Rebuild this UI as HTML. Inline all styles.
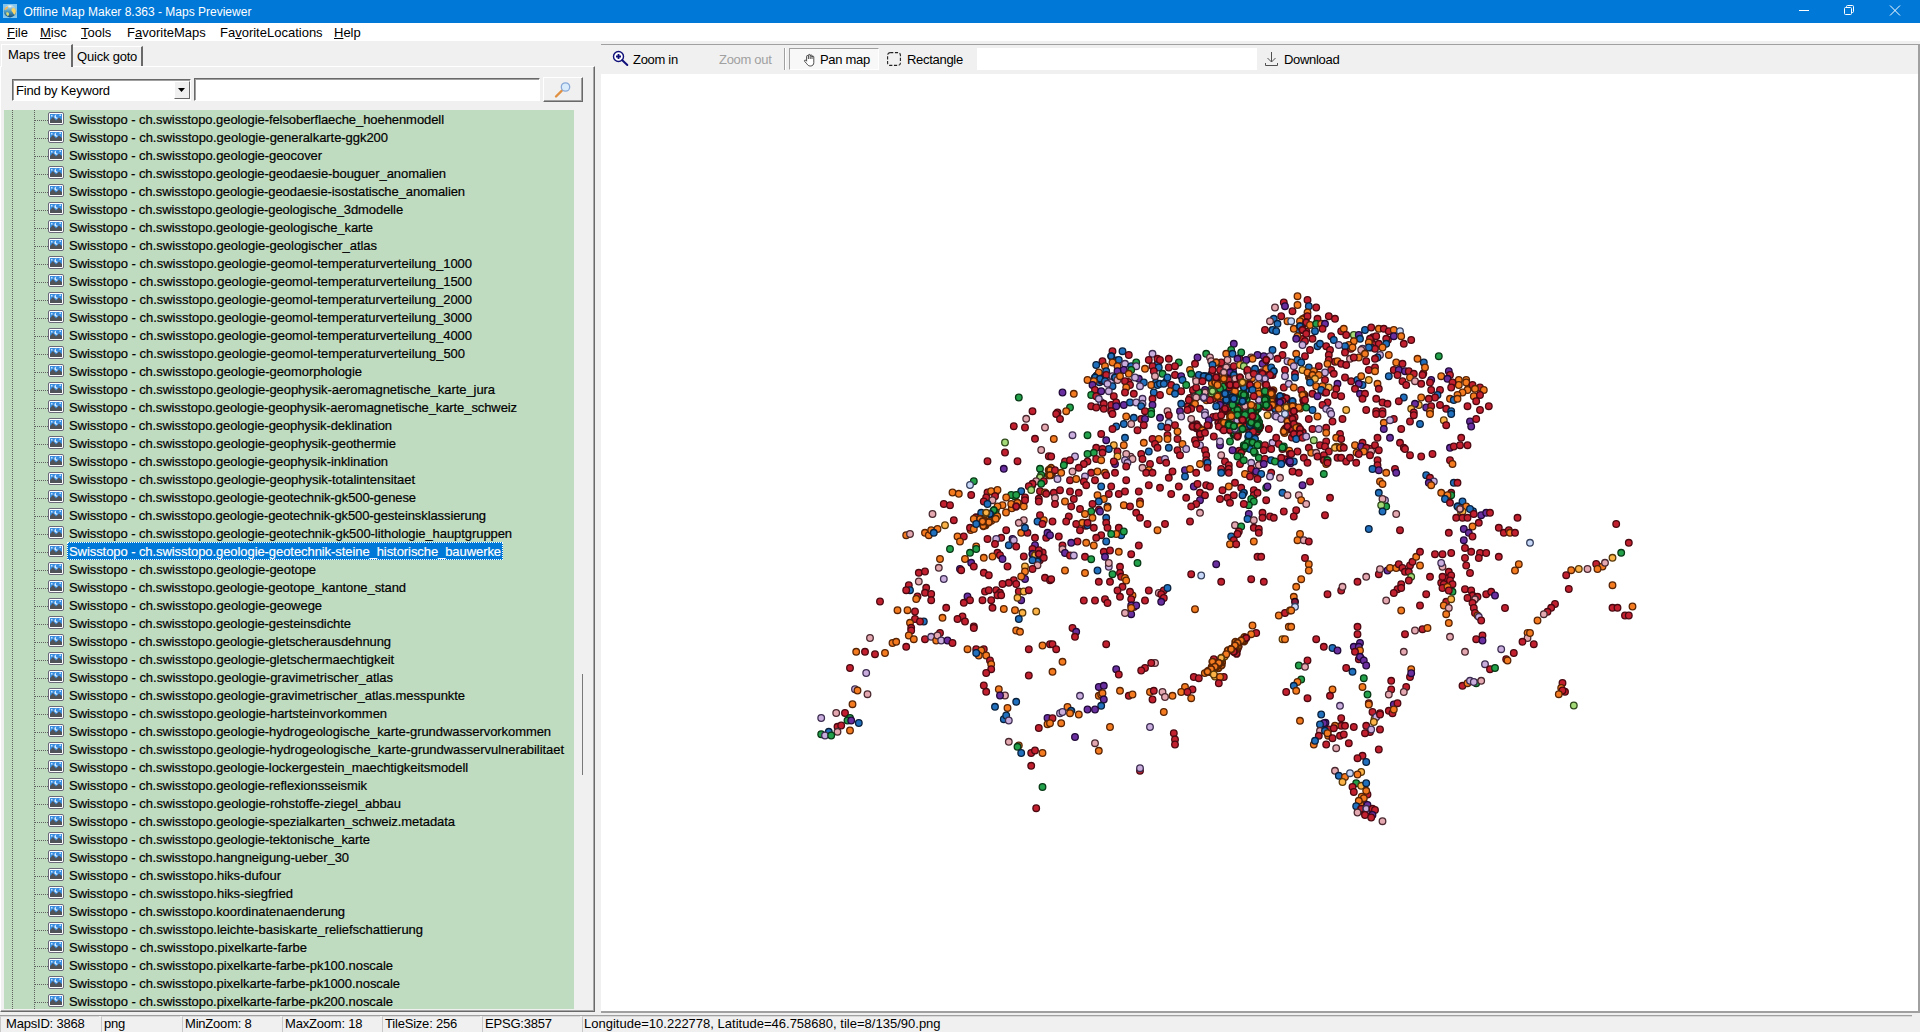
<!DOCTYPE html><html><head><meta charset="utf-8"><title>Offline Map Maker 8.363 - Maps Previewer</title><style>
*{box-sizing:border-box;margin:0;padding:0}
html,body{width:1920px;height:1032px;overflow:hidden;background:#f0f0f0}
body{position:relative;font-family:"Liberation Sans",sans-serif;font-size:12px;color:#000}
.abs{position:absolute}
#title{left:0;top:0;width:1920px;height:23px;background:#0078d7;color:#fff}
#title .t{left:23.5px;top:0.5px;line-height:23px;font-size:12px;white-space:nowrap}
#menu{left:0;top:23px;width:1920px;height:18px;background:#fff}
#menu span{position:absolute;top:0;line-height:19px;font-size:13px;white-space:nowrap}
#menu u{text-decoration:underline;text-underline-offset:1px}
.tab{position:absolute;background:#f0f0f0;font-size:13px;white-space:nowrap}
#tree{left:4px;top:110px;width:570px;height:899px;background:#c0dcc0;overflow:hidden}
.r{position:absolute;left:0;height:18px;width:570px}
.r i{position:absolute;left:44px;top:2px;width:16px;height:13px}
.r b{position:absolute;left:64px;top:0;height:18px;line-height:20px;-webkit-text-stroke:0.2px #000;font-weight:normal;white-space:nowrap;padding:0 1px;font-size:13px}
.r.sel b{left:63px;padding:0 2px;background:#0078d7;color:#fff;-webkit-text-stroke:0.2px #fff;outline:1px dotted #fff;outline-offset:-1px}
.vd{position:absolute;width:1px;top:0;height:899px;background-image:repeating-linear-gradient(to bottom,#606060 0 1px,transparent 1px 2px)}
.hd{position:absolute;left:31px;width:13px;height:1px;top:10px;background-image:repeating-linear-gradient(to right,#606060 0 1px,transparent 1px 2px)}
#status span{position:absolute;top:1016px;height:16px;line-height:13px;font-size:13px;letter-spacing:-0.2px;white-space:nowrap;border-left:1px solid #c8c8c8;border-top:1px solid #d8d8d8;padding-left:2px}
.tb{position:absolute;top:45px;height:29px;line-height:29px;font-size:13px;letter-spacing:-0.3px;white-space:nowrap}
</style></head><body>
<div id="title" class="abs"><svg class="abs" style="left:3px;top:4px" width="14" height="14" viewBox="0 0 14 14"><defs><linearGradient id="gl" x1="0" y1="0" x2="0" y2="1"><stop offset="0" stop-color="#dfeef0"/><stop offset="0.45" stop-color="#5aa4c8"/><stop offset="1" stop-color="#14507c"/></linearGradient></defs><rect width="14" height="14" fill="#84c6ee"/><circle cx="7" cy="7.2" r="6.2" fill="url(#gl)"/><path d="M1.3 5.5C2 3.5 3.6 2.2 5 2.4C5.6 3.4 4.4 4.6 3.4 5.4C2.6 6 1.8 6.2 1.3 5.5Z" fill="#f2b45c"/><path d="M8.6 5.2C9.6 3.6 11.4 3.4 12.4 5C13.2 6.6 13 8.6 12 10.2C11.2 11.4 10.4 9.8 9.8 8.6C9 7.6 8 6.4 8.6 5.2Z" fill="#f8d468"/><path d="M3.4 8.6C4.4 8 5.8 8.6 6 9.8C6.2 11 5.4 12.2 4.4 11.8C3.4 11.2 2.8 9.6 3.4 8.6Z" fill="#d8d878"/><path d="M5.2 2.2C6.4 1.4 8 1.6 8.6 2.6C8 3.6 6.4 3.8 5.2 2.2Z" fill="#f4f4e4"/></svg><span class="abs t">Offline Map Maker 8.363 - Maps Previewer</span><svg class="abs" style="left:1790px;top:0" width="130" height="23" viewBox="0 0 130 23" fill="none" stroke="#fff" stroke-width="1"><path d="M9 10.5H19"/><rect x="54.5" y="7.5" width="7" height="7" rx="1"/><path d="M56.5 7.5V6.5a1 1 0 0 1 1-1H62.5a1 1 0 0 1 1 1V11.5a1 1 0 0 1-1 1H61.5"/><path d="M100 5.5L110 15.5M110 5.5L100 15.5"/></svg></div>
<div id="menu" class="abs"><span style="left:7px"><u>F</u>ile</span><span style="left:40px"><u>M</u>isc</span><span style="left:81px"><u>T</u>ools</span><span style="left:127px">F<u>a</u>voriteMaps</span><span style="left:220px">Fa<u>v</u>oriteLocations</span><span style="left:334px"><u>H</u>elp</span></div>
<div class="abs" style="left:0;top:66px;width:595px;height:946px;border-top:1px solid #fff;border-left:1px solid #fff;border-right:1px solid #696969;border-bottom:1px solid #696969;box-shadow:inset -1px -1px 0 #a8a8a8"></div>
<div class="tab" style="left:1px;top:44px;width:72px;height:23px;border-top:1px solid #fff;border-left:1px solid #fff;border-right:2px solid #696969;line-height:20px;padding-left:6px">Maps tree</div>
<div class="tab" style="left:73px;top:46px;width:70px;height:20px;border-top:1px solid #fff;border-right:2px solid #696969;line-height:20px;padding-left:4px;letter-spacing:-0.2px">Quick goto</div>
<div class="abs" style="left:12px;top:79px;width:179px;height:22px;background:#fff;border:1px solid #a0a0a0;border-top-color:#696969;border-left-color:#696969;border-right-color:#fff;border-bottom-color:#fff;box-shadow:inset 1px 1px 0 #a0a0a0"><span class="abs" style="left:3px;top:2px;line-height:18px;font-size:13px;letter-spacing:-0.2px;white-space:nowrap">Find by Keyword</span><div class="abs" style="left:161px;top:1px;width:16px;height:18px;background:#f0f0f0;border:1px solid #fff;border-right-color:#696969;border-bottom-color:#696969"><svg class="abs" style="left:3px;top:6px" width="8" height="4"><path d="M0 0H7L3.5 4Z" fill="#000"/></svg></div></div>
<div class="abs" style="left:194px;top:78px;width:346px;height:23px;background:#fff;border:1px solid #696969;border-right-color:#fff;border-bottom-color:#fff;box-shadow:inset 1px 1px 0 #a0a0a0"></div>
<div class="abs" style="left:543px;top:77px;width:40px;height:25px;background:#f0f0f0;border:1px solid #fff;border-right-color:#696969;border-bottom-color:#696969;box-shadow:inset -1px -1px 0 #a0a0a0"><svg class="abs" style="left:10px;top:3px" width="18" height="18" viewBox="0 0 18 18"><path d="M2 15.5L8 9.5" stroke="#e09040" stroke-width="2.4" stroke-linecap="round"/><circle cx="11.5" cy="6" r="4.2" fill="#d8ecfc" stroke="#88a8d8" stroke-width="1.3"/></svg></div>
<div id="tree" class="abs"><div class="vd" style="left:8px"></div><div class="vd" style="left:30px"></div>
<div class="r" style="top:0px"><div class="hd"></div><i><svg width="16" height="13" viewBox="0 0 16 13"><rect x="0.5" y="0.5" width="15" height="12" rx="1.5" fill="#fff" stroke="#686878"/><rect x="2" y="2" width="12" height="9" fill="#3a8ee0"/><path d="M2 11V8L5 5L8 8.5L11 5.5L14 8V11Z" fill="#505458"/><rect x="3" y="3" width="1.5" height="1.5" fill="#c8e4ff"/><path d="M8.6 2.6a2 2 0 1 0 1.6 2.9a1.6 1.6 0 0 1-1.6-2.9z" fill="#e8f4ff"/><rect x="11.5" y="2.5" width="1.5" height="1.5" fill="#c8e4ff"/></svg></i><b style="letter-spacing:-0.071px">Swisstopo - ch.swisstopo.geologie-felsoberflaeche_hoehenmodell</b></div>
<div class="r" style="top:18px"><div class="hd"></div><i><svg width="16" height="13" viewBox="0 0 16 13"><rect x="0.5" y="0.5" width="15" height="12" rx="1.5" fill="#fff" stroke="#686878"/><rect x="2" y="2" width="12" height="9" fill="#3a8ee0"/><path d="M2 11V8L5 5L8 8.5L11 5.5L14 8V11Z" fill="#505458"/><rect x="3" y="3" width="1.5" height="1.5" fill="#c8e4ff"/><path d="M8.6 2.6a2 2 0 1 0 1.6 2.9a1.6 1.6 0 0 1-1.6-2.9z" fill="#e8f4ff"/><rect x="11.5" y="2.5" width="1.5" height="1.5" fill="#c8e4ff"/></svg></i><b style="letter-spacing:-0.049px">Swisstopo - ch.swisstopo.geologie-generalkarte-ggk200</b></div>
<div class="r" style="top:36px"><div class="hd"></div><i><svg width="16" height="13" viewBox="0 0 16 13"><rect x="0.5" y="0.5" width="15" height="12" rx="1.5" fill="#fff" stroke="#686878"/><rect x="2" y="2" width="12" height="9" fill="#3a8ee0"/><path d="M2 11V8L5 5L8 8.5L11 5.5L14 8V11Z" fill="#505458"/><rect x="3" y="3" width="1.5" height="1.5" fill="#c8e4ff"/><path d="M8.6 2.6a2 2 0 1 0 1.6 2.9a1.6 1.6 0 0 1-1.6-2.9z" fill="#e8f4ff"/><rect x="11.5" y="2.5" width="1.5" height="1.5" fill="#c8e4ff"/></svg></i><b style="letter-spacing:-0.067px">Swisstopo - ch.swisstopo.geologie-geocover</b></div>
<div class="r" style="top:54px"><div class="hd"></div><i><svg width="16" height="13" viewBox="0 0 16 13"><rect x="0.5" y="0.5" width="15" height="12" rx="1.5" fill="#fff" stroke="#686878"/><rect x="2" y="2" width="12" height="9" fill="#3a8ee0"/><path d="M2 11V8L5 5L8 8.5L11 5.5L14 8V11Z" fill="#505458"/><rect x="3" y="3" width="1.5" height="1.5" fill="#c8e4ff"/><path d="M8.6 2.6a2 2 0 1 0 1.6 2.9a1.6 1.6 0 0 1-1.6-2.9z" fill="#e8f4ff"/><rect x="11.5" y="2.5" width="1.5" height="1.5" fill="#c8e4ff"/></svg></i><b style="letter-spacing:-0.075px">Swisstopo - ch.swisstopo.geologie-geodaesie-bouguer_anomalien</b></div>
<div class="r" style="top:72px"><div class="hd"></div><i><svg width="16" height="13" viewBox="0 0 16 13"><rect x="0.5" y="0.5" width="15" height="12" rx="1.5" fill="#fff" stroke="#686878"/><rect x="2" y="2" width="12" height="9" fill="#3a8ee0"/><path d="M2 11V8L5 5L8 8.5L11 5.5L14 8V11Z" fill="#505458"/><rect x="3" y="3" width="1.5" height="1.5" fill="#c8e4ff"/><path d="M8.6 2.6a2 2 0 1 0 1.6 2.9a1.6 1.6 0 0 1-1.6-2.9z" fill="#e8f4ff"/><rect x="11.5" y="2.5" width="1.5" height="1.5" fill="#c8e4ff"/></svg></i><b style="letter-spacing:-0.088px">Swisstopo - ch.swisstopo.geologie-geodaesie-isostatische_anomalien</b></div>
<div class="r" style="top:90px"><div class="hd"></div><i><svg width="16" height="13" viewBox="0 0 16 13"><rect x="0.5" y="0.5" width="15" height="12" rx="1.5" fill="#fff" stroke="#686878"/><rect x="2" y="2" width="12" height="9" fill="#3a8ee0"/><path d="M2 11V8L5 5L8 8.5L11 5.5L14 8V11Z" fill="#505458"/><rect x="3" y="3" width="1.5" height="1.5" fill="#c8e4ff"/><path d="M8.6 2.6a2 2 0 1 0 1.6 2.9a1.6 1.6 0 0 1-1.6-2.9z" fill="#e8f4ff"/><rect x="11.5" y="2.5" width="1.5" height="1.5" fill="#c8e4ff"/></svg></i><b style="letter-spacing:-0.089px">Swisstopo - ch.swisstopo.geologie-geologische_3dmodelle</b></div>
<div class="r" style="top:108px"><div class="hd"></div><i><svg width="16" height="13" viewBox="0 0 16 13"><rect x="0.5" y="0.5" width="15" height="12" rx="1.5" fill="#fff" stroke="#686878"/><rect x="2" y="2" width="12" height="9" fill="#3a8ee0"/><path d="M2 11V8L5 5L8 8.5L11 5.5L14 8V11Z" fill="#505458"/><rect x="3" y="3" width="1.5" height="1.5" fill="#c8e4ff"/><path d="M8.6 2.6a2 2 0 1 0 1.6 2.9a1.6 1.6 0 0 1-1.6-2.9z" fill="#e8f4ff"/><rect x="11.5" y="2.5" width="1.5" height="1.5" fill="#c8e4ff"/></svg></i><b style="letter-spacing:-0.075px">Swisstopo - ch.swisstopo.geologie-geologische_karte</b></div>
<div class="r" style="top:126px"><div class="hd"></div><i><svg width="16" height="13" viewBox="0 0 16 13"><rect x="0.5" y="0.5" width="15" height="12" rx="1.5" fill="#fff" stroke="#686878"/><rect x="2" y="2" width="12" height="9" fill="#3a8ee0"/><path d="M2 11V8L5 5L8 8.5L11 5.5L14 8V11Z" fill="#505458"/><rect x="3" y="3" width="1.5" height="1.5" fill="#c8e4ff"/><path d="M8.6 2.6a2 2 0 1 0 1.6 2.9a1.6 1.6 0 0 1-1.6-2.9z" fill="#e8f4ff"/><rect x="11.5" y="2.5" width="1.5" height="1.5" fill="#c8e4ff"/></svg></i><b style="letter-spacing:-0.053px">Swisstopo - ch.swisstopo.geologie-geologischer_atlas</b></div>
<div class="r" style="top:144px"><div class="hd"></div><i><svg width="16" height="13" viewBox="0 0 16 13"><rect x="0.5" y="0.5" width="15" height="12" rx="1.5" fill="#fff" stroke="#686878"/><rect x="2" y="2" width="12" height="9" fill="#3a8ee0"/><path d="M2 11V8L5 5L8 8.5L11 5.5L14 8V11Z" fill="#505458"/><rect x="3" y="3" width="1.5" height="1.5" fill="#c8e4ff"/><path d="M8.6 2.6a2 2 0 1 0 1.6 2.9a1.6 1.6 0 0 1-1.6-2.9z" fill="#e8f4ff"/><rect x="11.5" y="2.5" width="1.5" height="1.5" fill="#c8e4ff"/></svg></i><b style="letter-spacing:-0.025px">Swisstopo - ch.swisstopo.geologie-geomol-temperaturverteilung_1000</b></div>
<div class="r" style="top:162px"><div class="hd"></div><i><svg width="16" height="13" viewBox="0 0 16 13"><rect x="0.5" y="0.5" width="15" height="12" rx="1.5" fill="#fff" stroke="#686878"/><rect x="2" y="2" width="12" height="9" fill="#3a8ee0"/><path d="M2 11V8L5 5L8 8.5L11 5.5L14 8V11Z" fill="#505458"/><rect x="3" y="3" width="1.5" height="1.5" fill="#c8e4ff"/><path d="M8.6 2.6a2 2 0 1 0 1.6 2.9a1.6 1.6 0 0 1-1.6-2.9z" fill="#e8f4ff"/><rect x="11.5" y="2.5" width="1.5" height="1.5" fill="#c8e4ff"/></svg></i><b style="letter-spacing:-0.025px">Swisstopo - ch.swisstopo.geologie-geomol-temperaturverteilung_1500</b></div>
<div class="r" style="top:180px"><div class="hd"></div><i><svg width="16" height="13" viewBox="0 0 16 13"><rect x="0.5" y="0.5" width="15" height="12" rx="1.5" fill="#fff" stroke="#686878"/><rect x="2" y="2" width="12" height="9" fill="#3a8ee0"/><path d="M2 11V8L5 5L8 8.5L11 5.5L14 8V11Z" fill="#505458"/><rect x="3" y="3" width="1.5" height="1.5" fill="#c8e4ff"/><path d="M8.6 2.6a2 2 0 1 0 1.6 2.9a1.6 1.6 0 0 1-1.6-2.9z" fill="#e8f4ff"/><rect x="11.5" y="2.5" width="1.5" height="1.5" fill="#c8e4ff"/></svg></i><b style="letter-spacing:-0.025px">Swisstopo - ch.swisstopo.geologie-geomol-temperaturverteilung_2000</b></div>
<div class="r" style="top:198px"><div class="hd"></div><i><svg width="16" height="13" viewBox="0 0 16 13"><rect x="0.5" y="0.5" width="15" height="12" rx="1.5" fill="#fff" stroke="#686878"/><rect x="2" y="2" width="12" height="9" fill="#3a8ee0"/><path d="M2 11V8L5 5L8 8.5L11 5.5L14 8V11Z" fill="#505458"/><rect x="3" y="3" width="1.5" height="1.5" fill="#c8e4ff"/><path d="M8.6 2.6a2 2 0 1 0 1.6 2.9a1.6 1.6 0 0 1-1.6-2.9z" fill="#e8f4ff"/><rect x="11.5" y="2.5" width="1.5" height="1.5" fill="#c8e4ff"/></svg></i><b style="letter-spacing:-0.025px">Swisstopo - ch.swisstopo.geologie-geomol-temperaturverteilung_3000</b></div>
<div class="r" style="top:216px"><div class="hd"></div><i><svg width="16" height="13" viewBox="0 0 16 13"><rect x="0.5" y="0.5" width="15" height="12" rx="1.5" fill="#fff" stroke="#686878"/><rect x="2" y="2" width="12" height="9" fill="#3a8ee0"/><path d="M2 11V8L5 5L8 8.5L11 5.5L14 8V11Z" fill="#505458"/><rect x="3" y="3" width="1.5" height="1.5" fill="#c8e4ff"/><path d="M8.6 2.6a2 2 0 1 0 1.6 2.9a1.6 1.6 0 0 1-1.6-2.9z" fill="#e8f4ff"/><rect x="11.5" y="2.5" width="1.5" height="1.5" fill="#c8e4ff"/></svg></i><b style="letter-spacing:-0.025px">Swisstopo - ch.swisstopo.geologie-geomol-temperaturverteilung_4000</b></div>
<div class="r" style="top:234px"><div class="hd"></div><i><svg width="16" height="13" viewBox="0 0 16 13"><rect x="0.5" y="0.5" width="15" height="12" rx="1.5" fill="#fff" stroke="#686878"/><rect x="2" y="2" width="12" height="9" fill="#3a8ee0"/><path d="M2 11V8L5 5L8 8.5L11 5.5L14 8V11Z" fill="#505458"/><rect x="3" y="3" width="1.5" height="1.5" fill="#c8e4ff"/><path d="M8.6 2.6a2 2 0 1 0 1.6 2.9a1.6 1.6 0 0 1-1.6-2.9z" fill="#e8f4ff"/><rect x="11.5" y="2.5" width="1.5" height="1.5" fill="#c8e4ff"/></svg></i><b style="letter-spacing:-0.022px">Swisstopo - ch.swisstopo.geologie-geomol-temperaturverteilung_500</b></div>
<div class="r" style="top:252px"><div class="hd"></div><i><svg width="16" height="13" viewBox="0 0 16 13"><rect x="0.5" y="0.5" width="15" height="12" rx="1.5" fill="#fff" stroke="#686878"/><rect x="2" y="2" width="12" height="9" fill="#3a8ee0"/><path d="M2 11V8L5 5L8 8.5L11 5.5L14 8V11Z" fill="#505458"/><rect x="3" y="3" width="1.5" height="1.5" fill="#c8e4ff"/><path d="M8.6 2.6a2 2 0 1 0 1.6 2.9a1.6 1.6 0 0 1-1.6-2.9z" fill="#e8f4ff"/><rect x="11.5" y="2.5" width="1.5" height="1.5" fill="#c8e4ff"/></svg></i><b style="letter-spacing:-0.053px">Swisstopo - ch.swisstopo.geologie-geomorphologie</b></div>
<div class="r" style="top:270px"><div class="hd"></div><i><svg width="16" height="13" viewBox="0 0 16 13"><rect x="0.5" y="0.5" width="15" height="12" rx="1.5" fill="#fff" stroke="#686878"/><rect x="2" y="2" width="12" height="9" fill="#3a8ee0"/><path d="M2 11V8L5 5L8 8.5L11 5.5L14 8V11Z" fill="#505458"/><rect x="3" y="3" width="1.5" height="1.5" fill="#c8e4ff"/><path d="M8.6 2.6a2 2 0 1 0 1.6 2.9a1.6 1.6 0 0 1-1.6-2.9z" fill="#e8f4ff"/><rect x="11.5" y="2.5" width="1.5" height="1.5" fill="#c8e4ff"/></svg></i><b style="letter-spacing:-0.056px">Swisstopo - ch.swisstopo.geologie-geophysik-aeromagnetische_karte_jura</b></div>
<div class="r" style="top:288px"><div class="hd"></div><i><svg width="16" height="13" viewBox="0 0 16 13"><rect x="0.5" y="0.5" width="15" height="12" rx="1.5" fill="#fff" stroke="#686878"/><rect x="2" y="2" width="12" height="9" fill="#3a8ee0"/><path d="M2 11V8L5 5L8 8.5L11 5.5L14 8V11Z" fill="#505458"/><rect x="3" y="3" width="1.5" height="1.5" fill="#c8e4ff"/><path d="M8.6 2.6a2 2 0 1 0 1.6 2.9a1.6 1.6 0 0 1-1.6-2.9z" fill="#e8f4ff"/><rect x="11.5" y="2.5" width="1.5" height="1.5" fill="#c8e4ff"/></svg></i><b style="letter-spacing:-0.089px">Swisstopo - ch.swisstopo.geologie-geophysik-aeromagnetische_karte_schweiz</b></div>
<div class="r" style="top:306px"><div class="hd"></div><i><svg width="16" height="13" viewBox="0 0 16 13"><rect x="0.5" y="0.5" width="15" height="12" rx="1.5" fill="#fff" stroke="#686878"/><rect x="2" y="2" width="12" height="9" fill="#3a8ee0"/><path d="M2 11V8L5 5L8 8.5L11 5.5L14 8V11Z" fill="#505458"/><rect x="3" y="3" width="1.5" height="1.5" fill="#c8e4ff"/><path d="M8.6 2.6a2 2 0 1 0 1.6 2.9a1.6 1.6 0 0 1-1.6-2.9z" fill="#e8f4ff"/><rect x="11.5" y="2.5" width="1.5" height="1.5" fill="#c8e4ff"/></svg></i><b style="letter-spacing:-0.079px">Swisstopo - ch.swisstopo.geologie-geophysik-deklination</b></div>
<div class="r" style="top:324px"><div class="hd"></div><i><svg width="16" height="13" viewBox="0 0 16 13"><rect x="0.5" y="0.5" width="15" height="12" rx="1.5" fill="#fff" stroke="#686878"/><rect x="2" y="2" width="12" height="9" fill="#3a8ee0"/><path d="M2 11V8L5 5L8 8.5L11 5.5L14 8V11Z" fill="#505458"/><rect x="3" y="3" width="1.5" height="1.5" fill="#c8e4ff"/><path d="M8.6 2.6a2 2 0 1 0 1.6 2.9a1.6 1.6 0 0 1-1.6-2.9z" fill="#e8f4ff"/><rect x="11.5" y="2.5" width="1.5" height="1.5" fill="#c8e4ff"/></svg></i><b style="letter-spacing:-0.06px">Swisstopo - ch.swisstopo.geologie-geophysik-geothermie</b></div>
<div class="r" style="top:342px"><div class="hd"></div><i><svg width="16" height="13" viewBox="0 0 16 13"><rect x="0.5" y="0.5" width="15" height="12" rx="1.5" fill="#fff" stroke="#686878"/><rect x="2" y="2" width="12" height="9" fill="#3a8ee0"/><path d="M2 11V8L5 5L8 8.5L11 5.5L14 8V11Z" fill="#505458"/><rect x="3" y="3" width="1.5" height="1.5" fill="#c8e4ff"/><path d="M8.6 2.6a2 2 0 1 0 1.6 2.9a1.6 1.6 0 0 1-1.6-2.9z" fill="#e8f4ff"/><rect x="11.5" y="2.5" width="1.5" height="1.5" fill="#c8e4ff"/></svg></i><b style="letter-spacing:-0.073px">Swisstopo - ch.swisstopo.geologie-geophysik-inklination</b></div>
<div class="r" style="top:360px"><div class="hd"></div><i><svg width="16" height="13" viewBox="0 0 16 13"><rect x="0.5" y="0.5" width="15" height="12" rx="1.5" fill="#fff" stroke="#686878"/><rect x="2" y="2" width="12" height="9" fill="#3a8ee0"/><path d="M2 11V8L5 5L8 8.5L11 5.5L14 8V11Z" fill="#505458"/><rect x="3" y="3" width="1.5" height="1.5" fill="#c8e4ff"/><path d="M8.6 2.6a2 2 0 1 0 1.6 2.9a1.6 1.6 0 0 1-1.6-2.9z" fill="#e8f4ff"/><rect x="11.5" y="2.5" width="1.5" height="1.5" fill="#c8e4ff"/></svg></i><b style="letter-spacing:-0.051px">Swisstopo - ch.swisstopo.geologie-geophysik-totalintensitaet</b></div>
<div class="r" style="top:378px"><div class="hd"></div><i><svg width="16" height="13" viewBox="0 0 16 13"><rect x="0.5" y="0.5" width="15" height="12" rx="1.5" fill="#fff" stroke="#686878"/><rect x="2" y="2" width="12" height="9" fill="#3a8ee0"/><path d="M2 11V8L5 5L8 8.5L11 5.5L14 8V11Z" fill="#505458"/><rect x="3" y="3" width="1.5" height="1.5" fill="#c8e4ff"/><path d="M8.6 2.6a2 2 0 1 0 1.6 2.9a1.6 1.6 0 0 1-1.6-2.9z" fill="#e8f4ff"/><rect x="11.5" y="2.5" width="1.5" height="1.5" fill="#c8e4ff"/></svg></i><b style="letter-spacing:-0.087px">Swisstopo - ch.swisstopo.geologie-geotechnik-gk500-genese</b></div>
<div class="r" style="top:396px"><div class="hd"></div><i><svg width="16" height="13" viewBox="0 0 16 13"><rect x="0.5" y="0.5" width="15" height="12" rx="1.5" fill="#fff" stroke="#686878"/><rect x="2" y="2" width="12" height="9" fill="#3a8ee0"/><path d="M2 11V8L5 5L8 8.5L11 5.5L14 8V11Z" fill="#505458"/><rect x="3" y="3" width="1.5" height="1.5" fill="#c8e4ff"/><path d="M8.6 2.6a2 2 0 1 0 1.6 2.9a1.6 1.6 0 0 1-1.6-2.9z" fill="#e8f4ff"/><rect x="11.5" y="2.5" width="1.5" height="1.5" fill="#c8e4ff"/></svg></i><b style="letter-spacing:-0.092px">Swisstopo - ch.swisstopo.geologie-geotechnik-gk500-gesteinsklassierung</b></div>
<div class="r" style="top:414px"><div class="hd"></div><i><svg width="16" height="13" viewBox="0 0 16 13"><rect x="0.5" y="0.5" width="15" height="12" rx="1.5" fill="#fff" stroke="#686878"/><rect x="2" y="2" width="12" height="9" fill="#3a8ee0"/><path d="M2 11V8L5 5L8 8.5L11 5.5L14 8V11Z" fill="#505458"/><rect x="3" y="3" width="1.5" height="1.5" fill="#c8e4ff"/><path d="M8.6 2.6a2 2 0 1 0 1.6 2.9a1.6 1.6 0 0 1-1.6-2.9z" fill="#e8f4ff"/><rect x="11.5" y="2.5" width="1.5" height="1.5" fill="#c8e4ff"/></svg></i><b style="letter-spacing:-0.068px">Swisstopo - ch.swisstopo.geologie-geotechnik-gk500-lithologie_hauptgruppen</b></div>
<div class="r sel" style="top:432px"><div class="hd"></div><i><svg width="16" height="13" viewBox="0 0 16 13"><rect x="0.5" y="0.5" width="15" height="12" rx="1.5" fill="#fff" stroke="#686878"/><rect x="2" y="2" width="12" height="9" fill="#3a8ee0"/><path d="M2 11V8L5 5L8 8.5L11 5.5L14 8V11Z" fill="#505458"/><rect x="3" y="3" width="1.5" height="1.5" fill="#c8e4ff"/><path d="M8.6 2.6a2 2 0 1 0 1.6 2.9a1.6 1.6 0 0 1-1.6-2.9z" fill="#e8f4ff"/><rect x="11.5" y="2.5" width="1.5" height="1.5" fill="#c8e4ff"/></svg></i><b style="letter-spacing:-0.072px">Swisstopo - ch.swisstopo.geologie-geotechnik-steine_historische_bauwerke</b></div>
<div class="r" style="top:450px"><div class="hd"></div><i><svg width="16" height="13" viewBox="0 0 16 13"><rect x="0.5" y="0.5" width="15" height="12" rx="1.5" fill="#fff" stroke="#686878"/><rect x="2" y="2" width="12" height="9" fill="#3a8ee0"/><path d="M2 11V8L5 5L8 8.5L11 5.5L14 8V11Z" fill="#505458"/><rect x="3" y="3" width="1.5" height="1.5" fill="#c8e4ff"/><path d="M8.6 2.6a2 2 0 1 0 1.6 2.9a1.6 1.6 0 0 1-1.6-2.9z" fill="#e8f4ff"/><rect x="11.5" y="2.5" width="1.5" height="1.5" fill="#c8e4ff"/></svg></i><b style="letter-spacing:-0.056px">Swisstopo - ch.swisstopo.geologie-geotope</b></div>
<div class="r" style="top:468px"><div class="hd"></div><i><svg width="16" height="13" viewBox="0 0 16 13"><rect x="0.5" y="0.5" width="15" height="12" rx="1.5" fill="#fff" stroke="#686878"/><rect x="2" y="2" width="12" height="9" fill="#3a8ee0"/><path d="M2 11V8L5 5L8 8.5L11 5.5L14 8V11Z" fill="#505458"/><rect x="3" y="3" width="1.5" height="1.5" fill="#c8e4ff"/><path d="M8.6 2.6a2 2 0 1 0 1.6 2.9a1.6 1.6 0 0 1-1.6-2.9z" fill="#e8f4ff"/><rect x="11.5" y="2.5" width="1.5" height="1.5" fill="#c8e4ff"/></svg></i><b style="letter-spacing:-0.088px">Swisstopo - ch.swisstopo.geologie-geotope_kantone_stand</b></div>
<div class="r" style="top:486px"><div class="hd"></div><i><svg width="16" height="13" viewBox="0 0 16 13"><rect x="0.5" y="0.5" width="15" height="12" rx="1.5" fill="#fff" stroke="#686878"/><rect x="2" y="2" width="12" height="9" fill="#3a8ee0"/><path d="M2 11V8L5 5L8 8.5L11 5.5L14 8V11Z" fill="#505458"/><rect x="3" y="3" width="1.5" height="1.5" fill="#c8e4ff"/><path d="M8.6 2.6a2 2 0 1 0 1.6 2.9a1.6 1.6 0 0 1-1.6-2.9z" fill="#e8f4ff"/><rect x="11.5" y="2.5" width="1.5" height="1.5" fill="#c8e4ff"/></svg></i><b style="letter-spacing:-0.051px">Swisstopo - ch.swisstopo.geologie-geowege</b></div>
<div class="r" style="top:504px"><div class="hd"></div><i><svg width="16" height="13" viewBox="0 0 16 13"><rect x="0.5" y="0.5" width="15" height="12" rx="1.5" fill="#fff" stroke="#686878"/><rect x="2" y="2" width="12" height="9" fill="#3a8ee0"/><path d="M2 11V8L5 5L8 8.5L11 5.5L14 8V11Z" fill="#505458"/><rect x="3" y="3" width="1.5" height="1.5" fill="#c8e4ff"/><path d="M8.6 2.6a2 2 0 1 0 1.6 2.9a1.6 1.6 0 0 1-1.6-2.9z" fill="#e8f4ff"/><rect x="11.5" y="2.5" width="1.5" height="1.5" fill="#c8e4ff"/></svg></i><b style="letter-spacing:-0.072px">Swisstopo - ch.swisstopo.geologie-gesteinsdichte</b></div>
<div class="r" style="top:522px"><div class="hd"></div><i><svg width="16" height="13" viewBox="0 0 16 13"><rect x="0.5" y="0.5" width="15" height="12" rx="1.5" fill="#fff" stroke="#686878"/><rect x="2" y="2" width="12" height="9" fill="#3a8ee0"/><path d="M2 11V8L5 5L8 8.5L11 5.5L14 8V11Z" fill="#505458"/><rect x="3" y="3" width="1.5" height="1.5" fill="#c8e4ff"/><path d="M8.6 2.6a2 2 0 1 0 1.6 2.9a1.6 1.6 0 0 1-1.6-2.9z" fill="#e8f4ff"/><rect x="11.5" y="2.5" width="1.5" height="1.5" fill="#c8e4ff"/></svg></i><b style="letter-spacing:-0.088px">Swisstopo - ch.swisstopo.geologie-gletscherausdehnung</b></div>
<div class="r" style="top:540px"><div class="hd"></div><i><svg width="16" height="13" viewBox="0 0 16 13"><rect x="0.5" y="0.5" width="15" height="12" rx="1.5" fill="#fff" stroke="#686878"/><rect x="2" y="2" width="12" height="9" fill="#3a8ee0"/><path d="M2 11V8L5 5L8 8.5L11 5.5L14 8V11Z" fill="#505458"/><rect x="3" y="3" width="1.5" height="1.5" fill="#c8e4ff"/><path d="M8.6 2.6a2 2 0 1 0 1.6 2.9a1.6 1.6 0 0 1-1.6-2.9z" fill="#e8f4ff"/><rect x="11.5" y="2.5" width="1.5" height="1.5" fill="#c8e4ff"/></svg></i><b style="letter-spacing:-0.055px">Swisstopo - ch.swisstopo.geologie-gletschermaechtigkeit</b></div>
<div class="r" style="top:558px"><div class="hd"></div><i><svg width="16" height="13" viewBox="0 0 16 13"><rect x="0.5" y="0.5" width="15" height="12" rx="1.5" fill="#fff" stroke="#686878"/><rect x="2" y="2" width="12" height="9" fill="#3a8ee0"/><path d="M2 11V8L5 5L8 8.5L11 5.5L14 8V11Z" fill="#505458"/><rect x="3" y="3" width="1.5" height="1.5" fill="#c8e4ff"/><path d="M8.6 2.6a2 2 0 1 0 1.6 2.9a1.6 1.6 0 0 1-1.6-2.9z" fill="#e8f4ff"/><rect x="11.5" y="2.5" width="1.5" height="1.5" fill="#c8e4ff"/></svg></i><b style="letter-spacing:-0.034px">Swisstopo - ch.swisstopo.geologie-gravimetrischer_atlas</b></div>
<div class="r" style="top:576px"><div class="hd"></div><i><svg width="16" height="13" viewBox="0 0 16 13"><rect x="0.5" y="0.5" width="15" height="12" rx="1.5" fill="#fff" stroke="#686878"/><rect x="2" y="2" width="12" height="9" fill="#3a8ee0"/><path d="M2 11V8L5 5L8 8.5L11 5.5L14 8V11Z" fill="#505458"/><rect x="3" y="3" width="1.5" height="1.5" fill="#c8e4ff"/><path d="M8.6 2.6a2 2 0 1 0 1.6 2.9a1.6 1.6 0 0 1-1.6-2.9z" fill="#e8f4ff"/><rect x="11.5" y="2.5" width="1.5" height="1.5" fill="#c8e4ff"/></svg></i><b style="letter-spacing:-0.054px">Swisstopo - ch.swisstopo.geologie-gravimetrischer_atlas.messpunkte</b></div>
<div class="r" style="top:594px"><div class="hd"></div><i><svg width="16" height="13" viewBox="0 0 16 13"><rect x="0.5" y="0.5" width="15" height="12" rx="1.5" fill="#fff" stroke="#686878"/><rect x="2" y="2" width="12" height="9" fill="#3a8ee0"/><path d="M2 11V8L5 5L8 8.5L11 5.5L14 8V11Z" fill="#505458"/><rect x="3" y="3" width="1.5" height="1.5" fill="#c8e4ff"/><path d="M8.6 2.6a2 2 0 1 0 1.6 2.9a1.6 1.6 0 0 1-1.6-2.9z" fill="#e8f4ff"/><rect x="11.5" y="2.5" width="1.5" height="1.5" fill="#c8e4ff"/></svg></i><b style="letter-spacing:-0.04px">Swisstopo - ch.swisstopo.geologie-hartsteinvorkommen</b></div>
<div class="r" style="top:612px"><div class="hd"></div><i><svg width="16" height="13" viewBox="0 0 16 13"><rect x="0.5" y="0.5" width="15" height="12" rx="1.5" fill="#fff" stroke="#686878"/><rect x="2" y="2" width="12" height="9" fill="#3a8ee0"/><path d="M2 11V8L5 5L8 8.5L11 5.5L14 8V11Z" fill="#505458"/><rect x="3" y="3" width="1.5" height="1.5" fill="#c8e4ff"/><path d="M8.6 2.6a2 2 0 1 0 1.6 2.9a1.6 1.6 0 0 1-1.6-2.9z" fill="#e8f4ff"/><rect x="11.5" y="2.5" width="1.5" height="1.5" fill="#c8e4ff"/></svg></i><b style="letter-spacing:-0.065px">Swisstopo - ch.swisstopo.geologie-hydrogeologische_karte-grundwasservorkommen</b></div>
<div class="r" style="top:630px"><div class="hd"></div><i><svg width="16" height="13" viewBox="0 0 16 13"><rect x="0.5" y="0.5" width="15" height="12" rx="1.5" fill="#fff" stroke="#686878"/><rect x="2" y="2" width="12" height="9" fill="#3a8ee0"/><path d="M2 11V8L5 5L8 8.5L11 5.5L14 8V11Z" fill="#505458"/><rect x="3" y="3" width="1.5" height="1.5" fill="#c8e4ff"/><path d="M8.6 2.6a2 2 0 1 0 1.6 2.9a1.6 1.6 0 0 1-1.6-2.9z" fill="#e8f4ff"/><rect x="11.5" y="2.5" width="1.5" height="1.5" fill="#c8e4ff"/></svg></i><b style="letter-spacing:-0.052px">Swisstopo - ch.swisstopo.geologie-hydrogeologische_karte-grundwasservulnerabilitaet</b></div>
<div class="r" style="top:648px"><div class="hd"></div><i><svg width="16" height="13" viewBox="0 0 16 13"><rect x="0.5" y="0.5" width="15" height="12" rx="1.5" fill="#fff" stroke="#686878"/><rect x="2" y="2" width="12" height="9" fill="#3a8ee0"/><path d="M2 11V8L5 5L8 8.5L11 5.5L14 8V11Z" fill="#505458"/><rect x="3" y="3" width="1.5" height="1.5" fill="#c8e4ff"/><path d="M8.6 2.6a2 2 0 1 0 1.6 2.9a1.6 1.6 0 0 1-1.6-2.9z" fill="#e8f4ff"/><rect x="11.5" y="2.5" width="1.5" height="1.5" fill="#c8e4ff"/></svg></i><b style="letter-spacing:-0.073px">Swisstopo - ch.swisstopo.geologie-lockergestein_maechtigkeitsmodell</b></div>
<div class="r" style="top:666px"><div class="hd"></div><i><svg width="16" height="13" viewBox="0 0 16 13"><rect x="0.5" y="0.5" width="15" height="12" rx="1.5" fill="#fff" stroke="#686878"/><rect x="2" y="2" width="12" height="9" fill="#3a8ee0"/><path d="M2 11V8L5 5L8 8.5L11 5.5L14 8V11Z" fill="#505458"/><rect x="3" y="3" width="1.5" height="1.5" fill="#c8e4ff"/><path d="M8.6 2.6a2 2 0 1 0 1.6 2.9a1.6 1.6 0 0 1-1.6-2.9z" fill="#e8f4ff"/><rect x="11.5" y="2.5" width="1.5" height="1.5" fill="#c8e4ff"/></svg></i><b style="letter-spacing:-0.065px">Swisstopo - ch.swisstopo.geologie-reflexionsseismik</b></div>
<div class="r" style="top:684px"><div class="hd"></div><i><svg width="16" height="13" viewBox="0 0 16 13"><rect x="0.5" y="0.5" width="15" height="12" rx="1.5" fill="#fff" stroke="#686878"/><rect x="2" y="2" width="12" height="9" fill="#3a8ee0"/><path d="M2 11V8L5 5L8 8.5L11 5.5L14 8V11Z" fill="#505458"/><rect x="3" y="3" width="1.5" height="1.5" fill="#c8e4ff"/><path d="M8.6 2.6a2 2 0 1 0 1.6 2.9a1.6 1.6 0 0 1-1.6-2.9z" fill="#e8f4ff"/><rect x="11.5" y="2.5" width="1.5" height="1.5" fill="#c8e4ff"/></svg></i><b style="letter-spacing:-0.042px">Swisstopo - ch.swisstopo.geologie-rohstoffe-ziegel_abbau</b></div>
<div class="r" style="top:702px"><div class="hd"></div><i><svg width="16" height="13" viewBox="0 0 16 13"><rect x="0.5" y="0.5" width="15" height="12" rx="1.5" fill="#fff" stroke="#686878"/><rect x="2" y="2" width="12" height="9" fill="#3a8ee0"/><path d="M2 11V8L5 5L8 8.5L11 5.5L14 8V11Z" fill="#505458"/><rect x="3" y="3" width="1.5" height="1.5" fill="#c8e4ff"/><path d="M8.6 2.6a2 2 0 1 0 1.6 2.9a1.6 1.6 0 0 1-1.6-2.9z" fill="#e8f4ff"/><rect x="11.5" y="2.5" width="1.5" height="1.5" fill="#c8e4ff"/></svg></i><b style="letter-spacing:-0.066px">Swisstopo - ch.swisstopo.geologie-spezialkarten_schweiz.metadata</b></div>
<div class="r" style="top:720px"><div class="hd"></div><i><svg width="16" height="13" viewBox="0 0 16 13"><rect x="0.5" y="0.5" width="15" height="12" rx="1.5" fill="#fff" stroke="#686878"/><rect x="2" y="2" width="12" height="9" fill="#3a8ee0"/><path d="M2 11V8L5 5L8 8.5L11 5.5L14 8V11Z" fill="#505458"/><rect x="3" y="3" width="1.5" height="1.5" fill="#c8e4ff"/><path d="M8.6 2.6a2 2 0 1 0 1.6 2.9a1.6 1.6 0 0 1-1.6-2.9z" fill="#e8f4ff"/><rect x="11.5" y="2.5" width="1.5" height="1.5" fill="#c8e4ff"/></svg></i><b style="letter-spacing:-0.063px">Swisstopo - ch.swisstopo.geologie-tektonische_karte</b></div>
<div class="r" style="top:738px"><div class="hd"></div><i><svg width="16" height="13" viewBox="0 0 16 13"><rect x="0.5" y="0.5" width="15" height="12" rx="1.5" fill="#fff" stroke="#686878"/><rect x="2" y="2" width="12" height="9" fill="#3a8ee0"/><path d="M2 11V8L5 5L8 8.5L11 5.5L14 8V11Z" fill="#505458"/><rect x="3" y="3" width="1.5" height="1.5" fill="#c8e4ff"/><path d="M8.6 2.6a2 2 0 1 0 1.6 2.9a1.6 1.6 0 0 1-1.6-2.9z" fill="#e8f4ff"/><rect x="11.5" y="2.5" width="1.5" height="1.5" fill="#c8e4ff"/></svg></i><b style="letter-spacing:-0.073px">Swisstopo - ch.swisstopo.hangneigung-ueber_30</b></div>
<div class="r" style="top:756px"><div class="hd"></div><i><svg width="16" height="13" viewBox="0 0 16 13"><rect x="0.5" y="0.5" width="15" height="12" rx="1.5" fill="#fff" stroke="#686878"/><rect x="2" y="2" width="12" height="9" fill="#3a8ee0"/><path d="M2 11V8L5 5L8 8.5L11 5.5L14 8V11Z" fill="#505458"/><rect x="3" y="3" width="1.5" height="1.5" fill="#c8e4ff"/><path d="M8.6 2.6a2 2 0 1 0 1.6 2.9a1.6 1.6 0 0 1-1.6-2.9z" fill="#e8f4ff"/><rect x="11.5" y="2.5" width="1.5" height="1.5" fill="#c8e4ff"/></svg></i><b style="letter-spacing:-0.032px">Swisstopo - ch.swisstopo.hiks-dufour</b></div>
<div class="r" style="top:774px"><div class="hd"></div><i><svg width="16" height="13" viewBox="0 0 16 13"><rect x="0.5" y="0.5" width="15" height="12" rx="1.5" fill="#fff" stroke="#686878"/><rect x="2" y="2" width="12" height="9" fill="#3a8ee0"/><path d="M2 11V8L5 5L8 8.5L11 5.5L14 8V11Z" fill="#505458"/><rect x="3" y="3" width="1.5" height="1.5" fill="#c8e4ff"/><path d="M8.6 2.6a2 2 0 1 0 1.6 2.9a1.6 1.6 0 0 1-1.6-2.9z" fill="#e8f4ff"/><rect x="11.5" y="2.5" width="1.5" height="1.5" fill="#c8e4ff"/></svg></i><b style="letter-spacing:-0.036px">Swisstopo - ch.swisstopo.hiks-siegfried</b></div>
<div class="r" style="top:792px"><div class="hd"></div><i><svg width="16" height="13" viewBox="0 0 16 13"><rect x="0.5" y="0.5" width="15" height="12" rx="1.5" fill="#fff" stroke="#686878"/><rect x="2" y="2" width="12" height="9" fill="#3a8ee0"/><path d="M2 11V8L5 5L8 8.5L11 5.5L14 8V11Z" fill="#505458"/><rect x="3" y="3" width="1.5" height="1.5" fill="#c8e4ff"/><path d="M8.6 2.6a2 2 0 1 0 1.6 2.9a1.6 1.6 0 0 1-1.6-2.9z" fill="#e8f4ff"/><rect x="11.5" y="2.5" width="1.5" height="1.5" fill="#c8e4ff"/></svg></i><b style="letter-spacing:-0.066px">Swisstopo - ch.swisstopo.koordinatenaenderung</b></div>
<div class="r" style="top:810px"><div class="hd"></div><i><svg width="16" height="13" viewBox="0 0 16 13"><rect x="0.5" y="0.5" width="15" height="12" rx="1.5" fill="#fff" stroke="#686878"/><rect x="2" y="2" width="12" height="9" fill="#3a8ee0"/><path d="M2 11V8L5 5L8 8.5L11 5.5L14 8V11Z" fill="#505458"/><rect x="3" y="3" width="1.5" height="1.5" fill="#c8e4ff"/><path d="M8.6 2.6a2 2 0 1 0 1.6 2.9a1.6 1.6 0 0 1-1.6-2.9z" fill="#e8f4ff"/><rect x="11.5" y="2.5" width="1.5" height="1.5" fill="#c8e4ff"/></svg></i><b style="letter-spacing:-0.036px">Swisstopo - ch.swisstopo.leichte-basiskarte_reliefschattierung</b></div>
<div class="r" style="top:828px"><div class="hd"></div><i><svg width="16" height="13" viewBox="0 0 16 13"><rect x="0.5" y="0.5" width="15" height="12" rx="1.5" fill="#fff" stroke="#686878"/><rect x="2" y="2" width="12" height="9" fill="#3a8ee0"/><path d="M2 11V8L5 5L8 8.5L11 5.5L14 8V11Z" fill="#505458"/><rect x="3" y="3" width="1.5" height="1.5" fill="#c8e4ff"/><path d="M8.6 2.6a2 2 0 1 0 1.6 2.9a1.6 1.6 0 0 1-1.6-2.9z" fill="#e8f4ff"/><rect x="11.5" y="2.5" width="1.5" height="1.5" fill="#c8e4ff"/></svg></i><b style="letter-spacing:-0.011px">Swisstopo - ch.swisstopo.pixelkarte-farbe</b></div>
<div class="r" style="top:846px"><div class="hd"></div><i><svg width="16" height="13" viewBox="0 0 16 13"><rect x="0.5" y="0.5" width="15" height="12" rx="1.5" fill="#fff" stroke="#686878"/><rect x="2" y="2" width="12" height="9" fill="#3a8ee0"/><path d="M2 11V8L5 5L8 8.5L11 5.5L14 8V11Z" fill="#505458"/><rect x="3" y="3" width="1.5" height="1.5" fill="#c8e4ff"/><path d="M8.6 2.6a2 2 0 1 0 1.6 2.9a1.6 1.6 0 0 1-1.6-2.9z" fill="#e8f4ff"/><rect x="11.5" y="2.5" width="1.5" height="1.5" fill="#c8e4ff"/></svg></i><b style="letter-spacing:-0.047px">Swisstopo - ch.swisstopo.pixelkarte-farbe-pk100.noscale</b></div>
<div class="r" style="top:864px"><div class="hd"></div><i><svg width="16" height="13" viewBox="0 0 16 13"><rect x="0.5" y="0.5" width="15" height="12" rx="1.5" fill="#fff" stroke="#686878"/><rect x="2" y="2" width="12" height="9" fill="#3a8ee0"/><path d="M2 11V8L5 5L8 8.5L11 5.5L14 8V11Z" fill="#505458"/><rect x="3" y="3" width="1.5" height="1.5" fill="#c8e4ff"/><path d="M8.6 2.6a2 2 0 1 0 1.6 2.9a1.6 1.6 0 0 1-1.6-2.9z" fill="#e8f4ff"/><rect x="11.5" y="2.5" width="1.5" height="1.5" fill="#c8e4ff"/></svg></i><b style="letter-spacing:-0.051px">Swisstopo - ch.swisstopo.pixelkarte-farbe-pk1000.noscale</b></div>
<div class="r" style="top:882px"><div class="hd"></div><i><svg width="16" height="13" viewBox="0 0 16 13"><rect x="0.5" y="0.5" width="15" height="12" rx="1.5" fill="#fff" stroke="#686878"/><rect x="2" y="2" width="12" height="9" fill="#3a8ee0"/><path d="M2 11V8L5 5L8 8.5L11 5.5L14 8V11Z" fill="#505458"/><rect x="3" y="3" width="1.5" height="1.5" fill="#c8e4ff"/><path d="M8.6 2.6a2 2 0 1 0 1.6 2.9a1.6 1.6 0 0 1-1.6-2.9z" fill="#e8f4ff"/><rect x="11.5" y="2.5" width="1.5" height="1.5" fill="#c8e4ff"/></svg></i><b style="letter-spacing:-0.047px">Swisstopo - ch.swisstopo.pixelkarte-farbe-pk200.noscale</b></div>
</div>
<div class="abs" style="left:582px;top:674px;width:1px;height:101px;background:#787878"></div>
<div class="abs" style="left:601px;top:44px;width:1319px;height:30px;border-top:1px solid #a0a0a0;border-right:2px solid #a0a0a0;background:#f0f0f0"></div>
<svg class="abs" style="left:612px;top:50px" width="17" height="17" viewBox="0 0 17 17" fill="none"><circle cx="6.5" cy="6.5" r="5" stroke="#10107a" stroke-width="1.4" fill="#fff"/><path d="M4 6.5H9M6.5 4V9" stroke="#10107a" stroke-width="1.8"/><path d="M10.3 10.3L15.3 15" stroke="#10107a" stroke-width="2" stroke-linecap="round"/></svg>
<span class="tb" style="left:633px">Zoom in</span>
<span class="tb" style="left:719px;color:#a0a0a0">Zoom out</span>
<div class="abs" style="left:784px;top:48px;width:1px;height:22px;background:#a0a0a0"></div><div class="abs" style="left:785px;top:48px;width:1px;height:22px;background:#fff"></div>
<div class="abs" style="left:789px;top:48px;width:90px;height:22px;background:#f8f8f8;border-top:1px solid #a0a0a0;border-left:1px solid #a0a0a0;border-right:1px solid #fff;border-bottom:1px solid #fff"></div>
<svg class="abs" style="left:803px;top:53px" width="13" height="14" viewBox="0 0 13 14" fill="none" stroke="#383838" stroke-width="0.9" stroke-linejoin="round"><path fill="#fff" d="M3.6 8.2V3.4a.9.9 0 0 1 1.8 0V2.3a.9.9 0 0 1 1.8 0V2.8a.9.9 0 0 1 1.8 0V4a.9.9 0 0 1 1.8 0V9.5c0 2.2-1.2 3.5-3.4 3.5c-1.8 0-2.6-.8-3.6-2.2L1.6 8.3c-.6-.9.5-1.7 1.2-.9z"/><path d="M5.4 3.2V6M7.2 2.6V6M9 3.2V6"/></svg>
<span class="tb" style="left:820px">Pan map</span>
<svg class="abs" style="left:886px;top:51px" width="16" height="16" viewBox="0 0 16 16" fill="none"><rect x="1.6" y="1.6" width="12.8" height="12.8" rx="2.5" stroke="#202020" stroke-width="1.1" stroke-dasharray="3.2 1.6"/></svg>
<span class="tb" style="left:907px">Rectangle</span>
<div class="abs" style="left:977px;top:48px;width:280px;height:22px;background:#fff"></div>
<svg class="abs" style="left:1264px;top:51px" width="15" height="16" viewBox="0 0 15 16" fill="none" stroke="#505050" stroke-width="1"><path d="M7.5 1V11M3.5 7L7.5 11L11.5 7M1.5 12V14.5H13.5V12"/></svg>
<span class="tb" style="left:1284px">Download</span>
<div class="abs" style="left:601px;top:74px;width:1319px;height:939px;background:#fff;border-right:2px solid #a0a0a0;border-bottom:2px solid #a0a0a0"></div>
<svg class="abs" style="left:0;top:0" width="1920" height="1032" viewBox="0 0 1920 1032" stroke-width="1.3"><style>.cr{fill:#c2202f;stroke:#4a0810}.co{fill:#f47b20;stroke:#582404}.cb{fill:#2070bd;stroke:#08203c}.cp{fill:#6a2f9f;stroke:#200838}.ck{fill:#e3a8b0;stroke:#4a2830}.cl{fill:#c9aedd;stroke:#3c2c50}.cg{fill:#23a04a;stroke:#063814}.cy{fill:#a3d977;stroke:#2c4818}.ca{fill:#fbb347;stroke:#583808}.cn{fill:#1c5ca8;stroke:#000008}.cw{fill:#c8d8f8;stroke:#34405c}.cm{fill:#8a1c40;stroke:#200410}.x{stroke-width:1.7px}</style><circle class="co x" cx="1218.5" cy="668.1" r="3.3"/><circle class="co x" cx="1230.4" cy="650.0" r="3.3"/><circle class="co x" cx="1214.9" cy="667.3" r="3.3"/><circle class="co x" cx="1244.1" cy="639.1" r="3.3"/><circle class="co x" cx="1237.3" cy="648.9" r="3.3"/><circle class="co x" cx="1218.9" cy="662.9" r="3.3"/><circle class="cr x" cx="1237.1" cy="650.1" r="3.3"/><circle class="co x" cx="1236.4" cy="645.0" r="3.3"/><circle class="co x" cx="1221.9" cy="662.0" r="3.3"/><circle class="co x" cx="1234.7" cy="652.1" r="3.3"/><circle class="co x" cx="1244.4" cy="637.2" r="3.3"/><circle class="co x" cx="1211.9" cy="666.6" r="3.3"/><circle class="co x" cx="1220.1" cy="664.8" r="3.3"/><circle class="co x" cx="1221.6" cy="665.2" r="3.3"/><circle class="cr x" cx="1235.0" cy="647.3" r="3.3"/><circle class="cr x" cx="1211.0" cy="672.1" r="3.3"/><circle class="co x" cx="1221.9" cy="662.2" r="3.3"/><circle class="co x" cx="987.7" cy="515.9" r="3.3"/><circle class="co x" cx="985.6" cy="525.2" r="3.3"/><circle class="co x" cx="985.5" cy="523.4" r="3.3"/><circle class="co" cx="991.4" cy="520.8" r="3.3"/><circle class="cg x" cx="1237.5" cy="402.1" r="3.3"/><circle class="cg x" cx="1245.5" cy="395.5" r="3.3"/><circle class="cg" cx="1258.2" cy="408.3" r="3.3"/><circle class="cg x" cx="1255.5" cy="411.2" r="3.3"/><circle class="cg x" cx="1235.9" cy="412.7" r="3.3"/><circle class="co x" cx="1252.0" cy="423.2" r="3.3"/><circle class="co x" cx="1237.9" cy="434.3" r="3.3"/><circle class="cg x" cx="1241.5" cy="410.0" r="3.3"/><circle class="cg x" cx="1254.5" cy="419.3" r="3.3"/><circle class="cg x" cx="1244.0" cy="423.7" r="3.3"/><circle class="cr x" cx="1219.5" cy="377.8" r="3.3"/><circle class="cr" cx="1229.2" cy="387.4" r="3.3"/><circle class="cr x" cx="1231.8" cy="382.2" r="3.3"/><circle class="cr x" cx="1236.5" cy="383.1" r="3.3"/><circle class="cr x" cx="1263.3" cy="373.5" r="3.3"/><circle class="cr x" cx="1265.4" cy="383.9" r="3.3"/><circle class="cr x" cx="1278.0" cy="405.3" r="3.3"/><circle class="cr x" cx="1282.8" cy="397.6" r="3.3"/><circle class="cr x" cx="1292.3" cy="418.4" r="3.3"/><circle class="cr x" cx="1288.6" cy="429.2" r="3.3"/><circle class="cr x" cx="1298.1" cy="430.1" r="3.3"/><circle class="cr x" cx="1225.3" cy="411.2" r="3.3"/><circle class="cr x" cx="1222.9" cy="410.8" r="3.3"/><circle class="cr x" cx="1257.0" cy="431.8" r="3.3"/><circle class="cr x" cx="1260.2" cy="426.4" r="3.3"/><circle class="cr x" cx="1247.9" cy="429.2" r="3.3"/><circle class="cr x" cx="1196.5" cy="424.3" r="3.3"/><circle class="cr x" cx="1255.3" cy="420.8" r="3.3"/><circle class="co" cx="1211.9" cy="383.3" r="3.3"/><circle class="co x" cx="1213.6" cy="392.1" r="3.3"/><circle class="co x" cx="1256.7" cy="407.0" r="3.3"/><circle class="cr x" cx="1261.2" cy="398.3" r="3.3"/><circle class="co x" cx="1272.4" cy="397.3" r="3.3"/><circle class="co x" cx="1271.2" cy="404.1" r="3.3"/><circle class="co x" cx="1292.9" cy="405.2" r="3.3"/><circle class="cr x" cx="1289.8" cy="406.3" r="3.3"/><circle class="co x" cx="1295.6" cy="408.9" r="3.3"/><circle class="co x" cx="1227.1" cy="423.0" r="3.3"/><circle class="co x" cx="1239.9" cy="423.7" r="3.3"/><circle class="co x" cx="1296.2" cy="427.5" r="3.3"/><circle class="co x" cx="1309.1" cy="377.4" r="3.3"/><circle class="co x" cx="1254.7" cy="415.2" r="3.3"/><circle class="cb x" cx="1229.3" cy="395.1" r="3.3"/><circle class="cr x" cx="1229.8" cy="399.0" r="3.3"/><circle class="cb x" cx="1247.9" cy="426.3" r="3.3"/><circle class="cp x" cx="1278.2" cy="400.4" r="3.3"/><circle class="co" cx="1206.5" cy="400.3" r="3.3"/><circle class="cr x" cx="1239.7" cy="423.5" r="3.3"/><circle class="cl x" cx="1260.8" cy="398.9" r="3.3"/><circle class="ck x" cx="1193.9" cy="392.3" r="3.3"/><circle class="ck x" cx="1234.3" cy="380.2" r="3.3"/><circle class="cr" cx="1239.3" cy="358.3" r="3.3"/><circle class="cr" cx="1221.1" cy="364.1" r="3.3"/><circle class="cb" cx="1205.9" cy="376.8" r="3.3"/><circle class="cr" cx="1211.8" cy="373.7" r="3.3"/><circle class="ck" cx="1228.0" cy="367.7" r="3.3"/><circle class="cr" cx="1247.3" cy="371.8" r="3.3"/><circle class="cp" cx="1265.3" cy="362.1" r="3.3"/><circle class="cp" cx="1233.0" cy="371.2" r="3.3"/><circle class="cb x" cx="1230.6" cy="376.1" r="3.3"/><circle class="ck x" cx="1225.4" cy="372.4" r="3.3"/><circle class="cr x" cx="1219.2" cy="377.1" r="3.3"/><circle class="co x" cx="1221.9" cy="376.0" r="3.3"/><circle class="cr x" cx="1232.0" cy="377.3" r="3.3"/><circle class="co x" cx="1235.3" cy="380.8" r="3.3"/><circle class="cr x" cx="1238.0" cy="378.9" r="3.3"/><circle class="ca x" cx="1245.7" cy="384.0" r="3.3"/><circle class="co" cx="1252.1" cy="378.2" r="3.3"/><circle class="cr" cx="1261.9" cy="372.2" r="3.3"/><circle class="cr" cx="1272.5" cy="375.1" r="3.3"/><circle class="cl x" cx="1262.6" cy="378.4" r="3.3"/><circle class="co" cx="1256.6" cy="386.5" r="3.3"/><circle class="cr x" cx="1266.3" cy="388.7" r="3.3"/><circle class="cb" cx="1245.7" cy="390.0" r="3.3"/><circle class="co x" cx="1248.8" cy="383.7" r="3.3"/><circle class="co x" cx="1257.9" cy="389.9" r="3.3"/><circle class="cg x" cx="1266.9" cy="391.1" r="3.3"/><circle class="co x" cx="1273.3" cy="390.3" r="3.3"/><circle class="cg x" cx="1267.0" cy="397.0" r="3.3"/><circle class="cr x" cx="1265.7" cy="400.5" r="3.3"/><circle class="co x" cx="1271.5" cy="400.9" r="3.3"/><circle class="cr x" cx="1283.2" cy="397.1" r="3.3"/><circle class="cr x" cx="1279.5" cy="400.1" r="3.3"/><circle class="co x" cx="1278.5" cy="402.6" r="3.3"/><circle class="cr" cx="1265.2" cy="406.9" r="3.3"/><circle class="cr x" cx="1260.0" cy="398.2" r="3.3"/><circle class="cr x" cx="1256.6" cy="395.8" r="3.3"/><circle class="ck x" cx="1243.5" cy="401.7" r="3.3"/><circle class="cb x" cx="1244.2" cy="402.1" r="3.3"/><circle class="cg x" cx="1244.0" cy="399.2" r="3.3"/><circle class="cg x" cx="1240.9" cy="397.1" r="3.3"/><circle class="co x" cx="1234.3" cy="394.1" r="3.3"/><circle class="cb x" cx="1235.4" cy="400.2" r="3.3"/><circle class="cr x" cx="1222.6" cy="401.0" r="3.3"/><circle class="cg" cx="1223.6" cy="386.7" r="3.3"/><circle class="co x" cx="1217.5" cy="382.8" r="3.3"/><circle class="cy x" cx="1211.0" cy="389.6" r="3.3"/><circle class="co x" cx="1213.5" cy="396.3" r="3.3"/><circle class="cr x" cx="1213.2" cy="398.9" r="3.3"/><circle class="ck x" cx="1203.7" cy="393.8" r="3.3"/><circle class="cr" cx="1192.9" cy="390.0" r="3.3"/><circle class="ck" cx="1196.1" cy="379.0" r="3.3"/><circle class="cr x" cx="1199.5" cy="395.9" r="3.3"/><circle class="cr" cx="1189.9" cy="398.0" r="3.3"/><circle class="cr" cx="1188.0" cy="406.3" r="3.3"/><circle class="cr" cx="1220.2" cy="402.4" r="3.3"/><circle class="cr x" cx="1228.4" cy="409.8" r="3.3"/><circle class="cr x" cx="1228.6" cy="383.2" r="3.3"/><circle class="cb" cx="1116.3" cy="360.4" r="3.3"/><circle class="cr" cx="1118.6" cy="373.0" r="3.3"/><circle class="co x" cx="1096.9" cy="375.6" r="3.3"/><circle class="cb" cx="1106.3" cy="373.2" r="3.3"/><circle class="cr x" cx="1103.7" cy="377.8" r="3.3"/><circle class="cb x" cx="1096.8" cy="375.6" r="3.3"/><circle class="cb" cx="1099.5" cy="382.3" r="3.3"/><circle class="cr x" cx="1101.3" cy="380.6" r="3.3"/><circle class="cl x" cx="1112.5" cy="378.9" r="3.3"/><circle class="cr" cx="1128.4" cy="382.0" r="3.3"/><circle class="cl" cx="1111.2" cy="382.0" r="3.3"/><circle class="cl" cx="1101.2" cy="402.2" r="3.3"/><circle class="cr" cx="1111.5" cy="409.8" r="3.3"/><circle class="cb" cx="1157.8" cy="363.4" r="3.3"/><circle class="cb" cx="1166.2" cy="381.4" r="3.3"/><circle class="cb" cx="1155.8" cy="382.7" r="3.3"/><circle class="cr" cx="1304.7" cy="318.0" r="3.3"/><circle class="co x" cx="1302.5" cy="319.1" r="3.3"/><circle class="cr x" cx="1304.0" cy="323.7" r="3.3"/><circle class="cb" cx="1299.0" cy="330.0" r="3.3"/><circle class="cr" cx="1306.5" cy="331.7" r="3.3"/><circle class="cr" cx="1302.7" cy="339.0" r="3.3"/><circle class="cr" cx="1350.9" cy="348.8" r="3.3"/><circle class="cr" cx="1372.9" cy="337.3" r="3.3"/><circle class="cr" cx="1388.0" cy="339.7" r="3.3"/><circle class="cr" cx="1374.4" cy="344.9" r="3.3"/><circle class="cb" cx="1371.0" cy="347.5" r="3.3"/><circle class="ck" cx="1363.3" cy="349.5" r="3.3"/><circle class="cr" cx="1335.0" cy="361.7" r="3.3"/><circle class="co x" cx="1314.3" cy="372.8" r="3.3"/><circle class="co x" cx="1310.4" cy="378.6" r="3.3"/><circle class="cr" cx="1423.3" cy="373.4" r="3.3"/><circle class="cr" cx="1324.7" cy="392.5" r="3.3"/><circle class="cr" cx="1303.9" cy="402.3" r="3.3"/><circle class="cb x" cx="1291.0" cy="402.5" r="3.3"/><circle class="co x" cx="1289.5" cy="406.6" r="3.3"/><circle class="co" cx="1300.1" cy="408.5" r="3.3"/><circle class="cr x" cx="1290.0" cy="413.3" r="3.3"/><circle class="co" cx="1456.3" cy="382.7" r="3.3"/><circle class="co" cx="1468.8" cy="388.0" r="3.3"/><circle class="co x" cx="1051.1" cy="467.9" r="3.3"/><circle class="co x" cx="1051.7" cy="474.9" r="3.3"/><circle class="cr x" cx="1040.0" cy="481.8" r="3.3"/><circle class="cr" cx="1032.0" cy="485.5" r="3.3"/><circle class="cr" cx="995.7" cy="492.2" r="3.3"/><circle class="cg" cx="1015.0" cy="496.4" r="3.3"/><circle class="co" cx="995.9" cy="509.5" r="3.3"/><circle class="co" cx="1012.3" cy="507.6" r="3.3"/><circle class="co" cx="1019.6" cy="504.3" r="3.3"/><circle class="cg" cx="995.5" cy="513.2" r="3.3"/><circle class="cb" cx="979.8" cy="516.6" r="3.3"/><circle class="co x" cx="988.3" cy="516.1" r="3.3"/><circle class="ca x" cx="987.4" cy="516.1" r="3.3"/><circle class="cr x" cx="975.9" cy="517.4" r="3.3"/><circle class="co x" cx="977.6" cy="521.8" r="3.3"/><circle class="co x" cx="984.8" cy="524.4" r="3.3"/><circle class="cp x" cx="1033.5" cy="555.7" r="3.3"/><circle class="cr x" cx="1035.1" cy="551.5" r="3.3"/><circle class="cr" cx="1042.7" cy="552.5" r="3.3"/><circle class="cr" cx="1039.8" cy="560.3" r="3.3"/><circle class="cr" cx="1213.2" cy="417.0" r="3.3"/><circle class="co" cx="1230.0" cy="416.7" r="3.3"/><circle class="cr x" cx="1239.2" cy="417.6" r="3.3"/><circle class="cr x" cx="1254.8" cy="418.6" r="3.3"/><circle class="cg x" cx="1256.6" cy="421.5" r="3.3"/><circle class="cw x" cx="1288.2" cy="414.5" r="3.3"/><circle class="co x" cx="1287.8" cy="417.8" r="3.3"/><circle class="cr x" cx="1199.0" cy="427.7" r="3.3"/><circle class="co x" cx="1199.8" cy="431.3" r="3.3"/><circle class="cr x" cx="1218.4" cy="422.8" r="3.3"/><circle class="cr x" cx="1221.2" cy="422.7" r="3.3"/><circle class="cg x" cx="1231.7" cy="425.3" r="3.3"/><circle class="cg x" cx="1235.2" cy="429.4" r="3.3"/><circle class="co x" cx="1241.0" cy="423.2" r="3.3"/><circle class="cr x" cx="1247.8" cy="423.7" r="3.3"/><circle class="cb x" cx="1246.9" cy="422.6" r="3.3"/><circle class="cg x" cx="1259.0" cy="422.1" r="3.3"/><circle class="cg x" cx="1259.0" cy="429.0" r="3.3"/><circle class="cr" cx="1222.3" cy="428.5" r="3.3"/><circle class="cr x" cx="1230.6" cy="428.1" r="3.3"/><circle class="cg x" cx="1233.7" cy="434.5" r="3.3"/><circle class="co x" cx="1243.8" cy="427.8" r="3.3"/><circle class="cr x" cx="1285.7" cy="428.3" r="3.3"/><circle class="cr" cx="1200.4" cy="437.2" r="3.3"/><circle class="cr x" cx="1234.8" cy="433.2" r="3.3"/><circle class="cb" cx="1248.2" cy="436.6" r="3.3"/><circle class="cb x" cx="1253.0" cy="437.2" r="3.3"/><circle class="cg x" cx="1244.2" cy="448.5" r="3.3"/><circle class="cg" cx="1257.6" cy="445.4" r="3.3"/><circle class="cr" cx="1239.2" cy="450.8" r="3.3"/><circle class="cg" cx="1254.8" cy="452.9" r="3.3"/><circle class="ck" cx="1130.6" cy="456.6" r="3.3"/><circle class="ck" cx="1260.1" cy="464.3" r="3.3"/><circle class="cr" cx="1284.7" cy="459.1" r="3.3"/><circle class="co x" cx="1051.0" cy="473.3" r="3.3"/><circle class="co" cx="1255.7" cy="473.1" r="3.3"/><circle class="cr" cx="1098.9" cy="509.8" r="3.3"/><circle class="cr" cx="1085.7" cy="525.8" r="3.3"/><circle class="cr x" cx="1289.9" cy="418.1" r="3.3"/><circle class="cr x" cx="1296.1" cy="428.5" r="3.3"/><circle class="cr x" cx="1298.2" cy="431.3" r="3.3"/><circle class="cr" cx="1291.9" cy="437.5" r="3.3"/><circle class="cr x" cx="1302.7" cy="432.2" r="3.3"/><circle class="cr" cx="1323.0" cy="457.2" r="3.3"/><circle class="ca" cx="1336.6" cy="446.7" r="3.3"/><circle class="co" cx="1342.2" cy="446.7" r="3.3"/><circle class="cr" cx="1369.6" cy="448.6" r="3.3"/><circle class="co" cx="1356.6" cy="452.6" r="3.3"/><circle class="co" cx="1289.2" cy="450.6" r="3.3"/><circle class="cp" cx="1290.5" cy="463.2" r="3.3"/><circle class="cb" cx="1473.0" cy="511.1" r="3.3"/><circle class="ca" cx="1461.1" cy="512.2" r="3.3"/><circle class="ck" cx="1459.5" cy="506.5" r="3.3"/><circle class="cr" cx="1133.9" cy="606.9" r="3.3"/><circle class="co x" cx="1244.2" cy="641.4" r="3.3"/><circle class="co x" cx="1235.4" cy="642.0" r="3.3"/><circle class="co x" cx="1234.1" cy="649.0" r="3.3"/><circle class="cr x" cx="1236.6" cy="653.7" r="3.3"/><circle class="co x" cx="1234.1" cy="648.5" r="3.3"/><circle class="co x" cx="1227.9" cy="650.5" r="3.3"/><circle class="ca" cx="1224.6" cy="656.6" r="3.3"/><circle class="co x" cx="1214.4" cy="663.2" r="3.3"/><circle class="co x" cx="1208.3" cy="670.8" r="3.3"/><circle class="co" cx="1204.8" cy="673.1" r="3.3"/><circle class="cr" cx="1447.2" cy="578.6" r="3.3"/><circle class="cr" cx="1441.2" cy="582.8" r="3.3"/><circle class="cr x" cx="1473.6" cy="597.7" r="3.3"/><circle class="cp" cx="1361.2" cy="658.6" r="3.3"/><circle class="ca" cx="1215.0" cy="676.5" r="3.3"/><circle class="cp" cx="1325.5" cy="722.8" r="3.3"/><circle class="co" cx="1328.2" cy="735.7" r="3.3"/><circle class="ca" cx="1374.6" cy="718.7" r="3.3"/><circle class="co" cx="1361.7" cy="796.7" r="3.3"/><circle class="cp" cx="1364.3" cy="803.4" r="3.3"/><circle class="co x" cx="1360.6" cy="804.8" r="3.3"/><circle class="cl" cx="1366.5" cy="810.7" r="3.3"/><circle class="cr x" cx="1363.8" cy="811.2" r="3.3"/><circle class="cr x" cx="1243.3" cy="393.1" r="3.3"/><circle class="cg x" cx="1235.6" cy="398.2" r="3.3"/><circle class="cg x" cx="1235.4" cy="407.0" r="3.3"/><circle class="cg x" cx="1252.8" cy="411.0" r="3.3"/><circle class="cg x" cx="1245.8" cy="410.9" r="3.3"/><circle class="cg x" cx="1253.6" cy="416.1" r="3.3"/><circle class="cg x" cx="1235.1" cy="412.1" r="3.3"/><circle class="cg x" cx="1230.7" cy="424.3" r="3.3"/><circle class="cr x" cx="1233.9" cy="424.4" r="3.3"/><circle class="cg x" cx="1257.5" cy="427.6" r="3.3"/><circle class="cg x" cx="1254.1" cy="420.8" r="3.3"/><circle class="cg x" cx="1266.8" cy="401.5" r="3.3"/><circle class="cr x" cx="1243.1" cy="418.1" r="3.3"/><circle class="co x" cx="1232.0" cy="414.5" r="3.3"/><circle class="co x" cx="1245.7" cy="403.7" r="3.3"/><circle class="cb x" cx="1236.5" cy="401.5" r="3.3"/><circle class="cb x" cx="1223.4" cy="395.3" r="3.3"/><circle class="co x" cx="1221.0" cy="396.3" r="3.3"/><circle class="cy x" cx="1211.6" cy="393.9" r="3.3"/><circle class="co x" cx="1222.4" cy="376.6" r="3.3"/><circle class="ca x" cx="1245.1" cy="384.1" r="3.3"/><circle class="co x" cx="1216.6" cy="665.4" r="3.3"/><circle class="co x" cx="1231.5" cy="648.8" r="3.3"/><circle class="co x" cx="1216.5" cy="666.6" r="3.3"/><circle class="co x" cx="1243.2" cy="640.7" r="3.3"/><circle class="co x" cx="1234.4" cy="649.9" r="3.3"/><circle class="co x" cx="1233.7" cy="648.9" r="3.3"/><circle class="co x" cx="1217.4" cy="664.7" r="3.3"/><circle class="cr x" cx="1238.5" cy="646.6" r="3.3"/><circle class="co x" cx="1238.0" cy="646.9" r="3.3"/><circle class="co x" cx="1220.0" cy="661.2" r="3.3"/><circle class="co x" cx="1235.9" cy="649.2" r="3.3"/><circle class="co x" cx="1243.4" cy="640.5" r="3.3"/><circle class="co x" cx="1215.8" cy="667.2" r="3.3"/><circle class="co x" cx="1218.3" cy="665.0" r="3.3"/><circle class="co x" cx="1219.9" cy="662.9" r="3.3"/><circle class="co x" cx="1234.7" cy="650.4" r="3.3"/><circle class="co x" cx="1212.7" cy="669.8" r="3.3"/><circle class="co x" cx="1219.2" cy="663.2" r="3.3"/><circle class="co x" cx="988.7" cy="519.1" r="3.3"/><circle class="co" cx="997.2" cy="516.2" r="3.3"/><circle class="co" cx="995.7" cy="518.8" r="3.3"/><circle class="co x" cx="982.1" cy="522.0" r="3.3"/><circle class="co" cx="970.7" cy="530.0" r="3.3"/><circle class="co" cx="1011.8" cy="508.3" r="3.3"/><circle class="co x" cx="983.3" cy="526.1" r="3.3"/><circle class="co x" cx="985.0" cy="521.1" r="3.3"/><circle class="co" cx="1006.0" cy="512.5" r="3.3"/><circle class="co x" cx="988.9" cy="522.2" r="3.3"/><circle class="cg x" cx="1237.9" cy="400.2" r="3.3"/><circle class="cg x" cx="1246.7" cy="399.6" r="3.3"/><circle class="cg x" cx="1258.0" cy="406.5" r="3.3"/><circle class="cg x" cx="1251.7" cy="410.9" r="3.3"/><circle class="cg x" cx="1234.1" cy="410.3" r="3.3"/><circle class="cg x" cx="1249.2" cy="420.4" r="3.3"/><circle class="cg x" cx="1234.1" cy="433.0" r="3.3"/><circle class="cg" cx="1191.3" cy="407.8" r="3.3"/><circle class="cg x" cx="1243.5" cy="408.4" r="3.3"/><circle class="cg x" cx="1253.0" cy="415.4" r="3.3"/><circle class="cg x" cx="1245.4" cy="424.8" r="3.3"/><circle class="cr x" cx="1216.5" cy="378.8" r="3.3"/><circle class="cr x" cx="1231.6" cy="385.1" r="3.3"/><circle class="cr x" cx="1229.1" cy="379.4" r="3.3"/><circle class="cr x" cx="1237.2" cy="381.3" r="3.3"/><circle class="cr x" cx="1249.2" cy="385.1" r="3.3"/><circle class="cr x" cx="1264.3" cy="376.3" r="3.3"/><circle class="cr" cx="1270.6" cy="375.0" r="3.3"/><circle class="cr x" cx="1266.9" cy="387.6" r="3.3"/><circle class="cr x" cx="1271.9" cy="391.4" r="3.3"/><circle class="cr x" cx="1281.3" cy="399.6" r="3.3"/><circle class="cr x" cx="1278.2" cy="402.8" r="3.3"/><circle class="cr x" cx="1286.4" cy="398.3" r="3.3"/><circle class="cr x" cx="1304.6" cy="395.2" r="3.3"/><circle class="cr x" cx="1303.4" cy="400.2" r="3.3"/><circle class="cr x" cx="1290.8" cy="412.8" r="3.3"/><circle class="cr" cx="1294.6" cy="417.2" r="3.3"/><circle class="cr x" cx="1290.8" cy="421.7" r="3.3"/><circle class="cr x" cx="1289.5" cy="428.0" r="3.3"/><circle class="cr x" cx="1298.3" cy="426.7" r="3.3"/><circle class="cr x" cx="1284.5" cy="429.8" r="3.3"/><circle class="cr x" cx="1227.8" cy="407.8" r="3.3"/><circle class="cr x" cx="1225.3" cy="410.3" r="3.3"/><circle class="cr x" cx="1240.4" cy="407.8" r="3.3"/><circle class="cr" cx="1253.0" cy="431.7" r="3.3"/><circle class="cr x" cx="1259.3" cy="428.0" r="3.3"/><circle class="cr x" cx="1246.7" cy="425.4" r="3.3"/><circle class="cr" cx="1208.9" cy="425.4" r="3.3"/><circle class="cr x" cx="1193.1" cy="425.4" r="3.3"/><circle class="cr x" cx="1196.3" cy="428.0" r="3.3"/><circle class="cr x" cx="1253.0" cy="417.2" r="3.3"/><circle class="co x" cx="1215.2" cy="382.6" r="3.3"/><circle class="co x" cx="1217.7" cy="391.4" r="3.3"/><circle class="co x" cx="1253.0" cy="406.5" r="3.3"/><circle class="co x" cx="1261.2" cy="400.2" r="3.3"/><circle class="co x" cx="1271.9" cy="395.2" r="3.3"/><circle class="co x" cx="1273.1" cy="405.3" r="3.3"/><circle class="co x" cx="1290.8" cy="406.5" r="3.3"/><circle class="co x" cx="1287.6" cy="407.8" r="3.3"/><circle class="co x" cx="1293.9" cy="406.5" r="3.3"/><circle class="co x" cx="1223.4" cy="422.9" r="3.3"/><circle class="co x" cx="1240.4" cy="426.7" r="3.3"/><circle class="co" cx="1284.5" cy="433.0" r="3.3"/><circle class="co x" cx="1295.8" cy="429.2" r="3.3"/><circle class="co x" cx="1309.7" cy="373.8" r="3.3"/><circle class="co" cx="1303.4" cy="393.9" r="3.3"/><circle class="co x" cx="1252.4" cy="416.6" r="3.3"/><circle class="cb" cx="1206.4" cy="376.3" r="3.3"/><circle class="cb x" cx="1230.3" cy="397.7" r="3.3"/><circle class="cb x" cx="1226.5" cy="400.2" r="3.3"/><circle class="cb" cx="1255.5" cy="371.3" r="3.3"/><circle class="cb x" cx="1275.0" cy="409.1" r="3.3"/><circle class="cb x" cx="1250.5" cy="425.4" r="3.3"/><circle class="cp x" cx="1279.4" cy="402.8" r="3.3"/><circle class="cl x" cx="1203.9" cy="397.7" r="3.3"/><circle class="cl x" cx="1237.2" cy="420.4" r="3.3"/><circle class="cl" cx="1275.0" cy="415.4" r="3.3"/><circle class="cl x" cx="1259.3" cy="400.2" r="3.3"/><circle class="ck x" cx="1195.0" cy="396.5" r="3.3"/><circle class="ck x" cx="1235.4" cy="378.8" r="3.3"/><circle class="cr" cx="1283.8" cy="302.5" r="3.3"/><circle class="ck" cx="1275.0" cy="307.5" r="3.3"/><circle class="cp" cx="1285.0" cy="306.2" r="3.3"/><circle class="cr" cx="1281.2" cy="316.2" r="3.3"/><circle class="cb" cx="1273.8" cy="318.8" r="3.3"/><circle class="ck" cx="1270.0" cy="321.2" r="3.3"/><circle class="co" cx="1287.5" cy="321.2" r="3.3"/><circle class="cb" cx="1277.5" cy="323.8" r="3.3"/><circle class="cr" cx="1265.0" cy="330.0" r="3.3"/><circle class="cb" cx="1272.5" cy="330.0" r="3.3"/><circle class="cb" cx="1276.2" cy="331.2" r="3.3"/><circle class="cp" cx="1233.8" cy="343.8" r="3.3"/><circle class="cr" cx="1283.8" cy="345.0" r="3.3"/><circle class="cb" cx="1272.5" cy="350.0" r="3.3"/><circle class="cg" cx="1231.2" cy="350.0" r="3.3"/><circle class="cg" cx="1241.2" cy="352.5" r="3.3"/><circle class="co" cx="1226.2" cy="353.8" r="3.3"/><circle class="cb" cx="1232.5" cy="353.8" r="3.3"/><circle class="cr" cx="1282.5" cy="355.0" r="3.3"/><circle class="cg" cx="1206.2" cy="353.8" r="3.3"/><circle class="cp" cx="1197.5" cy="357.5" r="3.3"/><circle class="ck" cx="1210.0" cy="357.5" r="3.3"/><circle class="ck" cx="1211.2" cy="361.2" r="3.3"/><circle class="cr" cx="1277.5" cy="358.8" r="3.3"/><circle class="cp" cx="1257.5" cy="355.0" r="3.3"/><circle class="cp" cx="1263.8" cy="356.2" r="3.3"/><circle class="cl" cx="1270.0" cy="356.2" r="3.3"/><circle class="ck" cx="1251.2" cy="357.5" r="3.3"/><circle class="co" cx="1252.5" cy="358.8" r="3.3"/><circle class="cp" cx="1246.2" cy="360.0" r="3.3"/><circle class="cp" cx="1237.5" cy="358.8" r="3.3"/><circle class="ck" cx="1227.5" cy="360.0" r="3.3"/><circle class="cr" cx="1221.2" cy="362.5" r="3.3"/><circle class="co x" cx="1216.2" cy="362.5" r="3.3"/><circle class="cb" cx="1212.5" cy="365.0" r="3.3"/><circle class="cr" cx="1195.0" cy="363.8" r="3.3"/><circle class="co" cx="1190.0" cy="370.0" r="3.3"/><circle class="cg" cx="1191.2" cy="373.8" r="3.3"/><circle class="cb" cx="1198.8" cy="375.0" r="3.3"/><circle class="cb x" cx="1203.8" cy="376.2" r="3.3"/><circle class="cb x" cx="1208.8" cy="377.5" r="3.3"/><circle class="cr" cx="1212.5" cy="370.0" r="3.3"/><circle class="cr" cx="1220.0" cy="370.0" r="3.3"/><circle class="ck" cx="1226.2" cy="367.5" r="3.3"/><circle class="cr" cx="1233.8" cy="366.2" r="3.3"/><circle class="ca" cx="1240.0" cy="365.0" r="3.3"/><circle class="cy" cx="1243.8" cy="366.2" r="3.3"/><circle class="cr" cx="1247.5" cy="370.0" r="3.3"/><circle class="cb" cx="1255.0" cy="368.8" r="3.3"/><circle class="cp" cx="1262.5" cy="363.8" r="3.3"/><circle class="cr x" cx="1266.2" cy="360.0" r="3.3"/><circle class="co" cx="1266.2" cy="368.8" r="3.3"/><circle class="cb" cx="1271.2" cy="367.5" r="3.3"/><circle class="cb x" cx="1273.8" cy="371.2" r="3.3"/><circle class="cr" cx="1285.0" cy="370.0" r="3.3"/><circle class="cl" cx="1287.5" cy="361.2" r="3.3"/><circle class="cl" cx="1285.0" cy="376.2" r="3.3"/><circle class="cp x" cx="1230.0" cy="372.5" r="3.3"/><circle class="cb x" cx="1233.8" cy="375.0" r="3.3"/><circle class="ck x" cx="1223.8" cy="372.5" r="3.3"/><circle class="cr x" cx="1216.2" cy="377.5" r="3.3"/><circle class="co x" cx="1223.8" cy="378.8" r="3.3"/><circle class="cr x" cx="1228.8" cy="380.0" r="3.3"/><circle class="ck x" cx="1235.0" cy="378.8" r="3.3"/><circle class="cr x" cx="1240.0" cy="377.5" r="3.3"/><circle class="ca x" cx="1242.5" cy="382.5" r="3.3"/><circle class="ck" cx="1248.8" cy="376.2" r="3.3"/><circle class="cr" cx="1253.8" cy="373.8" r="3.3"/><circle class="cr x" cx="1262.5" cy="373.8" r="3.3"/><circle class="cr" cx="1270.0" cy="375.0" r="3.3"/><circle class="cl x" cx="1265.0" cy="378.8" r="3.3"/><circle class="cl" cx="1258.8" cy="377.5" r="3.3"/><circle class="co" cx="1257.5" cy="385.0" r="3.3"/><circle class="cr" cx="1266.2" cy="385.0" r="3.3"/><circle class="cr" cx="1283.8" cy="387.5" r="3.3"/><circle class="cl" cx="1288.8" cy="383.8" r="3.3"/><circle class="cb x" cx="1243.8" cy="387.5" r="3.3"/><circle class="cr x" cx="1250.0" cy="385.0" r="3.3"/><circle class="cb" cx="1252.5" cy="390.0" r="3.3"/><circle class="co x" cx="1258.8" cy="393.8" r="3.3"/><circle class="cg" cx="1265.0" cy="391.2" r="3.3"/><circle class="cr x" cx="1271.2" cy="392.5" r="3.3"/><circle class="co x" cx="1271.2" cy="393.8" r="3.3"/><circle class="cg x" cx="1266.2" cy="398.8" r="3.3"/><circle class="cg x" cx="1263.8" cy="403.8" r="3.3"/><circle class="co x" cx="1272.5" cy="405.0" r="3.3"/><circle class="cb x" cx="1280.0" cy="396.2" r="3.3"/><circle class="cr x" cx="1282.5" cy="401.2" r="3.3"/><circle class="cp x" cx="1280.0" cy="402.5" r="3.3"/><circle class="ca x" cx="1286.2" cy="407.5" r="3.3"/><circle class="co" cx="1278.8" cy="408.8" r="3.3"/><circle class="cr x" cx="1268.8" cy="407.5" r="3.3"/><circle class="cl x" cx="1258.8" cy="400.0" r="3.3"/><circle class="cr" cx="1253.8" cy="396.2" r="3.3"/><circle class="ck x" cx="1245.0" cy="405.0" r="3.3"/><circle class="cb x" cx="1242.5" cy="401.2" r="3.3"/><circle class="cg x" cx="1245.0" cy="396.2" r="3.3"/><circle class="cg x" cx="1241.2" cy="393.8" r="3.3"/><circle class="co" cx="1235.0" cy="391.2" r="3.3"/><circle class="cb x" cx="1232.5" cy="397.5" r="3.3"/><circle class="cg" cx="1232.5" cy="405.0" r="3.3"/><circle class="cr x" cx="1240.0" cy="407.5" r="3.3"/><circle class="cb x" cx="1226.2" cy="400.0" r="3.3"/><circle class="cb x" cx="1225.0" cy="393.8" r="3.3"/><circle class="cg" cx="1220.0" cy="388.8" r="3.3"/><circle class="co" cx="1217.5" cy="385.0" r="3.3"/><circle class="cy x" cx="1212.5" cy="391.2" r="3.3"/><circle class="co x" cx="1217.5" cy="396.2" r="3.3"/><circle class="cr" cx="1210.0" cy="400.0" r="3.3"/><circle class="cp" cx="1205.0" cy="390.0" r="3.3"/><circle class="ck x" cx="1205.0" cy="392.5" r="3.3"/><circle class="cg x" cx="1198.8" cy="392.5" r="3.3"/><circle class="cr" cx="1196.2" cy="387.5" r="3.3"/><circle class="ck" cx="1196.2" cy="381.2" r="3.3"/><circle class="cr" cx="1202.5" cy="381.2" r="3.3"/><circle class="cl x" cx="1203.8" cy="397.5" r="3.3"/><circle class="ck" cx="1196.2" cy="397.5" r="3.3"/><circle class="cr" cx="1188.8" cy="400.0" r="3.3"/><circle class="co" cx="1195.0" cy="403.8" r="3.3"/><circle class="cb" cx="1181.2" cy="403.8" r="3.3"/><circle class="cr" cx="1191.2" cy="408.8" r="3.3"/><circle class="cr" cx="1187.5" cy="410.0" r="3.3"/><circle class="cp" cx="1180.0" cy="411.2" r="3.3"/><circle class="cr" cx="1200.0" cy="408.8" r="3.3"/><circle class="cl" cx="1205.0" cy="412.5" r="3.3"/><circle class="ck" cx="1167.5" cy="411.2" r="3.3"/><circle class="cp" cx="1220.0" cy="405.0" r="3.3"/><circle class="cb" cx="1216.2" cy="406.2" r="3.3"/><circle class="cr x" cx="1225.0" cy="408.8" r="3.3"/><circle class="cr x" cx="1230.0" cy="385.0" r="3.3"/><circle class="cr x" cx="1236.2" cy="385.0" r="3.3"/><circle class="cr" cx="1112.5" cy="351.2" r="3.3"/><circle class="cb" cx="1122.5" cy="351.2" r="3.3"/><circle class="cr" cx="1128.8" cy="355.0" r="3.3"/><circle class="cb x" cx="1111.2" cy="356.2" r="3.3"/><circle class="cr" cx="1102.5" cy="361.2" r="3.3"/><circle class="cb" cx="1118.8" cy="360.0" r="3.3"/><circle class="co" cx="1112.5" cy="362.5" r="3.3"/><circle class="cl" cx="1125.0" cy="363.8" r="3.3"/><circle class="cb" cx="1096.2" cy="365.0" r="3.3"/><circle class="co" cx="1105.0" cy="366.2" r="3.3"/><circle class="co" cx="1117.5" cy="366.2" r="3.3"/><circle class="cb" cx="1131.2" cy="366.2" r="3.3"/><circle class="cg" cx="1136.2" cy="362.5" r="3.3"/><circle class="cl" cx="1136.2" cy="366.2" r="3.3"/><circle class="cg" cx="1131.2" cy="370.0" r="3.3"/><circle class="cp" cx="1123.8" cy="370.0" r="3.3"/><circle class="cp" cx="1117.5" cy="371.2" r="3.3"/><circle class="co" cx="1128.8" cy="373.8" r="3.3"/><circle class="co" cx="1098.8" cy="372.5" r="3.3"/><circle class="cb" cx="1106.2" cy="371.2" r="3.3"/><circle class="cr" cx="1106.2" cy="375.0" r="3.3"/><circle class="cb x" cx="1095.0" cy="377.5" r="3.3"/><circle class="cb x" cx="1100.0" cy="378.8" r="3.3"/><circle class="co" cx="1087.5" cy="380.0" r="3.3"/><circle class="co" cx="1093.8" cy="381.2" r="3.3"/><circle class="cp" cx="1092.5" cy="385.0" r="3.3"/><circle class="cb" cx="1105.0" cy="381.2" r="3.3"/><circle class="cl" cx="1112.5" cy="376.2" r="3.3"/><circle class="cb x" cx="1115.0" cy="377.5" r="3.3"/><circle class="ck" cx="1117.5" cy="380.0" r="3.3"/><circle class="co" cx="1120.0" cy="376.2" r="3.3"/><circle class="cr" cx="1125.0" cy="381.2" r="3.3"/><circle class="cr" cx="1130.0" cy="385.0" r="3.3"/><circle class="co" cx="1126.2" cy="387.5" r="3.3"/><circle class="cb" cx="1112.5" cy="386.2" r="3.3"/><circle class="cl" cx="1107.5" cy="383.8" r="3.3"/><circle class="cp" cx="1138.8" cy="378.8" r="3.3"/><circle class="cl" cx="1135.0" cy="377.5" r="3.3"/><circle class="cb" cx="1143.8" cy="382.5" r="3.3"/><circle class="cl" cx="1140.0" cy="386.2" r="3.3"/><circle class="cr" cx="1095.0" cy="390.0" r="3.3"/><circle class="cp" cx="1101.2" cy="391.2" r="3.3"/><circle class="cl" cx="1108.8" cy="391.2" r="3.3"/><circle class="cg" cx="1091.2" cy="395.0" r="3.3"/><circle class="cr" cx="1096.2" cy="396.2" r="3.3"/><circle class="cl" cx="1098.8" cy="398.8" r="3.3"/><circle class="cr" cx="1113.8" cy="396.2" r="3.3"/><circle class="cr" cx="1125.0" cy="392.5" r="3.3"/><circle class="cr" cx="1133.8" cy="393.8" r="3.3"/><circle class="cp" cx="1062.5" cy="392.5" r="3.3"/><circle class="co" cx="1073.8" cy="393.8" r="3.3"/><circle class="cr" cx="1091.2" cy="406.2" r="3.3"/><circle class="cr" cx="1096.2" cy="407.5" r="3.3"/><circle class="cr" cx="1103.8" cy="403.8" r="3.3"/><circle class="cr" cx="1103.8" cy="408.8" r="3.3"/><circle class="cr" cx="1111.2" cy="405.0" r="3.3"/><circle class="cr" cx="1116.2" cy="402.5" r="3.3"/><circle class="cp" cx="1116.2" cy="406.2" r="3.3"/><circle class="cr" cx="1111.2" cy="411.2" r="3.3"/><circle class="cp" cx="1123.8" cy="405.0" r="3.3"/><circle class="cb" cx="1130.0" cy="402.5" r="3.3"/><circle class="cl" cx="1136.2" cy="402.5" r="3.3"/><circle class="cl" cx="1142.5" cy="398.8" r="3.3"/><circle class="cl" cx="1142.5" cy="403.8" r="3.3"/><circle class="cb" cx="1141.2" cy="406.2" r="3.3"/><circle class="cg" cx="1070.0" cy="407.5" r="3.3"/><circle class="co" cx="1066.2" cy="411.2" r="3.3"/><circle class="cr" cx="1057.5" cy="412.5" r="3.3"/><circle class="cl" cx="1152.5" cy="353.8" r="3.3"/><circle class="cr" cx="1148.8" cy="360.0" r="3.3"/><circle class="cr" cx="1157.5" cy="358.8" r="3.3"/><circle class="cr" cx="1160.0" cy="360.0" r="3.3"/><circle class="cr" cx="1168.8" cy="358.8" r="3.3"/><circle class="cg" cx="1178.8" cy="362.5" r="3.3"/><circle class="co" cx="1145.0" cy="368.8" r="3.3"/><circle class="cr" cx="1152.5" cy="366.2" r="3.3"/><circle class="cb" cx="1158.8" cy="367.5" r="3.3"/><circle class="cr" cx="1168.8" cy="367.5" r="3.3"/><circle class="cr" cx="1175.0" cy="366.2" r="3.3"/><circle class="cr" cx="1153.8" cy="371.2" r="3.3"/><circle class="cg" cx="1162.5" cy="373.8" r="3.3"/><circle class="ck" cx="1155.0" cy="376.2" r="3.3"/><circle class="cb" cx="1167.5" cy="377.5" r="3.3"/><circle class="cr" cx="1175.0" cy="375.0" r="3.3"/><circle class="cp" cx="1181.2" cy="376.2" r="3.3"/><circle class="cb" cx="1182.5" cy="380.0" r="3.3"/><circle class="co" cx="1151.2" cy="385.0" r="3.3"/><circle class="cb" cx="1157.5" cy="385.0" r="3.3"/><circle class="cb" cx="1160.0" cy="383.8" r="3.3"/><circle class="cb" cx="1163.8" cy="383.8" r="3.3"/><circle class="cr" cx="1171.2" cy="385.0" r="3.3"/><circle class="cb" cx="1176.2" cy="387.5" r="3.3"/><circle class="cg" cx="1186.2" cy="385.0" r="3.3"/><circle class="cr" cx="1181.2" cy="391.2" r="3.3"/><circle class="co" cx="1170.0" cy="391.2" r="3.3"/><circle class="cb" cx="1175.0" cy="393.8" r="3.3"/><circle class="cb" cx="1153.8" cy="392.5" r="3.3"/><circle class="cr" cx="1160.0" cy="395.0" r="3.3"/><circle class="cr" cx="1152.5" cy="398.8" r="3.3"/><circle class="cp" cx="1152.5" cy="405.0" r="3.3"/><circle class="cg" cx="1151.2" cy="411.2" r="3.3"/><circle class="cr" cx="1145.0" cy="411.2" r="3.3"/><circle class="co" cx="1297.5" cy="296.2" r="3.3"/><circle class="cr" cx="1307.5" cy="300.0" r="3.3"/><circle class="co" cx="1297.5" cy="305.0" r="3.3"/><circle class="cb" cx="1308.8" cy="306.2" r="3.3"/><circle class="cr" cx="1316.2" cy="307.5" r="3.3"/><circle class="cr" cx="1292.5" cy="311.2" r="3.3"/><circle class="co" cx="1307.5" cy="312.5" r="3.3"/><circle class="cr" cx="1307.5" cy="316.2" r="3.3"/><circle class="cr" cx="1328.8" cy="316.2" r="3.3"/><circle class="cr" cx="1335.0" cy="318.8" r="3.3"/><circle class="cr" cx="1317.5" cy="318.8" r="3.3"/><circle class="cw" cx="1291.2" cy="321.2" r="3.3"/><circle class="co" cx="1300.0" cy="321.2" r="3.3"/><circle class="cr x" cx="1306.2" cy="322.5" r="3.3"/><circle class="co" cx="1310.0" cy="325.0" r="3.3"/><circle class="cg" cx="1316.2" cy="323.8" r="3.3"/><circle class="co" cx="1321.2" cy="323.8" r="3.3"/><circle class="cp" cx="1325.0" cy="323.8" r="3.3"/><circle class="co" cx="1293.8" cy="328.8" r="3.3"/><circle class="cb x" cx="1300.0" cy="326.2" r="3.3"/><circle class="cr x" cx="1302.5" cy="330.0" r="3.3"/><circle class="cr" cx="1306.2" cy="333.8" r="3.3"/><circle class="cb" cx="1315.0" cy="331.2" r="3.3"/><circle class="cr" cx="1322.5" cy="328.8" r="3.3"/><circle class="co" cx="1297.5" cy="336.2" r="3.3"/><circle class="cp" cx="1296.2" cy="338.8" r="3.3"/><circle class="cr" cx="1305.0" cy="341.2" r="3.3"/><circle class="cr" cx="1312.5" cy="338.8" r="3.3"/><circle class="cl" cx="1302.5" cy="345.0" r="3.3"/><circle class="cr" cx="1331.2" cy="336.2" r="3.3"/><circle class="cb" cx="1333.8" cy="340.0" r="3.3"/><circle class="cr" cx="1341.2" cy="331.2" r="3.3"/><circle class="co" cx="1343.8" cy="328.8" r="3.3"/><circle class="cr" cx="1346.2" cy="335.0" r="3.3"/><circle class="cy" cx="1353.8" cy="335.0" r="3.3"/><circle class="cp" cx="1358.8" cy="335.0" r="3.3"/><circle class="cb" cx="1360.0" cy="338.8" r="3.3"/><circle class="cb" cx="1365.0" cy="330.0" r="3.3"/><circle class="cr" cx="1371.2" cy="327.5" r="3.3"/><circle class="co" cx="1353.8" cy="341.2" r="3.3"/><circle class="co" cx="1348.8" cy="345.0" r="3.3"/><circle class="co" cx="1352.5" cy="347.5" r="3.3"/><circle class="cb" cx="1345.0" cy="346.2" r="3.3"/><circle class="cl" cx="1338.8" cy="345.0" r="3.3"/><circle class="co" cx="1378.8" cy="328.8" r="3.3"/><circle class="cr" cx="1383.8" cy="328.8" r="3.3"/><circle class="cr" cx="1388.8" cy="331.2" r="3.3"/><circle class="co" cx="1393.8" cy="330.0" r="3.3"/><circle class="cw" cx="1400.0" cy="331.2" r="3.3"/><circle class="cp" cx="1393.8" cy="336.2" r="3.3"/><circle class="co" cx="1401.2" cy="336.2" r="3.3"/><circle class="cr" cx="1411.2" cy="340.0" r="3.3"/><circle class="cr" cx="1403.8" cy="343.8" r="3.3"/><circle class="cr" cx="1370.0" cy="338.8" r="3.3"/><circle class="cr" cx="1376.2" cy="336.2" r="3.3"/><circle class="cr" cx="1386.2" cy="338.8" r="3.3"/><circle class="co" cx="1368.8" cy="342.5" r="3.3"/><circle class="cr" cx="1378.8" cy="343.8" r="3.3"/><circle class="cb" cx="1386.2" cy="343.8" r="3.3"/><circle class="co" cx="1382.5" cy="347.5" r="3.3"/><circle class="cr" cx="1375.0" cy="348.8" r="3.3"/><circle class="cb" cx="1368.8" cy="347.5" r="3.3"/><circle class="cl" cx="1362.5" cy="348.8" r="3.3"/><circle class="ck" cx="1361.2" cy="350.0" r="3.3"/><circle class="cb" cx="1317.5" cy="346.2" r="3.3"/><circle class="cb" cx="1320.0" cy="343.8" r="3.3"/><circle class="cr" cx="1310.0" cy="350.0" r="3.3"/><circle class="cr" cx="1326.2" cy="346.2" r="3.3"/><circle class="cr" cx="1330.0" cy="350.0" r="3.3"/><circle class="cr" cx="1328.8" cy="355.0" r="3.3"/><circle class="cr" cx="1328.8" cy="360.0" r="3.3"/><circle class="cr" cx="1345.0" cy="352.5" r="3.3"/><circle class="co" cx="1365.0" cy="353.8" r="3.3"/><circle class="co" cx="1358.8" cy="357.5" r="3.3"/><circle class="ck" cx="1350.0" cy="358.8" r="3.3"/><circle class="cr" cx="1353.8" cy="357.5" r="3.3"/><circle class="co" cx="1337.5" cy="361.2" r="3.3"/><circle class="cr" cx="1341.2" cy="363.8" r="3.3"/><circle class="cr" cx="1346.2" cy="365.0" r="3.3"/><circle class="cr" cx="1366.2" cy="361.2" r="3.3"/><circle class="co" cx="1388.8" cy="355.0" r="3.3"/><circle class="cl" cx="1380.0" cy="355.0" r="3.3"/><circle class="cb" cx="1377.5" cy="357.5" r="3.3"/><circle class="cr" cx="1375.0" cy="358.8" r="3.3"/><circle class="co" cx="1296.2" cy="353.8" r="3.3"/><circle class="cr" cx="1305.0" cy="356.2" r="3.3"/><circle class="cb" cx="1297.5" cy="360.0" r="3.3"/><circle class="cb" cx="1301.2" cy="362.5" r="3.3"/><circle class="co" cx="1291.2" cy="362.5" r="3.3"/><circle class="cl" cx="1293.8" cy="366.2" r="3.3"/><circle class="co" cx="1327.5" cy="363.8" r="3.3"/><circle class="cr" cx="1318.8" cy="366.2" r="3.3"/><circle class="cb" cx="1308.8" cy="367.5" r="3.3"/><circle class="ca" cx="1302.5" cy="370.0" r="3.3"/><circle class="cr" cx="1331.2" cy="370.0" r="3.3"/><circle class="cl" cx="1325.0" cy="372.5" r="3.3"/><circle class="cr" cx="1333.8" cy="373.8" r="3.3"/><circle class="co" cx="1307.5" cy="372.5" r="3.3"/><circle class="co" cx="1313.8" cy="371.2" r="3.3"/><circle class="co x" cx="1312.5" cy="375.0" r="3.3"/><circle class="co" cx="1318.8" cy="375.0" r="3.3"/><circle class="ca" cx="1315.0" cy="378.8" r="3.3"/><circle class="cr" cx="1295.0" cy="373.8" r="3.3"/><circle class="cb" cx="1295.0" cy="377.5" r="3.3"/><circle class="cb" cx="1310.0" cy="382.5" r="3.3"/><circle class="cr" cx="1325.0" cy="380.0" r="3.3"/><circle class="cr" cx="1345.0" cy="377.5" r="3.3"/><circle class="cr" cx="1351.2" cy="381.2" r="3.3"/><circle class="cb" cx="1357.5" cy="380.0" r="3.3"/><circle class="co" cx="1361.2" cy="376.2" r="3.3"/><circle class="ca" cx="1368.8" cy="380.0" r="3.3"/><circle class="cb" cx="1362.5" cy="385.0" r="3.3"/><circle class="cp" cx="1358.8" cy="383.8" r="3.3"/><circle class="cr" cx="1368.8" cy="370.0" r="3.3"/><circle class="cr" cx="1375.0" cy="367.5" r="3.3"/><circle class="co" cx="1375.0" cy="371.2" r="3.3"/><circle class="co" cx="1377.5" cy="383.8" r="3.3"/><circle class="cr" cx="1378.8" cy="388.8" r="3.3"/><circle class="cb" cx="1388.8" cy="376.2" r="3.3"/><circle class="co" cx="1396.2" cy="362.5" r="3.3"/><circle class="cr" cx="1402.5" cy="363.8" r="3.3"/><circle class="cr" cx="1393.8" cy="370.0" r="3.3"/><circle class="cp" cx="1398.8" cy="370.0" r="3.3"/><circle class="cp" cx="1405.0" cy="371.2" r="3.3"/><circle class="cr" cx="1397.5" cy="375.0" r="3.3"/><circle class="cr" cx="1408.8" cy="371.2" r="3.3"/><circle class="cr" cx="1413.8" cy="373.8" r="3.3"/><circle class="cr" cx="1422.5" cy="375.0" r="3.3"/><circle class="co" cx="1410.0" cy="377.5" r="3.3"/><circle class="ck" cx="1415.0" cy="381.2" r="3.3"/><circle class="cr" cx="1402.5" cy="381.2" r="3.3"/><circle class="cr" cx="1406.2" cy="385.0" r="3.3"/><circle class="cr" cx="1421.2" cy="383.8" r="3.3"/><circle class="co" cx="1417.5" cy="358.8" r="3.3"/><circle class="cb" cx="1423.8" cy="362.5" r="3.3"/><circle class="co" cx="1425.0" cy="367.5" r="3.3"/><circle class="cg" cx="1438.8" cy="356.2" r="3.3"/><circle class="cp" cx="1448.8" cy="371.2" r="3.3"/><circle class="cr" cx="1450.0" cy="375.0" r="3.3"/><circle class="co" cx="1441.2" cy="376.2" r="3.3"/><circle class="cp" cx="1447.5" cy="378.8" r="3.3"/><circle class="cp" cx="1431.2" cy="380.0" r="3.3"/><circle class="cr" cx="1430.0" cy="382.5" r="3.3"/><circle class="cp" cx="1337.5" cy="383.8" r="3.3"/><circle class="cr" cx="1336.2" cy="388.8" r="3.3"/><circle class="cr" cx="1335.0" cy="395.0" r="3.3"/><circle class="cr" cx="1341.2" cy="396.2" r="3.3"/><circle class="co" cx="1316.2" cy="386.2" r="3.3"/><circle class="co" cx="1322.5" cy="386.2" r="3.3"/><circle class="ca" cx="1328.8" cy="387.5" r="3.3"/><circle class="cb" cx="1321.2" cy="390.0" r="3.3"/><circle class="cr" cx="1326.2" cy="392.5" r="3.3"/><circle class="co" cx="1293.8" cy="387.5" r="3.3"/><circle class="cr" cx="1301.2" cy="390.0" r="3.3"/><circle class="co x" cx="1302.5" cy="395.0" r="3.3"/><circle class="cr" cx="1312.5" cy="393.8" r="3.3"/><circle class="cp" cx="1317.5" cy="396.2" r="3.3"/><circle class="cr" cx="1305.0" cy="400.0" r="3.3"/><circle class="cb x" cx="1292.5" cy="401.2" r="3.3"/><circle class="cr" cx="1355.0" cy="388.8" r="3.3"/><circle class="cp" cx="1360.0" cy="393.8" r="3.3"/><circle class="cr" cx="1365.0" cy="393.8" r="3.3"/><circle class="cr" cx="1362.5" cy="398.8" r="3.3"/><circle class="cr" cx="1376.2" cy="398.8" r="3.3"/><circle class="cr" cx="1382.5" cy="402.5" r="3.3"/><circle class="cr" cx="1387.5" cy="403.8" r="3.3"/><circle class="cb" cx="1403.8" cy="397.5" r="3.3"/><circle class="cr" cx="1398.8" cy="401.2" r="3.3"/><circle class="cr" cx="1327.5" cy="402.5" r="3.3"/><circle class="cr" cx="1322.5" cy="405.0" r="3.3"/><circle class="cl" cx="1326.2" cy="408.8" r="3.3"/><circle class="cl" cx="1330.0" cy="411.2" r="3.3"/><circle class="co x" cx="1292.5" cy="406.2" r="3.3"/><circle class="co" cx="1298.8" cy="407.5" r="3.3"/><circle class="cg" cx="1306.2" cy="407.5" r="3.3"/><circle class="cb" cx="1312.5" cy="410.0" r="3.3"/><circle class="cr x" cx="1293.8" cy="411.2" r="3.3"/><circle class="ca" cx="1346.2" cy="410.0" r="3.3"/><circle class="cr" cx="1366.2" cy="410.0" r="3.3"/><circle class="cr" cx="1376.2" cy="411.2" r="3.3"/><circle class="cr" cx="1382.5" cy="411.2" r="3.3"/><circle class="co" cx="1458.8" cy="380.0" r="3.3"/><circle class="co" cx="1466.2" cy="380.0" r="3.3"/><circle class="co" cx="1458.8" cy="385.0" r="3.3"/><circle class="co" cx="1466.2" cy="382.5" r="3.3"/><circle class="cr" cx="1472.5" cy="385.0" r="3.3"/><circle class="cr" cx="1452.5" cy="382.5" r="3.3"/><circle class="cr" cx="1451.2" cy="387.5" r="3.3"/><circle class="cr" cx="1480.0" cy="387.5" r="3.3"/><circle class="co" cx="1483.8" cy="390.0" r="3.3"/><circle class="co" cx="1475.0" cy="388.8" r="3.3"/><circle class="co" cx="1467.5" cy="390.0" r="3.3"/><circle class="co" cx="1462.5" cy="392.5" r="3.3"/><circle class="co" cx="1457.5" cy="395.0" r="3.3"/><circle class="co" cx="1450.0" cy="398.8" r="3.3"/><circle class="cb" cx="1453.8" cy="400.0" r="3.3"/><circle class="co" cx="1457.5" cy="398.8" r="3.3"/><circle class="co" cx="1473.8" cy="396.2" r="3.3"/><circle class="cr" cx="1480.0" cy="395.0" r="3.3"/><circle class="cr" cx="1476.2" cy="401.2" r="3.3"/><circle class="cr" cx="1467.5" cy="406.2" r="3.3"/><circle class="cr" cx="1488.8" cy="406.2" r="3.3"/><circle class="cr" cx="1480.0" cy="410.0" r="3.3"/><circle class="cr" cx="1431.2" cy="390.0" r="3.3"/><circle class="cr" cx="1440.0" cy="390.0" r="3.3"/><circle class="cb" cx="1437.5" cy="395.0" r="3.3"/><circle class="cr" cx="1435.0" cy="397.5" r="3.3"/><circle class="cr" cx="1428.8" cy="398.8" r="3.3"/><circle class="co" cx="1421.2" cy="397.5" r="3.3"/><circle class="ca" cx="1418.8" cy="405.0" r="3.3"/><circle class="cp" cx="1415.0" cy="403.8" r="3.3"/><circle class="ca" cx="1411.2" cy="408.8" r="3.3"/><circle class="cp" cx="1426.2" cy="407.5" r="3.3"/><circle class="cr" cx="1431.2" cy="406.2" r="3.3"/><circle class="cr" cx="1440.0" cy="405.0" r="3.3"/><circle class="cr" cx="1446.2" cy="408.8" r="3.3"/><circle class="cb" cx="1451.2" cy="411.2" r="3.3"/><circle class="co" cx="1430.0" cy="411.2" r="3.3"/><circle class="cr" cx="1413.8" cy="412.5" r="3.3"/><circle class="cg" cx="1018.8" cy="397.5" r="3.3"/><circle class="cr" cx="1032.5" cy="411.2" r="3.3"/><circle class="ck" cx="1026.2" cy="418.8" r="3.3"/><circle class="cr" cx="1013.8" cy="426.2" r="3.3"/><circle class="cr" cx="1025.0" cy="427.5" r="3.3"/><circle class="ck" cx="1045.0" cy="427.5" r="3.3"/><circle class="cr" cx="1035.0" cy="438.8" r="3.3"/><circle class="cy" cx="1005.0" cy="442.5" r="3.3"/><circle class="cr" cx="1005.0" cy="452.5" r="3.3"/><circle class="ck" cx="1041.2" cy="450.0" r="3.3"/><circle class="cr" cx="1048.8" cy="456.2" r="3.3"/><circle class="cr" cx="987.5" cy="461.2" r="3.3"/><circle class="cr" cx="1017.5" cy="461.2" r="3.3"/><circle class="cp" cx="1003.8" cy="468.8" r="3.3"/><circle class="cg" cx="1040.0" cy="468.8" r="3.3"/><circle class="co x" cx="1048.8" cy="470.0" r="3.3"/><circle class="co x" cx="1048.8" cy="475.0" r="3.3"/><circle class="cg" cx="1041.2" cy="475.0" r="3.3"/><circle class="cy x" cx="1040.0" cy="477.5" r="3.3"/><circle class="cg" cx="973.8" cy="481.2" r="3.3"/><circle class="cw" cx="970.0" cy="485.0" r="3.3"/><circle class="ck" cx="1036.2" cy="481.2" r="3.3"/><circle class="cr" cx="1043.8" cy="481.2" r="3.3"/><circle class="cr" cx="1032.5" cy="483.8" r="3.3"/><circle class="cr" cx="1028.8" cy="486.2" r="3.3"/><circle class="cg" cx="1041.2" cy="483.8" r="3.3"/><circle class="cy" cx="1031.2" cy="490.0" r="3.3"/><circle class="cr" cx="1040.0" cy="491.2" r="3.3"/><circle class="co" cx="1045.0" cy="492.5" r="3.3"/><circle class="cr" cx="1046.2" cy="493.8" r="3.3"/><circle class="co" cx="952.5" cy="492.5" r="3.3"/><circle class="co" cx="958.8" cy="493.8" r="3.3"/><circle class="cr" cx="971.2" cy="495.0" r="3.3"/><circle class="cr" cx="987.5" cy="492.5" r="3.3"/><circle class="co" cx="991.2" cy="491.2" r="3.3"/><circle class="co" cx="997.5" cy="490.0" r="3.3"/><circle class="cr" cx="995.0" cy="496.2" r="3.3"/><circle class="cr" cx="986.2" cy="497.5" r="3.3"/><circle class="cb" cx="1021.2" cy="491.2" r="3.3"/><circle class="cg" cx="1011.2" cy="495.0" r="3.3"/><circle class="cg" cx="1016.2" cy="495.0" r="3.3"/><circle class="co" cx="1006.2" cy="497.5" r="3.3"/><circle class="cr" cx="1025.0" cy="497.5" r="3.3"/><circle class="cr" cx="1038.8" cy="498.8" r="3.3"/><circle class="cr" cx="943.8" cy="504.0" r="3.3"/><circle class="cr" cx="950.0" cy="505.2" r="3.3"/><circle class="ck" cx="932.5" cy="514.0" r="3.3"/><circle class="cr" cx="953.8" cy="520.2" r="3.3"/><circle class="ca" cx="945.0" cy="525.2" r="3.3"/><circle class="cr" cx="983.8" cy="501.5" r="3.3"/><circle class="ck" cx="992.5" cy="500.2" r="3.3"/><circle class="cb" cx="987.5" cy="504.0" r="3.3"/><circle class="co" cx="1002.5" cy="505.2" r="3.3"/><circle class="co" cx="997.5" cy="506.5" r="3.3"/><circle class="co" cx="1011.2" cy="504.0" r="3.3"/><circle class="co" cx="1017.5" cy="502.8" r="3.3"/><circle class="cr x" cx="1016.2" cy="506.5" r="3.3"/><circle class="co" cx="1023.8" cy="506.5" r="3.3"/><circle class="cr" cx="1038.8" cy="501.5" r="3.3"/><circle class="cr" cx="1025.0" cy="500.2" r="3.3"/><circle class="cg x" cx="993.8" cy="510.2" r="3.3"/><circle class="cb" cx="981.2" cy="512.8" r="3.3"/><circle class="cb x" cx="990.0" cy="514.0" r="3.3"/><circle class="ca x" cx="986.2" cy="512.8" r="3.3"/><circle class="co" cx="973.8" cy="519.0" r="3.3"/><circle class="co x" cx="980.0" cy="519.0" r="3.3"/><circle class="co x" cx="982.5" cy="521.5" r="3.3"/><circle class="cr" cx="970.0" cy="527.8" r="3.3"/><circle class="co" cx="973.8" cy="529.0" r="3.3"/><circle class="cb" cx="976.2" cy="524.0" r="3.3"/><circle class="co" cx="925.0" cy="532.8" r="3.3"/><circle class="co" cx="928.8" cy="535.2" r="3.3"/><circle class="co" cx="931.2" cy="530.2" r="3.3"/><circle class="co" cx="937.5" cy="529.0" r="3.3"/><circle class="cb" cx="933.8" cy="532.8" r="3.3"/><circle class="co" cx="906.2" cy="535.2" r="3.3"/><circle class="ck" cx="910.0" cy="534.0" r="3.3"/><circle class="co" cx="957.5" cy="536.5" r="3.3"/><circle class="cr" cx="963.8" cy="536.5" r="3.3"/><circle class="co" cx="960.0" cy="541.5" r="3.3"/><circle class="cr" cx="1040.0" cy="515.2" r="3.3"/><circle class="co" cx="1043.8" cy="520.2" r="3.3"/><circle class="cb" cx="1037.5" cy="521.5" r="3.3"/><circle class="cr" cx="1042.5" cy="524.0" r="3.3"/><circle class="ck" cx="1023.8" cy="520.2" r="3.3"/><circle class="ck" cx="1018.8" cy="522.8" r="3.3"/><circle class="co" cx="1021.2" cy="532.8" r="3.3"/><circle class="cr" cx="1027.5" cy="532.8" r="3.3"/><circle class="cb" cx="1025.0" cy="527.8" r="3.3"/><circle class="cr" cx="1006.2" cy="530.2" r="3.3"/><circle class="cr" cx="987.5" cy="539.0" r="3.3"/><circle class="cr" cx="1001.2" cy="537.8" r="3.3"/><circle class="cl" cx="996.2" cy="539.0" r="3.3"/><circle class="cr" cx="995.0" cy="544.0" r="3.3"/><circle class="cb" cx="1008.8" cy="545.2" r="3.3"/><circle class="cp" cx="1012.5" cy="539.0" r="3.3"/><circle class="cl" cx="1013.8" cy="540.2" r="3.3"/><circle class="cr" cx="1016.2" cy="546.5" r="3.3"/><circle class="cr" cx="1035.0" cy="537.8" r="3.3"/><circle class="cr" cx="1046.2" cy="537.8" r="3.3"/><circle class="cp" cx="1047.5" cy="532.8" r="3.3"/><circle class="cg" cx="950.0" cy="549.0" r="3.3"/><circle class="cg" cx="970.0" cy="552.8" r="3.3"/><circle class="co" cx="976.2" cy="546.5" r="3.3"/><circle class="cg" cx="976.2" cy="549.0" r="3.3"/><circle class="co" cx="940.0" cy="559.0" r="3.3"/><circle class="co" cx="965.0" cy="559.0" r="3.3"/><circle class="cp" cx="971.2" cy="562.8" r="3.3"/><circle class="cr" cx="973.8" cy="566.5" r="3.3"/><circle class="cr" cx="997.5" cy="552.8" r="3.3"/><circle class="cr" cx="1000.0" cy="555.2" r="3.3"/><circle class="co" cx="983.8" cy="557.8" r="3.3"/><circle class="co" cx="992.5" cy="556.5" r="3.3"/><circle class="cp" cx="1002.5" cy="559.0" r="3.3"/><circle class="cr" cx="1007.5" cy="566.5" r="3.3"/><circle class="cp" cx="960.0" cy="569.0" r="3.3"/><circle class="cr" cx="961.2" cy="570.2" r="3.3"/><circle class="ck" cx="938.8" cy="567.8" r="3.3"/><circle class="cr" cx="918.8" cy="572.8" r="3.3"/><circle class="cr" cx="925.0" cy="571.5" r="3.3"/><circle class="cl" cx="943.8" cy="579.0" r="3.3"/><circle class="ck" cx="918.8" cy="581.5" r="3.3"/><circle class="cr" cx="983.8" cy="572.8" r="3.3"/><circle class="cr" cx="988.8" cy="575.2" r="3.3"/><circle class="cr" cx="1023.8" cy="556.5" r="3.3"/><circle class="cp" cx="1035.0" cy="545.2" r="3.3"/><circle class="cr" cx="1032.5" cy="549.0" r="3.3"/><circle class="cr" cx="1038.8" cy="550.2" r="3.3"/><circle class="cp x" cx="1032.5" cy="554.0" r="3.3"/><circle class="ca x" cx="1035.0" cy="555.2" r="3.3"/><circle class="cr x" cx="1038.8" cy="554.0" r="3.3"/><circle class="cr" cx="1043.8" cy="557.8" r="3.3"/><circle class="cb x" cx="1037.5" cy="561.5" r="3.3"/><circle class="cb" cx="1032.5" cy="560.2" r="3.3"/><circle class="ck" cx="1037.5" cy="565.2" r="3.3"/><circle class="cr" cx="1032.5" cy="569.0" r="3.3"/><circle class="ca" cx="1025.0" cy="566.5" r="3.3"/><circle class="co" cx="1025.0" cy="571.5" r="3.3"/><circle class="cp" cx="1025.0" cy="579.0" r="3.3"/><circle class="co" cx="1021.2" cy="576.5" r="3.3"/><circle class="cr" cx="1045.0" cy="577.8" r="3.3"/><circle class="cr" cx="1050.0" cy="580.2" r="3.3"/><circle class="cr" cx="1013.8" cy="580.2" r="3.3"/><circle class="cr" cx="1008.8" cy="582.8" r="3.3"/><circle class="cr" cx="1002.5" cy="584.0" r="3.3"/><circle class="cr" cx="1016.2" cy="584.0" r="3.3"/><circle class="cr" cx="908.8" cy="585.2" r="3.3"/><circle class="cb" cx="910.0" cy="590.2" r="3.3"/><circle class="cr" cx="906.2" cy="590.2" r="3.3"/><circle class="cr" cx="926.2" cy="587.8" r="3.3"/><circle class="cr" cx="925.0" cy="592.8" r="3.3"/><circle class="cr" cx="931.2" cy="594.0" r="3.3"/><circle class="cr" cx="931.2" cy="600.2" r="3.3"/><circle class="cr" cx="917.5" cy="596.5" r="3.3"/><circle class="co" cx="916.2" cy="599.0" r="3.3"/><circle class="cr" cx="880.0" cy="601.5" r="3.3"/><circle class="co" cx="897.5" cy="610.2" r="3.3"/><circle class="co" cx="907.5" cy="610.2" r="3.3"/><circle class="cr" cx="915.0" cy="611.5" r="3.3"/><circle class="cr" cx="915.0" cy="619.0" r="3.3"/><circle class="cb" cx="923.8" cy="621.5" r="3.3"/><circle class="cr" cx="920.0" cy="621.5" r="3.3"/><circle class="co" cx="910.0" cy="622.8" r="3.3"/><circle class="cr" cx="911.2" cy="627.8" r="3.3"/><circle class="cr" cx="946.2" cy="607.8" r="3.3"/><circle class="co" cx="942.5" cy="617.8" r="3.3"/><circle class="cp" cx="967.5" cy="596.5" r="3.3"/><circle class="cr" cx="970.0" cy="600.2" r="3.3"/><circle class="cr" cx="963.8" cy="602.8" r="3.3"/><circle class="cr" cx="962.5" cy="616.5" r="3.3"/><circle class="cr" cx="957.5" cy="619.0" r="3.3"/><circle class="cr" cx="965.0" cy="621.5" r="3.3"/><circle class="cr" cx="973.8" cy="626.5" r="3.3"/><circle class="cr" cx="982.5" cy="600.2" r="3.3"/><circle class="cr" cx="991.2" cy="600.2" r="3.3"/><circle class="cr" cx="992.5" cy="607.8" r="3.3"/><circle class="co" cx="1003.8" cy="609.0" r="3.3"/><circle class="cr" cx="985.0" cy="591.5" r="3.3"/><circle class="cr" cx="988.8" cy="590.2" r="3.3"/><circle class="cr" cx="996.2" cy="590.2" r="3.3"/><circle class="cr" cx="1000.0" cy="592.8" r="3.3"/><circle class="cr" cx="997.5" cy="595.2" r="3.3"/><circle class="cr" cx="1001.2" cy="595.2" r="3.3"/><circle class="cr" cx="1018.8" cy="591.5" r="3.3"/><circle class="ca" cx="1023.8" cy="591.5" r="3.3"/><circle class="cr" cx="1028.8" cy="590.2" r="3.3"/><circle class="cp" cx="1021.2" cy="600.2" r="3.3"/><circle class="ca" cx="1017.5" cy="597.8" r="3.3"/><circle class="co" cx="1015.0" cy="610.2" r="3.3"/><circle class="ca" cx="1022.5" cy="612.8" r="3.3"/><circle class="ca" cx="1036.2" cy="611.5" r="3.3"/><circle class="cb" cx="1018.8" cy="619.0" r="3.3"/><circle class="cr" cx="911.2" cy="630.5" r="3.3"/><circle class="cr" cx="973.8" cy="628.0" r="3.3"/><circle class="co" cx="1016.2" cy="630.5" r="3.3"/><circle class="co" cx="1020.0" cy="631.8" r="3.3"/><circle class="ck" cx="870.0" cy="638.0" r="3.3"/><circle class="co" cx="908.8" cy="635.5" r="3.3"/><circle class="co" cx="913.8" cy="639.2" r="3.3"/><circle class="co" cx="892.5" cy="643.0" r="3.3"/><circle class="co" cx="896.2" cy="641.8" r="3.3"/><circle class="cr" cx="906.2" cy="646.8" r="3.3"/><circle class="cr" cx="925.0" cy="639.2" r="3.3"/><circle class="cl" cx="931.2" cy="636.8" r="3.3"/><circle class="cr" cx="940.0" cy="633.0" r="3.3"/><circle class="co" cx="936.2" cy="640.5" r="3.3"/><circle class="ck" cx="937.5" cy="635.5" r="3.3"/><circle class="cl" cx="941.2" cy="640.5" r="3.3"/><circle class="cp" cx="947.5" cy="640.5" r="3.3"/><circle class="cr" cx="952.5" cy="643.0" r="3.3"/><circle class="co" cx="856.2" cy="651.8" r="3.3"/><circle class="cr" cx="865.0" cy="651.8" r="3.3"/><circle class="cr" cx="875.0" cy="654.2" r="3.3"/><circle class="co" cx="885.0" cy="653.0" r="3.3"/><circle class="co" cx="967.5" cy="649.2" r="3.3"/><circle class="cr" cx="976.2" cy="649.2" r="3.3"/><circle class="cr" cx="983.8" cy="649.2" r="3.3"/><circle class="co" cx="981.2" cy="650.5" r="3.3"/><circle class="co" cx="978.8" cy="655.5" r="3.3"/><circle class="cb" cx="976.2" cy="653.0" r="3.3"/><circle class="co" cx="986.2" cy="655.5" r="3.3"/><circle class="cr" cx="990.0" cy="660.5" r="3.3"/><circle class="co" cx="991.2" cy="664.2" r="3.3"/><circle class="cr" cx="991.2" cy="669.2" r="3.3"/><circle class="cr" cx="986.2" cy="673.0" r="3.3"/><circle class="cr" cx="1028.8" cy="649.2" r="3.3"/><circle class="co" cx="1042.5" cy="645.5" r="3.3"/><circle class="cr" cx="1050.0" cy="644.2" r="3.3"/><circle class="cr" cx="850.0" cy="668.0" r="3.3"/><circle class="cl" cx="866.2" cy="673.0" r="3.3"/><circle class="cr" cx="1028.8" cy="675.5" r="3.3"/><circle class="cl" cx="855.0" cy="689.2" r="3.3"/><circle class="co" cx="857.5" cy="690.5" r="3.3"/><circle class="ck" cx="867.5" cy="694.2" r="3.3"/><circle class="cr" cx="983.8" cy="685.5" r="3.3"/><circle class="cr" cx="986.2" cy="691.8" r="3.3"/><circle class="co" cx="998.8" cy="689.2" r="3.3"/><circle class="ck" cx="1005.0" cy="695.5" r="3.3"/><circle class="cp" cx="1000.0" cy="695.5" r="3.3"/><circle class="co" cx="852.5" cy="704.2" r="3.3"/><circle class="cb" cx="1016.2" cy="701.8" r="3.3"/><circle class="cb" cx="995.0" cy="706.8" r="3.3"/><circle class="co" cx="1007.5" cy="708.0" r="3.3"/><circle class="ck" cx="836.2" cy="713.0" r="3.3"/><circle class="cr" cx="845.0" cy="713.0" r="3.3"/><circle class="cl" cx="821.2" cy="718.0" r="3.3"/><circle class="cg" cx="850.0" cy="718.0" r="3.3"/><circle class="cg" cx="847.5" cy="720.5" r="3.3"/><circle class="cp" cx="851.2" cy="720.5" r="3.3"/><circle class="cb" cx="858.8" cy="723.0" r="3.3"/><circle class="cb" cx="1003.8" cy="719.2" r="3.3"/><circle class="cb" cx="1006.2" cy="715.5" r="3.3"/><circle class="cl" cx="1008.8" cy="720.5" r="3.3"/><circle class="cp" cx="1047.5" cy="718.0" r="3.3"/><circle class="co" cx="1047.5" cy="724.2" r="3.3"/><circle class="cr" cx="837.5" cy="726.8" r="3.3"/><circle class="cr" cx="841.2" cy="725.5" r="3.3"/><circle class="ck" cx="837.5" cy="731.8" r="3.3"/><circle class="co" cx="850.0" cy="730.5" r="3.3"/><circle class="cb" cx="828.8" cy="731.8" r="3.3"/><circle class="cg" cx="821.2" cy="734.2" r="3.3"/><circle class="cl" cx="825.0" cy="735.5" r="3.3"/><circle class="cg" cx="831.2" cy="735.5" r="3.3"/><circle class="cr" cx="1038.8" cy="728.0" r="3.3"/><circle class="ck" cx="1008.8" cy="741.8" r="3.3"/><circle class="co" cx="1018.8" cy="745.5" r="3.3"/><circle class="cg" cx="1017.5" cy="746.8" r="3.3"/><circle class="cb" cx="1021.2" cy="753.0" r="3.3"/><circle class="cr" cx="1031.2" cy="753.0" r="3.3"/><circle class="cr" cx="1035.0" cy="750.5" r="3.3"/><circle class="co" cx="1042.5" cy="753.0" r="3.3"/><circle class="cr" cx="1031.2" cy="765.8" r="3.3"/><circle class="cg" cx="1042.5" cy="787.0" r="3.3"/><circle class="cr" cx="1036.2" cy="808.2" r="3.3"/><circle class="cr" cx="1056.2" cy="414.0" r="3.3"/><circle class="cr" cx="1060.0" cy="419.0" r="3.3"/><circle class="cr" cx="1112.5" cy="414.0" r="3.3"/><circle class="co" cx="1126.2" cy="416.5" r="3.3"/><circle class="cb" cx="1133.8" cy="417.8" r="3.3"/><circle class="cr" cx="1141.2" cy="419.0" r="3.3"/><circle class="cp" cx="1145.0" cy="419.0" r="3.3"/><circle class="cg" cx="1151.2" cy="414.0" r="3.3"/><circle class="cp" cx="1160.0" cy="417.8" r="3.3"/><circle class="cr" cx="1168.8" cy="415.2" r="3.3"/><circle class="cl" cx="1181.2" cy="416.5" r="3.3"/><circle class="ck" cx="1191.2" cy="419.0" r="3.3"/><circle class="cl" cx="1205.0" cy="415.2" r="3.3"/><circle class="cp" cx="1208.8" cy="420.2" r="3.3"/><circle class="cr" cx="1216.2" cy="416.5" r="3.3"/><circle class="cr" cx="1221.2" cy="415.2" r="3.3"/><circle class="co x" cx="1231.2" cy="415.2" r="3.3"/><circle class="cg x" cx="1237.5" cy="414.0" r="3.3"/><circle class="cr x" cx="1242.5" cy="419.0" r="3.3"/><circle class="cr x" cx="1252.5" cy="416.5" r="3.3"/><circle class="cg x" cx="1257.5" cy="419.0" r="3.3"/><circle class="ca" cx="1267.5" cy="415.2" r="3.3"/><circle class="cl" cx="1276.2" cy="416.5" r="3.3"/><circle class="cl" cx="1281.2" cy="419.0" r="3.3"/><circle class="cw" cx="1285.0" cy="414.0" r="3.3"/><circle class="co x" cx="1287.5" cy="421.5" r="3.3"/><circle class="cb" cx="1116.2" cy="426.5" r="3.3"/><circle class="cb" cx="1123.8" cy="424.0" r="3.3"/><circle class="cr" cx="1112.5" cy="429.0" r="3.3"/><circle class="ck" cx="1131.2" cy="424.0" r="3.3"/><circle class="cr" cx="1137.5" cy="430.2" r="3.3"/><circle class="cr" cx="1143.8" cy="425.2" r="3.3"/><circle class="cb" cx="1161.2" cy="426.5" r="3.3"/><circle class="cw" cx="1168.8" cy="422.8" r="3.3"/><circle class="cr" cx="1167.5" cy="427.8" r="3.3"/><circle class="cr" cx="1175.0" cy="425.2" r="3.3"/><circle class="co" cx="1177.5" cy="431.5" r="3.3"/><circle class="cr x" cx="1192.5" cy="426.5" r="3.3"/><circle class="cr x" cx="1197.5" cy="426.5" r="3.3"/><circle class="co x" cx="1202.5" cy="430.2" r="3.3"/><circle class="cr" cx="1207.5" cy="425.2" r="3.3"/><circle class="cr" cx="1218.8" cy="426.5" r="3.3"/><circle class="co x" cx="1223.8" cy="422.8" r="3.3"/><circle class="cg x" cx="1228.8" cy="424.0" r="3.3"/><circle class="cg x" cx="1232.5" cy="426.5" r="3.3"/><circle class="co x" cx="1240.0" cy="426.5" r="3.3"/><circle class="cr x" cx="1246.2" cy="426.5" r="3.3"/><circle class="cb x" cx="1250.0" cy="425.2" r="3.3"/><circle class="cg x" cx="1256.2" cy="422.8" r="3.3"/><circle class="cg x" cx="1258.8" cy="426.5" r="3.3"/><circle class="cr" cx="1268.8" cy="429.0" r="3.3"/><circle class="cr" cx="1223.8" cy="430.2" r="3.3"/><circle class="cr x" cx="1230.0" cy="430.2" r="3.3"/><circle class="cg x" cx="1236.2" cy="431.5" r="3.3"/><circle class="cg x" cx="1242.5" cy="429.0" r="3.3"/><circle class="cl x" cx="1235.0" cy="429.0" r="3.3"/><circle class="co x" cx="1283.8" cy="431.5" r="3.3"/><circle class="cr x" cx="1287.5" cy="426.5" r="3.3"/><circle class="co" cx="1053.8" cy="439.0" r="3.3"/><circle class="cl" cx="1072.5" cy="435.2" r="3.3"/><circle class="cg" cx="1087.5" cy="435.2" r="3.3"/><circle class="cr" cx="1101.2" cy="434.0" r="3.3"/><circle class="cp" cx="1106.2" cy="440.2" r="3.3"/><circle class="cb" cx="1125.0" cy="437.8" r="3.3"/><circle class="co" cx="1143.8" cy="442.8" r="3.3"/><circle class="cr" cx="1152.5" cy="439.0" r="3.3"/><circle class="co" cx="1158.8" cy="439.0" r="3.3"/><circle class="cr" cx="1167.5" cy="435.2" r="3.3"/><circle class="co" cx="1167.5" cy="439.0" r="3.3"/><circle class="cr" cx="1177.5" cy="439.0" r="3.3"/><circle class="co" cx="1182.5" cy="444.0" r="3.3"/><circle class="cr" cx="1195.0" cy="440.2" r="3.3"/><circle class="cr x" cx="1200.0" cy="434.0" r="3.3"/><circle class="cr" cx="1205.0" cy="432.8" r="3.3"/><circle class="cr" cx="1213.8" cy="436.5" r="3.3"/><circle class="cp" cx="1220.0" cy="445.2" r="3.3"/><circle class="cl" cx="1220.0" cy="441.5" r="3.3"/><circle class="cg" cx="1230.0" cy="441.5" r="3.3"/><circle class="cr x" cx="1237.5" cy="436.5" r="3.3"/><circle class="cb" cx="1248.8" cy="435.2" r="3.3"/><circle class="cb" cx="1255.0" cy="439.0" r="3.3"/><circle class="cg" cx="1248.8" cy="442.8" r="3.3"/><circle class="cg" cx="1243.8" cy="445.2" r="3.3"/><circle class="cg" cx="1258.8" cy="444.0" r="3.3"/><circle class="cr" cx="1265.0" cy="445.2" r="3.3"/><circle class="cl" cx="1272.5" cy="442.8" r="3.3"/><circle class="cr" cx="1276.2" cy="437.8" r="3.3"/><circle class="cr" cx="1278.8" cy="444.0" r="3.3"/><circle class="cg" cx="1283.8" cy="446.5" r="3.3"/><circle class="ca" cx="1113.8" cy="445.2" r="3.3"/><circle class="co" cx="1123.8" cy="445.2" r="3.3"/><circle class="cb" cx="1108.8" cy="449.0" r="3.3"/><circle class="cr" cx="1096.2" cy="447.8" r="3.3"/><circle class="cr" cx="1102.5" cy="449.0" r="3.3"/><circle class="cr" cx="1102.5" cy="452.8" r="3.3"/><circle class="cg" cx="1093.8" cy="452.8" r="3.3"/><circle class="cg" cx="1087.5" cy="454.0" r="3.3"/><circle class="cr" cx="1155.0" cy="444.0" r="3.3"/><circle class="cr" cx="1157.5" cy="447.8" r="3.3"/><circle class="cb" cx="1168.8" cy="447.8" r="3.3"/><circle class="cl" cx="1186.2" cy="449.0" r="3.3"/><circle class="cr" cx="1177.5" cy="450.2" r="3.3"/><circle class="cr" cx="1180.0" cy="455.2" r="3.3"/><circle class="cl" cx="1200.0" cy="445.2" r="3.3"/><circle class="cr" cx="1196.2" cy="444.0" r="3.3"/><circle class="cr" cx="1205.0" cy="450.2" r="3.3"/><circle class="cr" cx="1206.2" cy="455.2" r="3.3"/><circle class="cp" cx="1232.5" cy="450.2" r="3.3"/><circle class="cr x" cx="1241.2" cy="452.8" r="3.3"/><circle class="cb" cx="1250.0" cy="449.0" r="3.3"/><circle class="cg" cx="1253.8" cy="451.5" r="3.3"/><circle class="cg" cx="1240.0" cy="456.5" r="3.3"/><circle class="cr" cx="1263.8" cy="450.2" r="3.3"/><circle class="cr" cx="1271.2" cy="449.0" r="3.3"/><circle class="cr" cx="1282.5" cy="449.0" r="3.3"/><circle class="cr" cx="1051.2" cy="456.5" r="3.3"/><circle class="cl" cx="1075.0" cy="456.5" r="3.3"/><circle class="cr" cx="1117.5" cy="451.5" r="3.3"/><circle class="ca" cx="1117.5" cy="456.5" r="3.3"/><circle class="ck" cx="1126.2" cy="454.0" r="3.3"/><circle class="ck" cx="1132.5" cy="459.0" r="3.3"/><circle class="cl" cx="1125.0" cy="460.2" r="3.3"/><circle class="cl" cx="1127.5" cy="462.8" r="3.3"/><circle class="cr" cx="1141.2" cy="454.0" r="3.3"/><circle class="cb" cx="1148.8" cy="451.5" r="3.3"/><circle class="cr" cx="1142.5" cy="459.0" r="3.3"/><circle class="cr" cx="1160.0" cy="460.2" r="3.3"/><circle class="cl" cx="1165.0" cy="459.0" r="3.3"/><circle class="cr" cx="1166.2" cy="462.8" r="3.3"/><circle class="cr" cx="1150.0" cy="464.0" r="3.3"/><circle class="cr" cx="1096.2" cy="459.0" r="3.3"/><circle class="co" cx="1101.2" cy="460.2" r="3.3"/><circle class="cr" cx="1087.5" cy="461.5" r="3.3"/><circle class="cr" cx="1083.8" cy="464.0" r="3.3"/><circle class="cp" cx="1115.0" cy="464.0" r="3.3"/><circle class="cr" cx="1113.8" cy="461.5" r="3.3"/><circle class="cr" cx="1126.2" cy="466.5" r="3.3"/><circle class="cr" cx="1065.0" cy="461.5" r="3.3"/><circle class="cr" cx="1070.0" cy="460.2" r="3.3"/><circle class="cg" cx="1063.8" cy="465.2" r="3.3"/><circle class="cr" cx="1078.8" cy="467.8" r="3.3"/><circle class="cr" cx="1206.2" cy="460.2" r="3.3"/><circle class="co" cx="1200.0" cy="464.0" r="3.3"/><circle class="cb" cx="1207.5" cy="462.8" r="3.3"/><circle class="cr" cx="1207.5" cy="467.8" r="3.3"/><circle class="ck" cx="1221.2" cy="455.2" r="3.3"/><circle class="cr" cx="1225.0" cy="461.5" r="3.3"/><circle class="cr" cx="1228.8" cy="465.2" r="3.3"/><circle class="cr" cx="1221.2" cy="469.0" r="3.3"/><circle class="cr" cx="1228.8" cy="469.0" r="3.3"/><circle class="cb" cx="1221.2" cy="472.8" r="3.3"/><circle class="cr" cx="1228.8" cy="472.8" r="3.3"/><circle class="cr" cx="1240.0" cy="464.0" r="3.3"/><circle class="cg" cx="1243.8" cy="460.2" r="3.3"/><circle class="cg" cx="1237.5" cy="456.5" r="3.3"/><circle class="cg" cx="1258.8" cy="457.8" r="3.3"/><circle class="cr" cx="1265.0" cy="459.0" r="3.3"/><circle class="cb" cx="1271.2" cy="460.2" r="3.3"/><circle class="cg" cx="1275.0" cy="461.5" r="3.3"/><circle class="cl" cx="1251.2" cy="462.8" r="3.3"/><circle class="ck" cx="1258.8" cy="465.2" r="3.3"/><circle class="cp" cx="1263.8" cy="464.0" r="3.3"/><circle class="cr" cx="1281.2" cy="457.8" r="3.3"/><circle class="cb" cx="1281.2" cy="464.0" r="3.3"/><circle class="cp x" cx="1288.8" cy="461.5" r="3.3"/><circle class="cr" cx="1290.0" cy="454.0" r="3.3"/><circle class="ck" cx="1142.5" cy="467.8" r="3.3"/><circle class="co" cx="1148.8" cy="470.2" r="3.3"/><circle class="cr" cx="1146.2" cy="472.8" r="3.3"/><circle class="cr" cx="1152.5" cy="472.8" r="3.3"/><circle class="cr" cx="1172.5" cy="471.5" r="3.3"/><circle class="cp" cx="1185.0" cy="470.2" r="3.3"/><circle class="co" cx="1190.0" cy="469.0" r="3.3"/><circle class="cr" cx="1196.2" cy="472.8" r="3.3"/><circle class="cb" cx="1185.0" cy="476.5" r="3.3"/><circle class="cr" cx="1168.8" cy="477.8" r="3.3"/><circle class="co x" cx="1050.0" cy="470.2" r="3.3"/><circle class="cr" cx="1055.0" cy="470.2" r="3.3"/><circle class="co x" cx="1050.0" cy="475.2" r="3.3"/><circle class="co" cx="1061.2" cy="472.8" r="3.3"/><circle class="ck" cx="1072.5" cy="471.5" r="3.3"/><circle class="cr" cx="1091.2" cy="472.8" r="3.3"/><circle class="co" cx="1097.5" cy="471.5" r="3.3"/><circle class="co" cx="1105.0" cy="472.8" r="3.3"/><circle class="cr" cx="1106.2" cy="475.2" r="3.3"/><circle class="cr" cx="1115.0" cy="472.8" r="3.3"/><circle class="cl" cx="1085.0" cy="476.5" r="3.3"/><circle class="cl" cx="1057.5" cy="479.0" r="3.3"/><circle class="cr" cx="1070.0" cy="480.2" r="3.3"/><circle class="co" cx="1076.2" cy="479.0" r="3.3"/><circle class="cr" cx="1083.8" cy="481.5" r="3.3"/><circle class="cr" cx="1086.2" cy="485.2" r="3.3"/><circle class="cr" cx="1095.0" cy="480.2" r="3.3"/><circle class="cr" cx="1126.2" cy="480.2" r="3.3"/><circle class="cb" cx="1101.2" cy="486.5" r="3.3"/><circle class="cr" cx="1111.2" cy="486.5" r="3.3"/><circle class="cr" cx="1148.8" cy="485.2" r="3.3"/><circle class="cr" cx="1160.0" cy="487.8" r="3.3"/><circle class="cr" cx="1178.8" cy="486.5" r="3.3"/><circle class="cp" cx="1193.8" cy="486.5" r="3.3"/><circle class="cr" cx="1197.5" cy="484.0" r="3.3"/><circle class="cr" cx="1206.2" cy="485.2" r="3.3"/><circle class="cr" cx="1210.0" cy="486.5" r="3.3"/><circle class="cr" cx="1235.0" cy="482.8" r="3.3"/><circle class="co" cx="1228.8" cy="486.5" r="3.3"/><circle class="cr" cx="1222.5" cy="490.2" r="3.3"/><circle class="cr" cx="1241.2" cy="487.8" r="3.3"/><circle class="cr" cx="1253.8" cy="490.2" r="3.3"/><circle class="cg" cx="1266.2" cy="487.8" r="3.3"/><circle class="cp" cx="1267.5" cy="486.5" r="3.3"/><circle class="cr" cx="1251.2" cy="469.0" r="3.3"/><circle class="co" cx="1245.0" cy="474.0" r="3.3"/><circle class="cr" cx="1250.0" cy="476.5" r="3.3"/><circle class="cp" cx="1256.2" cy="471.5" r="3.3"/><circle class="cb" cx="1261.2" cy="474.0" r="3.3"/><circle class="cr" cx="1257.5" cy="479.0" r="3.3"/><circle class="cr" cx="1271.2" cy="472.8" r="3.3"/><circle class="cl" cx="1270.0" cy="476.5" r="3.3"/><circle class="ck" cx="1280.0" cy="477.8" r="3.3"/><circle class="cr" cx="1053.8" cy="492.8" r="3.3"/><circle class="cr" cx="1060.0" cy="490.2" r="3.3"/><circle class="ck" cx="1055.0" cy="497.8" r="3.3"/><circle class="cr" cx="1070.0" cy="491.5" r="3.3"/><circle class="cr" cx="1078.8" cy="492.8" r="3.3"/><circle class="cr" cx="1055.0" cy="504.0" r="3.3"/><circle class="co" cx="1065.0" cy="501.5" r="3.3"/><circle class="cr" cx="1073.8" cy="499.0" r="3.3"/><circle class="cr" cx="1108.8" cy="494.0" r="3.3"/><circle class="cr" cx="1118.8" cy="494.0" r="3.3"/><circle class="cr" cx="1125.0" cy="491.5" r="3.3"/><circle class="cr" cx="1138.8" cy="491.5" r="3.3"/><circle class="co" cx="1097.5" cy="495.2" r="3.3"/><circle class="co" cx="1103.8" cy="499.0" r="3.3"/><circle class="cb" cx="1098.8" cy="501.5" r="3.3"/><circle class="cr" cx="1092.5" cy="504.0" r="3.3"/><circle class="cr" cx="1171.2" cy="494.0" r="3.3"/><circle class="cr" cx="1186.2" cy="497.8" r="3.3"/><circle class="cr" cx="1200.0" cy="492.8" r="3.3"/><circle class="cr" cx="1205.0" cy="495.2" r="3.3"/><circle class="cp" cx="1200.0" cy="500.2" r="3.3"/><circle class="cr" cx="1196.2" cy="504.0" r="3.3"/><circle class="cr" cx="1191.2" cy="506.5" r="3.3"/><circle class="cr" cx="1220.0" cy="499.0" r="3.3"/><circle class="cr" cx="1227.5" cy="497.8" r="3.3"/><circle class="cr" cx="1233.8" cy="495.2" r="3.3"/><circle class="cr" cx="1230.0" cy="502.8" r="3.3"/><circle class="cb x" cx="1243.8" cy="492.8" r="3.3"/><circle class="cb" cx="1242.5" cy="495.2" r="3.3"/><circle class="cr" cx="1253.8" cy="495.2" r="3.3"/><circle class="cr" cx="1257.5" cy="492.8" r="3.3"/><circle class="cg" cx="1251.2" cy="499.0" r="3.3"/><circle class="cg" cx="1253.8" cy="501.5" r="3.3"/><circle class="cg" cx="1248.8" cy="505.2" r="3.3"/><circle class="cr" cx="1243.8" cy="504.0" r="3.3"/><circle class="cr" cx="1266.2" cy="500.2" r="3.3"/><circle class="cb" cx="1282.5" cy="492.8" r="3.3"/><circle class="ck" cx="1287.5" cy="495.2" r="3.3"/><circle class="cr" cx="1071.2" cy="506.5" r="3.3"/><circle class="cr" cx="1080.0" cy="509.0" r="3.3"/><circle class="co" cx="1123.8" cy="505.2" r="3.3"/><circle class="cr" cx="1130.0" cy="506.5" r="3.3"/><circle class="cr" cx="1140.0" cy="501.5" r="3.3"/><circle class="co" cx="1140.0" cy="504.0" r="3.3"/><circle class="cb" cx="1107.5" cy="506.5" r="3.3"/><circle class="co" cx="1107.5" cy="507.8" r="3.3"/><circle class="cg" cx="1091.2" cy="511.5" r="3.3"/><circle class="cp" cx="1100.0" cy="511.5" r="3.3"/><circle class="co" cx="1085.0" cy="514.0" r="3.3"/><circle class="co" cx="1092.5" cy="517.8" r="3.3"/><circle class="cr" cx="1136.2" cy="512.8" r="3.3"/><circle class="cr" cx="1140.0" cy="517.8" r="3.3"/><circle class="ck" cx="1200.0" cy="512.8" r="3.3"/><circle class="cp" cx="1248.8" cy="514.0" r="3.3"/><circle class="cb" cx="1247.5" cy="519.0" r="3.3"/><circle class="ck" cx="1253.8" cy="520.2" r="3.3"/><circle class="cr" cx="1262.5" cy="512.8" r="3.3"/><circle class="cr" cx="1262.5" cy="517.8" r="3.3"/><circle class="cr" cx="1270.0" cy="516.5" r="3.3"/><circle class="cr" cx="1273.8" cy="517.8" r="3.3"/><circle class="cr" cx="1283.8" cy="511.5" r="3.3"/><circle class="cr" cx="1052.5" cy="521.5" r="3.3"/><circle class="cr" cx="1068.8" cy="516.5" r="3.3"/><circle class="cr" cx="1066.2" cy="521.5" r="3.3"/><circle class="cr" cx="1076.2" cy="524.0" r="3.3"/><circle class="co" cx="1082.5" cy="522.8" r="3.3"/><circle class="cb" cx="1087.5" cy="525.2" r="3.3"/><circle class="cr" cx="1087.5" cy="522.8" r="3.3"/><circle class="cr" cx="1080.0" cy="530.2" r="3.3"/><circle class="cr" cx="1093.8" cy="527.8" r="3.3"/><circle class="cb" cx="1106.2" cy="517.8" r="3.3"/><circle class="cr" cx="1106.2" cy="522.8" r="3.3"/><circle class="cr" cx="1107.5" cy="527.8" r="3.3"/><circle class="cr" cx="1118.8" cy="527.8" r="3.3"/><circle class="cb" cx="1121.2" cy="535.2" r="3.3"/><circle class="cg" cx="1123.8" cy="531.5" r="3.3"/><circle class="co" cx="1116.2" cy="534.0" r="3.3"/><circle class="cg" cx="1111.2" cy="534.0" r="3.3"/><circle class="cr" cx="1101.2" cy="535.2" r="3.3"/><circle class="cr" cx="1096.2" cy="537.8" r="3.3"/><circle class="cr" cx="1058.8" cy="536.5" r="3.3"/><circle class="cp" cx="1050.0" cy="535.2" r="3.3"/><circle class="cr" cx="1077.5" cy="541.5" r="3.3"/><circle class="co" cx="1086.2" cy="542.8" r="3.3"/><circle class="cb" cx="1106.2" cy="541.5" r="3.3"/><circle class="cp" cx="1071.2" cy="542.8" r="3.3"/><circle class="cr" cx="1147.5" cy="524.0" r="3.3"/><circle class="cr" cx="1165.0" cy="524.0" r="3.3"/><circle class="co" cx="1157.5" cy="530.2" r="3.3"/><circle class="cr" cx="1190.0" cy="521.5" r="3.3"/><circle class="ck" cx="1235.0" cy="525.2" r="3.3"/><circle class="cg" cx="1241.2" cy="526.5" r="3.3"/><circle class="cr" cx="1238.8" cy="531.5" r="3.3"/><circle class="cb" cx="1231.2" cy="536.5" r="3.3"/><circle class="cr" cx="1237.5" cy="534.0" r="3.3"/><circle class="cr" cx="1233.8" cy="540.2" r="3.3"/><circle class="cr" cx="1253.8" cy="527.8" r="3.3"/><circle class="cr" cx="1258.8" cy="529.0" r="3.3"/><circle class="cr" cx="1258.8" cy="532.8" r="3.3"/><circle class="co" cx="1253.8" cy="541.5" r="3.3"/><circle class="cr x" cx="1292.5" cy="419.0" r="3.3"/><circle class="cr x" cx="1293.8" cy="424.0" r="3.3"/><circle class="cr" cx="1308.8" cy="419.0" r="3.3"/><circle class="co" cx="1317.5" cy="416.5" r="3.3"/><circle class="cl" cx="1331.2" cy="414.0" r="3.3"/><circle class="cr" cx="1332.5" cy="421.5" r="3.3"/><circle class="cr" cx="1342.5" cy="419.0" r="3.3"/><circle class="cr" cx="1376.2" cy="414.0" r="3.3"/><circle class="cr" cx="1382.5" cy="414.0" r="3.3"/><circle class="co" cx="1383.8" cy="422.8" r="3.3"/><circle class="cr" cx="1393.8" cy="419.0" r="3.3"/><circle class="cl" cx="1390.0" cy="420.2" r="3.3"/><circle class="cr" cx="1410.0" cy="421.5" r="3.3"/><circle class="cr" cx="1413.8" cy="415.2" r="3.3"/><circle class="cb" cx="1420.0" cy="424.0" r="3.3"/><circle class="co" cx="1430.0" cy="414.0" r="3.3"/><circle class="cb" cx="1451.2" cy="414.0" r="3.3"/><circle class="ca" cx="1443.8" cy="420.2" r="3.3"/><circle class="cr" cx="1446.2" cy="425.2" r="3.3"/><circle class="cp" cx="1470.0" cy="421.5" r="3.3"/><circle class="cp" cx="1471.2" cy="426.5" r="3.3"/><circle class="cr" cx="1476.2" cy="419.0" r="3.3"/><circle class="cr x" cx="1292.5" cy="430.2" r="3.3"/><circle class="co x" cx="1296.2" cy="427.8" r="3.3"/><circle class="cr x" cx="1300.0" cy="429.0" r="3.3"/><circle class="cr x" cx="1293.8" cy="434.0" r="3.3"/><circle class="cr x" cx="1300.0" cy="434.0" r="3.3"/><circle class="cr" cx="1312.5" cy="429.0" r="3.3"/><circle class="cl" cx="1318.8" cy="429.0" r="3.3"/><circle class="cr" cx="1326.2" cy="427.8" r="3.3"/><circle class="co" cx="1326.2" cy="432.8" r="3.3"/><circle class="cr" cx="1340.0" cy="434.0" r="3.3"/><circle class="co" cx="1336.2" cy="437.8" r="3.3"/><circle class="cr" cx="1341.2" cy="439.0" r="3.3"/><circle class="cp" cx="1383.8" cy="429.0" r="3.3"/><circle class="cr" cx="1401.2" cy="429.0" r="3.3"/><circle class="cr" cx="1377.5" cy="437.8" r="3.3"/><circle class="cp" cx="1390.0" cy="437.8" r="3.3"/><circle class="cr" cx="1461.2" cy="437.8" r="3.3"/><circle class="cb" cx="1296.2" cy="439.0" r="3.3"/><circle class="cr" cx="1302.5" cy="437.8" r="3.3"/><circle class="cl" cx="1306.2" cy="436.5" r="3.3"/><circle class="cy" cx="1313.8" cy="440.2" r="3.3"/><circle class="cr" cx="1326.2" cy="441.5" r="3.3"/><circle class="cr" cx="1320.0" cy="445.2" r="3.3"/><circle class="cr" cx="1325.0" cy="446.5" r="3.3"/><circle class="cr" cx="1308.8" cy="447.8" r="3.3"/><circle class="cr" cx="1297.5" cy="451.5" r="3.3"/><circle class="co" cx="1311.2" cy="452.8" r="3.3"/><circle class="ck" cx="1316.2" cy="452.8" r="3.3"/><circle class="cr" cx="1328.8" cy="451.5" r="3.3"/><circle class="cr" cx="1323.8" cy="455.2" r="3.3"/><circle class="cr" cx="1317.5" cy="456.5" r="3.3"/><circle class="ca" cx="1335.0" cy="447.8" r="3.3"/><circle class="co x" cx="1340.0" cy="447.8" r="3.3"/><circle class="cr" cx="1343.8" cy="447.8" r="3.3"/><circle class="co" cx="1355.0" cy="445.2" r="3.3"/><circle class="cr" cx="1362.5" cy="442.8" r="3.3"/><circle class="cp" cx="1361.2" cy="446.5" r="3.3"/><circle class="cr" cx="1366.2" cy="447.8" r="3.3"/><circle class="co" cx="1363.8" cy="451.5" r="3.3"/><circle class="ck" cx="1371.2" cy="451.5" r="3.3"/><circle class="cr" cx="1370.0" cy="455.2" r="3.3"/><circle class="cr" cx="1358.8" cy="454.0" r="3.3"/><circle class="cr" cx="1375.0" cy="445.2" r="3.3"/><circle class="cr" cx="1378.8" cy="450.2" r="3.3"/><circle class="cr" cx="1400.0" cy="442.8" r="3.3"/><circle class="cr" cx="1403.8" cy="447.8" r="3.3"/><circle class="cr" cx="1405.0" cy="449.0" r="3.3"/><circle class="cr" cx="1410.0" cy="455.2" r="3.3"/><circle class="cr" cx="1421.2" cy="456.5" r="3.3"/><circle class="cr" cx="1432.5" cy="454.0" r="3.3"/><circle class="cp" cx="1450.0" cy="447.8" r="3.3"/><circle class="cr" cx="1453.8" cy="446.5" r="3.3"/><circle class="cr" cx="1460.0" cy="445.2" r="3.3"/><circle class="cr" cx="1467.5" cy="445.2" r="3.3"/><circle class="cr" cx="1291.2" cy="454.0" r="3.3"/><circle class="cb" cx="1293.8" cy="461.5" r="3.3"/><circle class="cp" cx="1290.0" cy="461.5" r="3.3"/><circle class="cr" cx="1303.8" cy="457.8" r="3.3"/><circle class="cr" cx="1307.5" cy="462.8" r="3.3"/><circle class="cr x" cx="1323.8" cy="460.2" r="3.3"/><circle class="cg x" cx="1327.5" cy="460.2" r="3.3"/><circle class="co" cx="1326.2" cy="464.0" r="3.3"/><circle class="cr" cx="1327.5" cy="462.8" r="3.3"/><circle class="cr" cx="1337.5" cy="457.8" r="3.3"/><circle class="cr" cx="1341.2" cy="457.8" r="3.3"/><circle class="cr" cx="1346.2" cy="461.5" r="3.3"/><circle class="cr" cx="1350.0" cy="457.8" r="3.3"/><circle class="cr" cx="1356.2" cy="462.8" r="3.3"/><circle class="cr" cx="1377.5" cy="460.2" r="3.3"/><circle class="cr" cx="1377.5" cy="465.2" r="3.3"/><circle class="cr" cx="1450.0" cy="460.2" r="3.3"/><circle class="co" cx="1452.5" cy="464.0" r="3.3"/><circle class="cr" cx="1292.5" cy="471.5" r="3.3"/><circle class="cr" cx="1298.8" cy="472.8" r="3.3"/><circle class="cg" cx="1323.8" cy="474.0" r="3.3"/><circle class="cr" cx="1310.0" cy="481.5" r="3.3"/><circle class="cp" cx="1302.5" cy="485.2" r="3.3"/><circle class="cb" cx="1372.5" cy="469.0" r="3.3"/><circle class="cp" cx="1378.8" cy="470.2" r="3.3"/><circle class="co" cx="1386.2" cy="472.8" r="3.3"/><circle class="cr" cx="1395.0" cy="469.0" r="3.3"/><circle class="cp" cx="1396.2" cy="472.8" r="3.3"/><circle class="co" cx="1380.0" cy="481.5" r="3.3"/><circle class="co" cx="1382.5" cy="484.0" r="3.3"/><circle class="cb" cx="1426.2" cy="475.2" r="3.3"/><circle class="cr" cx="1430.0" cy="477.8" r="3.3"/><circle class="cl" cx="1433.8" cy="481.5" r="3.3"/><circle class="cp" cx="1428.8" cy="482.8" r="3.3"/><circle class="co" cx="1431.2" cy="485.2" r="3.3"/><circle class="cb" cx="1453.8" cy="482.8" r="3.3"/><circle class="cr" cx="1457.5" cy="482.8" r="3.3"/><circle class="ck" cx="1298.8" cy="495.2" r="3.3"/><circle class="co" cx="1301.2" cy="500.2" r="3.3"/><circle class="ck" cx="1306.2" cy="504.0" r="3.3"/><circle class="cr" cx="1330.0" cy="497.8" r="3.3"/><circle class="cb" cx="1378.8" cy="492.8" r="3.3"/><circle class="cl" cx="1385.0" cy="500.2" r="3.3"/><circle class="ck" cx="1382.5" cy="499.0" r="3.3"/><circle class="cg" cx="1386.2" cy="506.5" r="3.3"/><circle class="cy" cx="1381.2" cy="505.2" r="3.3"/><circle class="cb" cx="1382.5" cy="511.5" r="3.3"/><circle class="ck" cx="1396.2" cy="514.0" r="3.3"/><circle class="co" cx="1441.2" cy="492.8" r="3.3"/><circle class="cr" cx="1451.2" cy="492.8" r="3.3"/><circle class="cg" cx="1451.2" cy="495.2" r="3.3"/><circle class="co" cx="1447.5" cy="495.2" r="3.3"/><circle class="cb" cx="1445.0" cy="499.0" r="3.3"/><circle class="cr" cx="1450.0" cy="502.8" r="3.3"/><circle class="cb" cx="1462.5" cy="501.5" r="3.3"/><circle class="cb x" cx="1457.5" cy="506.5" r="3.3"/><circle class="co" cx="1466.2" cy="506.5" r="3.3"/><circle class="cb" cx="1470.0" cy="509.0" r="3.3"/><circle class="ca" cx="1462.5" cy="511.5" r="3.3"/><circle class="ck x" cx="1460.0" cy="509.0" r="3.3"/><circle class="cr" cx="1296.2" cy="510.2" r="3.3"/><circle class="cr" cx="1293.8" cy="516.5" r="3.3"/><circle class="cr" cx="1325.0" cy="515.2" r="3.3"/><circle class="cr" cx="1456.2" cy="517.8" r="3.3"/><circle class="cr" cx="1462.5" cy="517.8" r="3.3"/><circle class="cr" cx="1467.5" cy="517.8" r="3.3"/><circle class="cr" cx="1473.8" cy="514.0" r="3.3"/><circle class="cp" cx="1481.2" cy="515.2" r="3.3"/><circle class="cp" cx="1486.2" cy="512.8" r="3.3"/><circle class="cr" cx="1490.0" cy="512.8" r="3.3"/><circle class="cr" cx="1478.8" cy="522.8" r="3.3"/><circle class="cr" cx="1517.5" cy="517.8" r="3.3"/><circle class="cb" cx="1368.8" cy="529.0" r="3.3"/><circle class="cr" cx="1400.0" cy="530.2" r="3.3"/><circle class="cr" cx="1448.8" cy="532.8" r="3.3"/><circle class="cp" cx="1463.8" cy="529.0" r="3.3"/><circle class="co" cx="1472.5" cy="526.5" r="3.3"/><circle class="cp" cx="1468.8" cy="532.8" r="3.3"/><circle class="cr" cx="1472.5" cy="536.5" r="3.3"/><circle class="cp" cx="1463.8" cy="540.2" r="3.3"/><circle class="cr" cx="1498.8" cy="527.8" r="3.3"/><circle class="cr" cx="1503.8" cy="532.8" r="3.3"/><circle class="cr" cx="1508.8" cy="530.2" r="3.3"/><circle class="co" cx="1510.0" cy="532.8" r="3.3"/><circle class="cr" cx="1515.0" cy="532.8" r="3.3"/><circle class="co" cx="1300.0" cy="534.0" r="3.3"/><circle class="co" cx="1297.5" cy="540.2" r="3.3"/><circle class="ck" cx="1303.8" cy="540.2" r="3.3"/><circle class="cr" cx="1308.8" cy="541.5" r="3.3"/><circle class="cw" cx="1530.0" cy="542.8" r="3.3"/><circle class="cr" cx="1616.2" cy="524.0" r="3.3"/><circle class="cr" cx="1628.8" cy="542.8" r="3.3"/><circle class="cg" cx="1621.2" cy="552.8" r="3.3"/><circle class="ca" cx="1612.5" cy="557.8" r="3.3"/><circle class="cr" cx="1596.2" cy="564.0" r="3.3"/><circle class="co" cx="1602.5" cy="566.5" r="3.3"/><circle class="ck" cx="1605.0" cy="562.8" r="3.3"/><circle class="co" cx="1597.5" cy="569.0" r="3.3"/><circle class="ck" cx="1587.5" cy="569.0" r="3.3"/><circle class="ca" cx="1578.8" cy="569.0" r="3.3"/><circle class="co" cx="1571.2" cy="570.2" r="3.3"/><circle class="cr" cx="1566.2" cy="575.2" r="3.3"/><circle class="cr" cx="1568.8" cy="589.0" r="3.3"/><circle class="co" cx="1612.5" cy="585.2" r="3.3"/><circle class="cr" cx="1555.0" cy="604.0" r="3.3"/><circle class="cr" cx="1551.2" cy="607.8" r="3.3"/><circle class="cr" cx="1612.5" cy="607.8" r="3.3"/><circle class="cr" cx="1617.5" cy="607.8" r="3.3"/><circle class="co" cx="1632.5" cy="606.5" r="3.3"/><circle class="co" cx="1093.8" cy="545.5" r="3.3"/><circle class="cr" cx="1138.8" cy="545.5" r="3.3"/><circle class="cr" cx="1062.5" cy="545.5" r="3.3"/><circle class="co" cx="1230.0" cy="544.2" r="3.3"/><circle class="cr" cx="1236.2" cy="544.2" r="3.3"/><circle class="ck" cx="1062.5" cy="549.2" r="3.3"/><circle class="cp" cx="1065.0" cy="553.0" r="3.3"/><circle class="cr" cx="1070.0" cy="555.5" r="3.3"/><circle class="cl" cx="1073.8" cy="555.5" r="3.3"/><circle class="cr" cx="1103.8" cy="551.8" r="3.3"/><circle class="cr" cx="1110.0" cy="550.5" r="3.3"/><circle class="co" cx="1118.8" cy="551.8" r="3.3"/><circle class="cp" cx="1105.0" cy="556.8" r="3.3"/><circle class="cr" cx="1131.2" cy="554.2" r="3.3"/><circle class="cr" cx="1085.0" cy="556.8" r="3.3"/><circle class="cg" cx="1091.2" cy="559.2" r="3.3"/><circle class="cl" cx="1108.8" cy="566.8" r="3.3"/><circle class="ck" cx="1108.8" cy="563.0" r="3.3"/><circle class="cg" cx="1137.5" cy="563.0" r="3.3"/><circle class="co" cx="1065.0" cy="570.5" r="3.3"/><circle class="co" cx="1085.0" cy="573.0" r="3.3"/><circle class="cb" cx="1097.5" cy="570.5" r="3.3"/><circle class="cr" cx="1120.0" cy="566.8" r="3.3"/><circle class="cg" cx="1112.5" cy="574.2" r="3.3"/><circle class="cr" cx="1120.0" cy="573.0" r="3.3"/><circle class="cr" cx="1121.2" cy="576.8" r="3.3"/><circle class="co" cx="1125.0" cy="578.0" r="3.3"/><circle class="co" cx="1126.2" cy="580.5" r="3.3"/><circle class="cr" cx="1051.2" cy="579.2" r="3.3"/><circle class="cr" cx="1098.8" cy="581.8" r="3.3"/><circle class="cr" cx="1110.0" cy="581.8" r="3.3"/><circle class="cr" cx="1122.5" cy="586.8" r="3.3"/><circle class="cr" cx="1117.5" cy="590.5" r="3.3"/><circle class="co" cx="1132.5" cy="595.5" r="3.3"/><circle class="cr" cx="1130.0" cy="591.8" r="3.3"/><circle class="cr" cx="1120.0" cy="596.8" r="3.3"/><circle class="cr" cx="1131.2" cy="599.2" r="3.3"/><circle class="cr" cx="1083.8" cy="600.5" r="3.3"/><circle class="cr" cx="1095.0" cy="600.5" r="3.3"/><circle class="cr" cx="1105.0" cy="599.2" r="3.3"/><circle class="cr" cx="1107.5" cy="603.0" r="3.3"/><circle class="cr" cx="1145.0" cy="600.5" r="3.3"/><circle class="cr" cx="1148.8" cy="590.5" r="3.3"/><circle class="ck" cx="1158.8" cy="593.0" r="3.3"/><circle class="cr" cx="1163.8" cy="590.5" r="3.3"/><circle class="cb" cx="1167.5" cy="588.0" r="3.3"/><circle class="cr" cx="1161.2" cy="594.2" r="3.3"/><circle class="cr" cx="1163.8" cy="598.0" r="3.3"/><circle class="cp" cx="1161.2" cy="601.8" r="3.3"/><circle class="cp" cx="1131.2" cy="605.5" r="3.3"/><circle class="cp" cx="1136.2" cy="605.5" r="3.3"/><circle class="cp" cx="1131.2" cy="614.2" r="3.3"/><circle class="co" cx="1131.2" cy="608.0" r="3.3"/><circle class="ck" cx="1125.0" cy="613.0" r="3.3"/><circle class="cr" cx="1191.2" cy="574.2" r="3.3"/><circle class="cw" cx="1201.2" cy="575.5" r="3.3"/><circle class="cp" cx="1216.2" cy="564.2" r="3.3"/><circle class="cr" cx="1221.2" cy="581.8" r="3.3"/><circle class="cr" cx="1251.2" cy="579.2" r="3.3"/><circle class="cr" cx="1263.8" cy="581.8" r="3.3"/><circle class="cr" cx="1257.5" cy="556.8" r="3.3"/><circle class="cr" cx="1261.2" cy="556.8" r="3.3"/><circle class="co" cx="1195.0" cy="609.2" r="3.3"/><circle class="cr" cx="1072.5" cy="628.0" r="3.3"/><circle class="cp" cx="1076.2" cy="631.8" r="3.3"/><circle class="cr" cx="1075.0" cy="636.8" r="3.3"/><circle class="cr" cx="1106.2" cy="644.2" r="3.3"/><circle class="cr" cx="1052.5" cy="644.2" r="3.3"/><circle class="cr" cx="1056.2" cy="649.2" r="3.3"/><circle class="co" cx="1062.5" cy="661.8" r="3.3"/><circle class="co" cx="1052.5" cy="671.8" r="3.3"/><circle class="cp" cx="1116.2" cy="669.2" r="3.3"/><circle class="ck" cx="1155.0" cy="663.0" r="3.3"/><circle class="cr" cx="1151.2" cy="663.0" r="3.3"/><circle class="cr" cx="1145.0" cy="668.0" r="3.3"/><circle class="cr" cx="1141.2" cy="670.5" r="3.3"/><circle class="co" cx="1252.5" cy="625.5" r="3.3"/><circle class="cr" cx="1256.2" cy="633.0" r="3.3"/><circle class="co" cx="1251.2" cy="634.2" r="3.3"/><circle class="cr x" cx="1246.2" cy="638.0" r="3.3"/><circle class="co x" cx="1241.2" cy="640.5" r="3.3"/><circle class="co x" cx="1237.5" cy="643.0" r="3.3"/><circle class="co x" cx="1235.0" cy="645.5" r="3.3"/><circle class="cr x" cx="1233.8" cy="651.8" r="3.3"/><circle class="co x" cx="1231.2" cy="649.2" r="3.3"/><circle class="co" cx="1226.2" cy="654.2" r="3.3"/><circle class="ca x" cx="1221.2" cy="658.0" r="3.3"/><circle class="cr" cx="1213.8" cy="659.2" r="3.3"/><circle class="co x" cx="1212.5" cy="661.8" r="3.3"/><circle class="co x" cx="1218.8" cy="663.0" r="3.3"/><circle class="co x" cx="1215.0" cy="666.8" r="3.3"/><circle class="co x" cx="1211.2" cy="669.2" r="3.3"/><circle class="co x" cx="1207.5" cy="671.8" r="3.3"/><circle class="co" cx="1278.8" cy="615.5" r="3.3"/><circle class="cr" cx="1285.0" cy="613.0" r="3.3"/><circle class="co" cx="1290.0" cy="610.5" r="3.3"/><circle class="co" cx="1288.8" cy="626.8" r="3.3"/><circle class="ca" cx="1282.5" cy="639.2" r="3.3"/><circle class="co" cx="1285.0" cy="639.2" r="3.3"/><circle class="cr" cx="1305.0" cy="558.0" r="3.3"/><circle class="co" cx="1308.8" cy="564.2" r="3.3"/><circle class="co" cx="1308.8" cy="570.5" r="3.3"/><circle class="co" cx="1301.2" cy="579.2" r="3.3"/><circle class="co" cx="1296.2" cy="586.8" r="3.3"/><circle class="co" cx="1293.8" cy="596.8" r="3.3"/><circle class="cm" cx="1295.0" cy="601.8" r="3.3"/><circle class="cw" cx="1295.0" cy="606.8" r="3.3"/><circle class="co" cx="1291.2" cy="610.5" r="3.3"/><circle class="co" cx="1291.2" cy="626.8" r="3.3"/><circle class="cr" cx="1327.5" cy="594.2" r="3.3"/><circle class="cr" cx="1341.2" cy="590.5" r="3.3"/><circle class="ck" cx="1342.5" cy="586.8" r="3.3"/><circle class="cr" cx="1357.5" cy="581.8" r="3.3"/><circle class="ck" cx="1366.2" cy="576.8" r="3.3"/><circle class="cr" cx="1378.8" cy="574.2" r="3.3"/><circle class="ck" cx="1380.0" cy="569.2" r="3.3"/><circle class="cp" cx="1387.5" cy="570.5" r="3.3"/><circle class="co" cx="1390.0" cy="568.0" r="3.3"/><circle class="co" cx="1396.2" cy="568.0" r="3.3"/><circle class="cr" cx="1398.8" cy="564.2" r="3.3"/><circle class="cr" cx="1402.5" cy="568.0" r="3.3"/><circle class="cr" cx="1405.0" cy="571.8" r="3.3"/><circle class="cr" cx="1410.0" cy="565.5" r="3.3"/><circle class="cr" cx="1408.8" cy="571.8" r="3.3"/><circle class="cr" cx="1412.5" cy="561.8" r="3.3"/><circle class="co" cx="1416.2" cy="556.8" r="3.3"/><circle class="co" cx="1420.0" cy="565.5" r="3.3"/><circle class="cr" cx="1420.0" cy="551.8" r="3.3"/><circle class="cy" cx="1411.2" cy="576.8" r="3.3"/><circle class="cr" cx="1408.8" cy="580.5" r="3.3"/><circle class="cr" cx="1401.2" cy="584.2" r="3.3"/><circle class="cr" cx="1397.5" cy="589.2" r="3.3"/><circle class="cr" cx="1401.2" cy="588.0" r="3.3"/><circle class="cr" cx="1393.8" cy="593.0" r="3.3"/><circle class="ck" cx="1386.2" cy="600.5" r="3.3"/><circle class="co" cx="1401.2" cy="610.5" r="3.3"/><circle class="cr" cx="1435.0" cy="554.2" r="3.3"/><circle class="cr" cx="1442.5" cy="554.2" r="3.3"/><circle class="cr" cx="1451.2" cy="553.0" r="3.3"/><circle class="ck" cx="1442.5" cy="566.8" r="3.3"/><circle class="cl" cx="1441.2" cy="563.0" r="3.3"/><circle class="cr" cx="1430.0" cy="576.8" r="3.3"/><circle class="cr" cx="1426.2" cy="594.2" r="3.3"/><circle class="cr" cx="1420.0" cy="605.5" r="3.3"/><circle class="cr" cx="1448.8" cy="571.8" r="3.3"/><circle class="cr" cx="1451.2" cy="575.5" r="3.3"/><circle class="cr" cx="1442.5" cy="576.8" r="3.3"/><circle class="cr" cx="1450.0" cy="580.5" r="3.3"/><circle class="cr" cx="1443.8" cy="584.2" r="3.3"/><circle class="cr" cx="1452.5" cy="584.2" r="3.3"/><circle class="cr" cx="1442.5" cy="588.0" r="3.3"/><circle class="co" cx="1447.5" cy="586.8" r="3.3"/><circle class="cg" cx="1452.5" cy="591.8" r="3.3"/><circle class="cr" cx="1448.8" cy="590.5" r="3.3"/><circle class="cr" cx="1446.2" cy="601.8" r="3.3"/><circle class="ca" cx="1451.2" cy="599.2" r="3.3"/><circle class="co" cx="1443.8" cy="605.5" r="3.3"/><circle class="ck" cx="1448.8" cy="608.0" r="3.3"/><circle class="co" cx="1446.2" cy="614.2" r="3.3"/><circle class="co" cx="1448.8" cy="623.0" r="3.3"/><circle class="ck" cx="1450.0" cy="636.8" r="3.3"/><circle class="cr" cx="1465.0" cy="548.0" r="3.3"/><circle class="cr" cx="1471.2" cy="551.8" r="3.3"/><circle class="cr" cx="1465.0" cy="558.0" r="3.3"/><circle class="cr" cx="1466.2" cy="565.5" r="3.3"/><circle class="cr" cx="1470.0" cy="573.0" r="3.3"/><circle class="cr" cx="1480.0" cy="553.0" r="3.3"/><circle class="cr" cx="1486.2" cy="553.0" r="3.3"/><circle class="cr" cx="1478.8" cy="558.0" r="3.3"/><circle class="cr" cx="1498.8" cy="556.8" r="3.3"/><circle class="co" cx="1518.8" cy="564.2" r="3.3"/><circle class="co" cx="1515.0" cy="570.5" r="3.3"/><circle class="cr" cx="1465.0" cy="589.2" r="3.3"/><circle class="cr" cx="1471.2" cy="590.5" r="3.3"/><circle class="cr x" cx="1472.5" cy="595.5" r="3.3"/><circle class="cr" cx="1467.5" cy="598.0" r="3.3"/><circle class="cr" cx="1477.5" cy="596.8" r="3.3"/><circle class="ck x" cx="1475.0" cy="599.2" r="3.3"/><circle class="cr" cx="1472.5" cy="603.0" r="3.3"/><circle class="cr" cx="1473.8" cy="608.0" r="3.3"/><circle class="cr" cx="1475.0" cy="613.0" r="3.3"/><circle class="co" cx="1477.5" cy="615.5" r="3.3"/><circle class="cl" cx="1478.8" cy="616.8" r="3.3"/><circle class="cr" cx="1481.2" cy="620.5" r="3.3"/><circle class="cr" cx="1486.2" cy="594.2" r="3.3"/><circle class="cr" cx="1491.2" cy="591.8" r="3.3"/><circle class="cp" cx="1495.0" cy="595.5" r="3.3"/><circle class="cr" cx="1505.0" cy="608.0" r="3.3"/><circle class="cr" cx="1357.5" cy="626.8" r="3.3"/><circle class="cr" cx="1357.5" cy="634.2" r="3.3"/><circle class="cr" cx="1316.2" cy="639.2" r="3.3"/><circle class="cr" cx="1323.8" cy="646.8" r="3.3"/><circle class="cb" cx="1332.5" cy="648.0" r="3.3"/><circle class="cp" cx="1337.5" cy="650.5" r="3.3"/><circle class="cp" cx="1360.0" cy="643.0" r="3.3"/><circle class="cp" cx="1353.8" cy="646.8" r="3.3"/><circle class="cp" cx="1358.8" cy="646.8" r="3.3"/><circle class="co" cx="1360.0" cy="650.5" r="3.3"/><circle class="cr" cx="1355.0" cy="651.8" r="3.3"/><circle class="cr" cx="1358.8" cy="659.2" r="3.3"/><circle class="cp" cx="1360.0" cy="656.8" r="3.3"/><circle class="cp" cx="1363.8" cy="660.5" r="3.3"/><circle class="cp" cx="1366.2" cy="665.5" r="3.3"/><circle class="cr" cx="1307.5" cy="660.5" r="3.3"/><circle class="cg" cx="1298.8" cy="665.5" r="3.3"/><circle class="ck" cx="1305.0" cy="666.8" r="3.3"/><circle class="cr" cx="1346.2" cy="668.0" r="3.3"/><circle class="cb" cx="1352.5" cy="671.8" r="3.3"/><circle class="cr" cx="1405.0" cy="634.2" r="3.3"/><circle class="ck" cx="1415.0" cy="630.5" r="3.3"/><circle class="cr" cx="1422.5" cy="629.2" r="3.3"/><circle class="co" cx="1427.5" cy="628.0" r="3.3"/><circle class="ck" cx="1403.8" cy="651.8" r="3.3"/><circle class="co" cx="1411.2" cy="669.2" r="3.3"/><circle class="cr" cx="1476.2" cy="639.2" r="3.3"/><circle class="cr" cx="1482.5" cy="635.5" r="3.3"/><circle class="cp" cx="1482.5" cy="640.5" r="3.3"/><circle class="ck" cx="1465.0" cy="651.8" r="3.3"/><circle class="cl" cx="1501.2" cy="649.2" r="3.3"/><circle class="cr" cx="1513.8" cy="653.0" r="3.3"/><circle class="cr" cx="1506.2" cy="659.2" r="3.3"/><circle class="co" cx="1507.5" cy="660.5" r="3.3"/><circle class="cl" cx="1485.0" cy="664.2" r="3.3"/><circle class="cr" cx="1490.0" cy="669.2" r="3.3"/><circle class="cg" cx="1495.0" cy="668.0" r="3.3"/><circle class="co" cx="1527.5" cy="633.0" r="3.3"/><circle class="ck" cx="1527.5" cy="638.0" r="3.3"/><circle class="cr" cx="1522.5" cy="641.8" r="3.3"/><circle class="cr" cx="1547.5" cy="611.8" r="3.3"/><circle class="ck" cx="1543.8" cy="614.2" r="3.3"/><circle class="co" cx="1537.5" cy="620.5" r="3.3"/><circle class="cr" cx="1625.0" cy="615.5" r="3.3"/><circle class="cr" cx="1628.8" cy="615.5" r="3.3"/><circle class="co" cx="1530.0" cy="633.0" r="3.3"/><circle class="cr" cx="1533.8" cy="644.2" r="3.3"/><circle class="cr" cx="1562.5" cy="683.0" r="3.3"/><circle class="co" cx="1561.2" cy="688.0" r="3.3"/><circle class="cr" cx="1565.0" cy="691.8" r="3.3"/><circle class="cr" cx="1562.5" cy="690.5" r="3.3"/><circle class="co" cx="1558.8" cy="694.2" r="3.3"/><circle class="cy" cx="1573.8" cy="705.5" r="3.3"/><circle class="cr" cx="1118.8" cy="674.5" r="3.3"/><circle class="cr" cx="1193.8" cy="677.0" r="3.3"/><circle class="cr" cx="1198.8" cy="678.2" r="3.3"/><circle class="ca" cx="1213.8" cy="674.5" r="3.3"/><circle class="cr" cx="1223.8" cy="677.0" r="3.3"/><circle class="co" cx="1220.0" cy="677.0" r="3.3"/><circle class="cr" cx="1218.8" cy="683.2" r="3.3"/><circle class="cp" cx="1098.8" cy="687.0" r="3.3"/><circle class="cp" cx="1103.8" cy="685.8" r="3.3"/><circle class="co" cx="1098.8" cy="695.8" r="3.3"/><circle class="co" cx="1101.2" cy="694.5" r="3.3"/><circle class="co" cx="1102.5" cy="693.2" r="3.3"/><circle class="cp" cx="1103.8" cy="699.5" r="3.3"/><circle class="cl" cx="1080.0" cy="695.8" r="3.3"/><circle class="cb" cx="1101.2" cy="705.8" r="3.3"/><circle class="cp" cx="1095.0" cy="709.5" r="3.3"/><circle class="cp" cx="1087.5" cy="709.5" r="3.3"/><circle class="co" cx="1120.0" cy="690.8" r="3.3"/><circle class="cr" cx="1128.8" cy="695.8" r="3.3"/><circle class="co" cx="1132.5" cy="694.5" r="3.3"/><circle class="co" cx="1150.0" cy="692.0" r="3.3"/><circle class="cr" cx="1153.8" cy="690.8" r="3.3"/><circle class="cr" cx="1152.5" cy="699.5" r="3.3"/><circle class="ck" cx="1162.5" cy="692.0" r="3.3"/><circle class="ck" cx="1165.0" cy="697.0" r="3.3"/><circle class="co" cx="1172.5" cy="695.8" r="3.3"/><circle class="co" cx="1185.0" cy="687.0" r="3.3"/><circle class="co" cx="1181.2" cy="692.0" r="3.3"/><circle class="cr" cx="1192.5" cy="689.5" r="3.3"/><circle class="cr" cx="1187.5" cy="692.0" r="3.3"/><circle class="co" cx="1191.2" cy="698.2" r="3.3"/><circle class="cr" cx="1286.2" cy="692.0" r="3.3"/><circle class="co" cx="1067.5" cy="707.0" r="3.3"/><circle class="cb x" cx="1071.2" cy="710.8" r="3.3"/><circle class="co" cx="1070.0" cy="713.2" r="3.3"/><circle class="co" cx="1078.8" cy="714.5" r="3.3"/><circle class="cl" cx="1060.0" cy="713.2" r="3.3"/><circle class="cl" cx="1062.5" cy="712.0" r="3.3"/><circle class="cr" cx="1052.5" cy="718.2" r="3.3"/><circle class="co" cx="1050.0" cy="723.2" r="3.3"/><circle class="co" cx="1061.2" cy="723.2" r="3.3"/><circle class="co" cx="1163.8" cy="712.0" r="3.3"/><circle class="co" cx="1110.0" cy="727.0" r="3.3"/><circle class="cl" cx="1150.0" cy="727.0" r="3.3"/><circle class="cp" cx="1075.0" cy="737.0" r="3.3"/><circle class="ck" cx="1095.0" cy="743.2" r="3.3"/><circle class="co" cx="1098.8" cy="750.8" r="3.3"/><circle class="cr" cx="1173.8" cy="733.2" r="3.3"/><circle class="cr" cx="1175.0" cy="739.5" r="3.3"/><circle class="cr" cx="1175.0" cy="744.5" r="3.3"/><circle class="cr" cx="1140.0" cy="770.8" r="3.3"/><circle class="cl" cx="1140.0" cy="768.2" r="3.3"/><circle class="cg" cx="1301.2" cy="679.5" r="3.3"/><circle class="co" cx="1297.5" cy="682.0" r="3.3"/><circle class="cb" cx="1293.8" cy="685.8" r="3.3"/><circle class="co" cx="1296.2" cy="690.8" r="3.3"/><circle class="cg" cx="1363.8" cy="678.2" r="3.3"/><circle class="co" cx="1362.5" cy="687.0" r="3.3"/><circle class="cg" cx="1367.5" cy="694.5" r="3.3"/><circle class="cr" cx="1391.2" cy="680.8" r="3.3"/><circle class="cr" cx="1410.0" cy="677.0" r="3.3"/><circle class="cp" cx="1411.2" cy="673.2" r="3.3"/><circle class="cr" cx="1406.2" cy="687.0" r="3.3"/><circle class="cr" cx="1391.2" cy="689.5" r="3.3"/><circle class="ck" cx="1388.8" cy="694.5" r="3.3"/><circle class="ck" cx="1403.8" cy="692.0" r="3.3"/><circle class="co" cx="1332.5" cy="689.5" r="3.3"/><circle class="cr" cx="1330.0" cy="695.8" r="3.3"/><circle class="cr" cx="1307.5" cy="698.2" r="3.3"/><circle class="cl" cx="1340.0" cy="705.8" r="3.3"/><circle class="cr" cx="1368.8" cy="703.2" r="3.3"/><circle class="co" cx="1368.8" cy="704.5" r="3.3"/><circle class="cp" cx="1393.8" cy="704.5" r="3.3"/><circle class="cr" cx="1397.5" cy="703.2" r="3.3"/><circle class="cr" cx="1388.8" cy="710.8" r="3.3"/><circle class="cr" cx="1392.5" cy="713.2" r="3.3"/><circle class="co" cx="1393.8" cy="709.5" r="3.3"/><circle class="cr" cx="1372.5" cy="712.0" r="3.3"/><circle class="cr" cx="1380.0" cy="713.2" r="3.3"/><circle class="cl" cx="1376.2" cy="717.0" r="3.3"/><circle class="cr" cx="1380.0" cy="714.5" r="3.3"/><circle class="cb" cx="1321.2" cy="714.5" r="3.3"/><circle class="co" cx="1300.0" cy="720.8" r="3.3"/><circle class="cr" cx="1341.2" cy="718.2" r="3.3"/><circle class="cp" cx="1323.8" cy="723.2" r="3.3"/><circle class="cb" cx="1320.0" cy="724.5" r="3.3"/><circle class="cr" cx="1341.2" cy="725.8" r="3.3"/><circle class="cr" cx="1345.0" cy="725.8" r="3.3"/><circle class="co" cx="1335.0" cy="725.8" r="3.3"/><circle class="cr" cx="1328.8" cy="729.5" r="3.3"/><circle class="cr" cx="1333.8" cy="728.2" r="3.3"/><circle class="ck" cx="1320.0" cy="730.8" r="3.3"/><circle class="cb" cx="1325.0" cy="730.8" r="3.3"/><circle class="co" cx="1327.5" cy="733.2" r="3.3"/><circle class="cr" cx="1353.8" cy="727.0" r="3.3"/><circle class="cr" cx="1366.2" cy="725.8" r="3.3"/><circle class="cr" cx="1370.0" cy="732.0" r="3.3"/><circle class="cl" cx="1371.2" cy="729.5" r="3.3"/><circle class="ca" cx="1373.8" cy="722.0" r="3.3"/><circle class="cr" cx="1365.0" cy="733.2" r="3.3"/><circle class="cr" cx="1380.0" cy="729.5" r="3.3"/><circle class="cr" cx="1318.8" cy="735.8" r="3.3"/><circle class="cr" cx="1332.5" cy="738.2" r="3.3"/><circle class="cr" cx="1340.0" cy="735.8" r="3.3"/><circle class="cr" cx="1343.8" cy="734.5" r="3.3"/><circle class="co" cx="1313.8" cy="744.5" r="3.3"/><circle class="cb" cx="1315.0" cy="740.8" r="3.3"/><circle class="cr" cx="1326.2" cy="744.5" r="3.3"/><circle class="cr" cx="1348.8" cy="743.2" r="3.3"/><circle class="ck" cx="1336.2" cy="748.2" r="3.3"/><circle class="cr" cx="1378.8" cy="749.5" r="3.3"/><circle class="cr" cx="1362.5" cy="755.8" r="3.3"/><circle class="cr" cx="1357.5" cy="758.2" r="3.3"/><circle class="cb" cx="1366.2" cy="762.0" r="3.3"/><circle class="ck" cx="1335.0" cy="770.8" r="3.3"/><circle class="cb" cx="1338.8" cy="775.8" r="3.3"/><circle class="co" cx="1345.0" cy="777.0" r="3.3"/><circle class="cw" cx="1350.0" cy="773.2" r="3.3"/><circle class="ca" cx="1361.2" cy="772.0" r="3.3"/><circle class="co" cx="1357.5" cy="774.5" r="3.3"/><circle class="ca" cx="1342.5" cy="782.0" r="3.3"/><circle class="cg" cx="1356.2" cy="783.2" r="3.3"/><circle class="ca" cx="1361.2" cy="785.8" r="3.3"/><circle class="cb" cx="1366.2" cy="783.2" r="3.3"/><circle class="cr" cx="1352.5" cy="787.0" r="3.3"/><circle class="cr" cx="1353.8" cy="792.0" r="3.3"/><circle class="cr" cx="1367.5" cy="794.5" r="3.3"/><circle class="co" cx="1366.2" cy="790.8" r="3.3"/><circle class="co" cx="1363.8" cy="798.2" r="3.3"/><circle class="co" cx="1358.8" cy="800.8" r="3.3"/><circle class="cr" cx="1462.5" cy="685.8" r="3.3"/><circle class="co" cx="1467.5" cy="683.2" r="3.3"/><circle class="cl" cx="1470.0" cy="680.8" r="3.3"/><circle class="cg" cx="1476.2" cy="683.2" r="3.3"/><circle class="cl" cx="1473.8" cy="682.0" r="3.3"/><circle class="ck" cx="1481.2" cy="680.8" r="3.3"/><circle class="cb" cx="1356.2" cy="806.2" r="3.3"/><circle class="cp" cx="1367.5" cy="805.0" r="3.3"/><circle class="cr x" cx="1361.2" cy="808.8" r="3.3"/><circle class="cl x" cx="1366.2" cy="808.8" r="3.3"/><circle class="cr" cx="1372.5" cy="808.8" r="3.3"/><circle class="cr" cx="1375.0" cy="810.0" r="3.3"/><circle class="ck" cx="1357.5" cy="812.5" r="3.3"/><circle class="cr" cx="1365.0" cy="815.0" r="3.3"/><circle class="cp" cx="1372.5" cy="815.0" r="3.3"/><circle class="cr" cx="1371.2" cy="817.5" r="3.3"/><circle class="ck" cx="1382.5" cy="821.2" r="3.3"/><circle class="cg x" cx="1243.8" cy="395.0" r="3.3"/><circle class="cg x" cx="1237.5" cy="400.0" r="3.3"/><circle class="cg x" cx="1243.8" cy="403.8" r="3.3"/><circle class="cg x" cx="1237.5" cy="410.0" r="3.3"/><circle class="cg x" cx="1251.2" cy="411.2" r="3.3"/><circle class="cg" cx="1245.0" cy="415.0" r="3.3"/><circle class="cg x" cx="1256.2" cy="417.5" r="3.3"/><circle class="cg x" cx="1237.5" cy="415.0" r="3.3"/><circle class="cg x" cx="1228.8" cy="425.0" r="3.3"/><circle class="cg x" cx="1233.8" cy="426.2" r="3.3"/><circle class="cg x" cx="1257.5" cy="425.0" r="3.3"/><circle class="cg x" cx="1251.2" cy="422.5" r="3.3"/><circle class="cg x" cx="1265.0" cy="400.0" r="3.3"/><circle class="cg x" cx="1266.2" cy="405.0" r="3.3"/><circle class="cg x" cx="1247.5" cy="442.5" r="3.3"/><circle class="cg x" cx="1252.5" cy="442.5" r="3.3"/><circle class="cg" cx="1257.5" cy="445.0" r="3.3"/><circle class="cg x" cx="1245.0" cy="446.2" r="3.3"/><circle class="cg" cx="1282.5" cy="447.5" r="3.3"/><circle class="cr x" cx="1252.5" cy="416.2" r="3.3"/><circle class="cr x" cx="1242.5" cy="420.0" r="3.3"/><circle class="co" cx="1231.2" cy="416.2" r="3.3"/><circle class="ck x" cx="1245.0" cy="406.2" r="3.3"/><circle class="cb x" cx="1233.8" cy="398.8" r="3.3"/><circle class="cb x" cx="1242.5" cy="401.2" r="3.3"/><circle class="cb x" cx="1225.0" cy="393.8" r="3.3"/><circle class="co x" cx="1217.5" cy="396.2" r="3.3"/><circle class="cy x" cx="1212.5" cy="391.2" r="3.3"/><circle class="co x" cx="1223.8" cy="378.8" r="3.3"/><circle class="ca x" cx="1242.5" cy="382.5" r="3.3"/><circle class="co" cx="1251.2" cy="405.0" r="3.3"/></svg>
<div class="abs" style="left:0;top:1015px;width:1912px;height:1px;background:#a0a0a0"></div>
<div id="status"><span style="left:0;width:99px;padding-left:5px">MapsID: 3868</span><span style="left:101px;width:79px">png</span><span style="left:182px;width:98px">MinZoom: 8</span><span style="left:282px;width:98px">MaxZoom: 18</span><span style="left:382px;width:98px">TileSize: 256</span><span style="left:482px;width:98px">EPSG:3857</span><span style="left:582px;width:1330px;letter-spacing:0.01px;padding-left:1px">Longitude=10.222778, Latitude=46.758680, tile=8/135/90.png</span></div>
</body></html>
